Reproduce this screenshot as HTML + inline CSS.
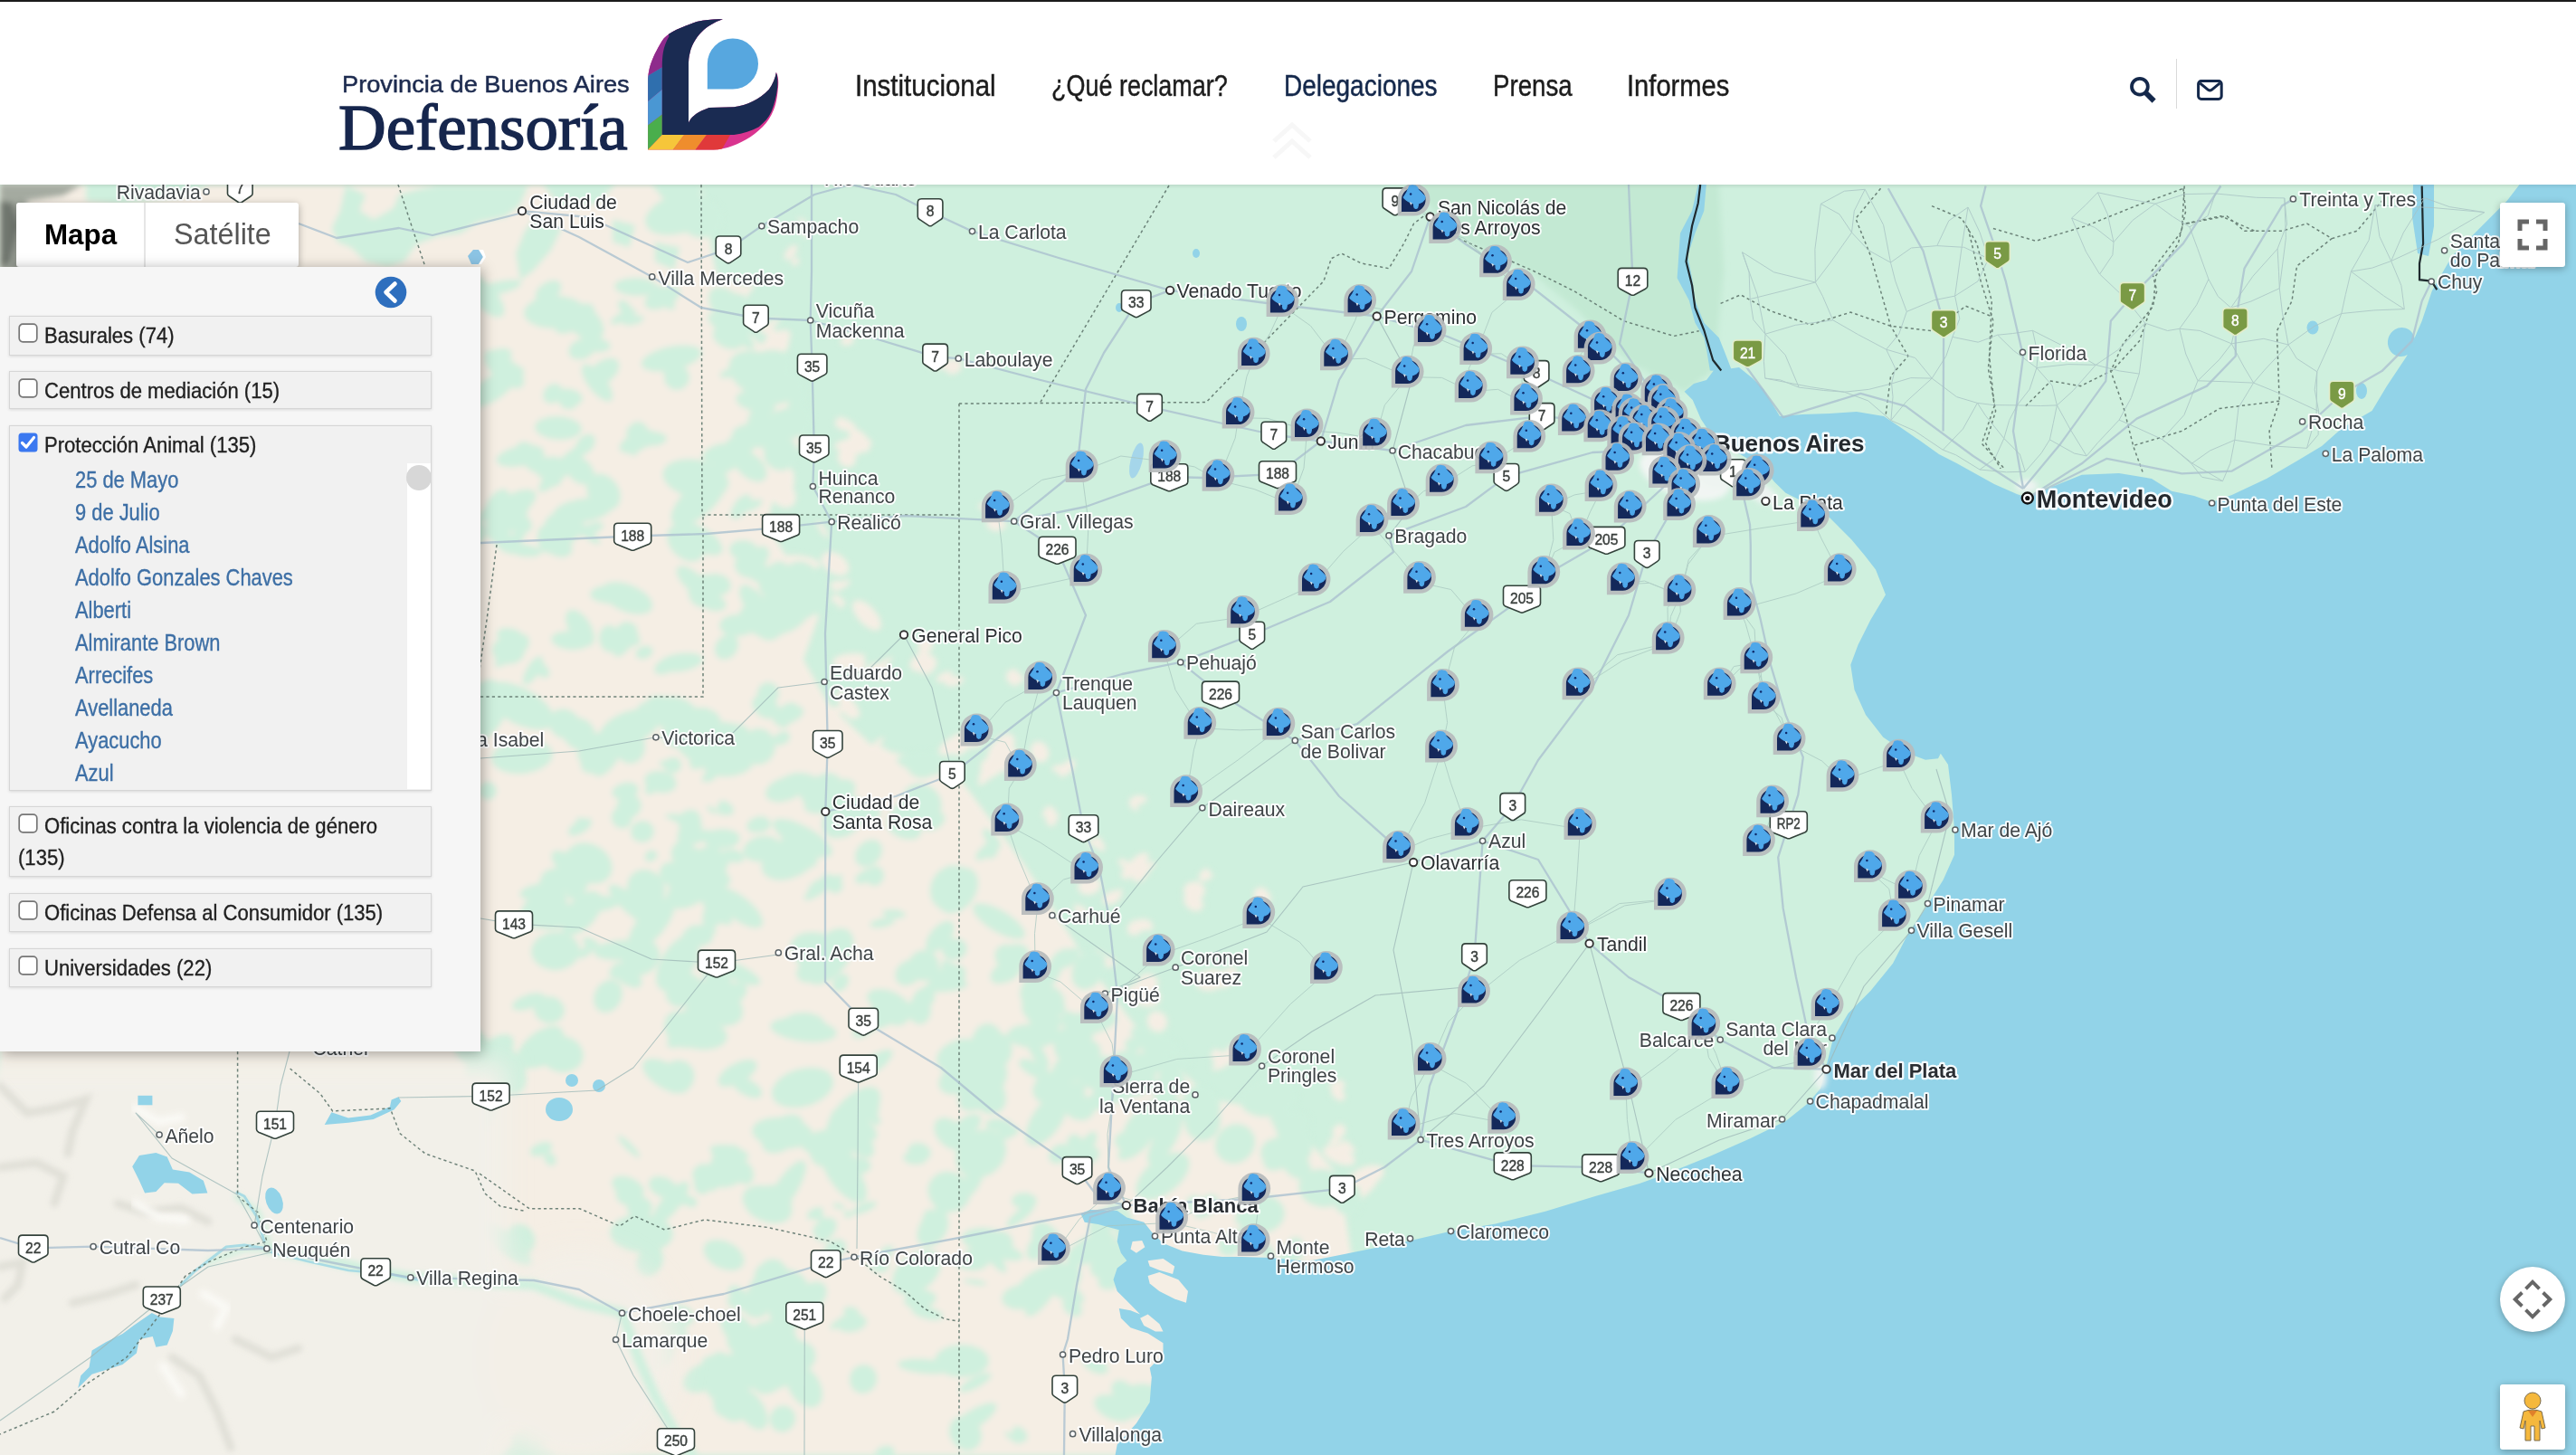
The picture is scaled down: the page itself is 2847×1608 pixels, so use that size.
<!DOCTYPE html>
<html><head><meta charset="utf-8"><title>Defensoría</title>
<style>html,body{margin:0;padding:0}body{width:2847px;height:1608px;overflow:hidden;position:relative;background:#fff;font-family:'Liberation Sans',sans-serif}</style></head>
<body>
<div style="position:absolute;left:0;top:204px;width:2847px;height:1404px;overflow:hidden;background:#cff0de"><svg width="2847" height="1404" viewBox="0 204 2847 1404" style="position:absolute;left:0;top:0;display:block" font-family="Liberation Sans, sans-serif"><defs><filter id="bl" x="-5%" y="-5%" width="110%" height="110%"><feGaussianBlur stdDeviation="3"/></filter><filter id="bl2"><feGaussianBlur stdDeviation="14"/></filter><g id="mk"><path d="M0,-17.9A17.9,17.9 0 1 1 0,17.9L-17.9,17.9L-17.9,0A17.9,17.9 0 0 1 0,-17.9Z" fill="#b7bbbc" fill-opacity="0.93"/><path d="M-0.3,-13.2A13.3,13.3 0 1 1 -0.3,13.4L-13.6,13.4L-13.6,0A13.3,13.3 0 0 1 -0.3,-13.2Z" fill="#14285a"/><path d="M-4.6,-15.3L-1.7,-15.9L2,-15.3L4,-13.6L4.6,-11.3L6.9,-8.9L9.8,-6.1L12.4,-3.2L11.8,-0.3L9.8,2L6.9,3.5L4.9,4.3L4.6,6.6L4,8.9L2.3,9.8L0.6,8.9L0,6.6L0.3,4.9L-1.7,3.8L-5.8,2L-8.4,0.3L-10.4,-1.4L-11.3,-2.6L-9.8,-4.9L-8.1,-7.5L-6.9,-10.1L-5.8,-13Z" fill="#4fa8ea" stroke="#4fa8ea" stroke-width="1.2" stroke-linejoin="round"/><path d="M-4.8,2.6L-2,3.6L-3.2,6.4Z" fill="#dfe9ee"/><circle cx="-3.5" cy="-6.2" r="1.25" fill="#0d2a6b"/></g></defs><rect x="0" y="204" width="2847" height="1404" fill="#cff0de"/><polygon points="1560.0,204.0 1900.0,204.0 1905.0,300.0 1895.0,408.0 1862.0,433.0 1800.0,400.0 1740.0,340.0 1690.0,300.0 1610.0,262.0" fill="#c3e9d3" filter="url(#bl)"/><g filter="url(#bl)"><polygon points="0.0,204.0 775.0,204.0 790.0,296.0 820.0,360.0 868.0,407.0 890.0,469.0 880.0,508.0 858.0,537.0 848.0,580.0 880.0,633.0 905.0,681.0 888.0,729.0 915.0,777.0 965.0,825.0 1053.0,850.0 1131.0,954.0 1209.0,1074.0 1261.0,1142.0 1339.0,1215.0 1420.0,1230.0 1480.0,1300.0 1495.0,1395.0 1300.0,1400.0 1300.0,1608.0 0.0,1608.0" fill="#f5eee4"/><g fill="#f5eee4"><ellipse cx="1100" cy="576" rx="9" ry="5" transform="rotate(-46 1100 576)"/><ellipse cx="1099" cy="562" rx="18" ry="6" transform="rotate(11 1099 562)"/><ellipse cx="1101" cy="579" rx="11" ry="8" transform="rotate(7 1101 579)"/><ellipse cx="1333" cy="969" rx="8" ry="4" transform="rotate(-20 1333 969)"/><ellipse cx="1331" cy="967" rx="8" ry="5" transform="rotate(-55 1331 967)"/><ellipse cx="1106" cy="830" rx="22" ry="12" transform="rotate(-57 1106 830)"/><ellipse cx="1113" cy="840" rx="16" ry="12" transform="rotate(-24 1113 840)"/><ellipse cx="1095" cy="848" rx="12" ry="10" transform="rotate(-33 1095 848)"/><ellipse cx="1258" cy="884" rx="10" ry="5" transform="rotate(-7 1258 884)"/><ellipse cx="1253" cy="890" rx="4" ry="3" transform="rotate(-4 1253 890)"/><ellipse cx="1253" cy="891" rx="7" ry="3" transform="rotate(46 1253 891)"/><ellipse cx="1479" cy="1209" rx="9" ry="6" transform="rotate(43 1479 1209)"/><ellipse cx="1480" cy="1198" rx="5" ry="5" transform="rotate(41 1480 1198)"/><ellipse cx="1478" cy="1200" rx="9" ry="5" transform="rotate(-4 1478 1200)"/><ellipse cx="1055" cy="753" rx="11" ry="5" transform="rotate(-14 1055 753)"/><ellipse cx="1044" cy="748" rx="10" ry="5" transform="rotate(-24 1044 748)"/><ellipse cx="935" cy="377" rx="6" ry="5" transform="rotate(-8 935 377)"/><ellipse cx="937" cy="376" rx="7" ry="5" transform="rotate(-35 937 376)"/><ellipse cx="938" cy="375" rx="6" ry="6" transform="rotate(29 938 375)"/><ellipse cx="946" cy="495" rx="8" ry="7" transform="rotate(52 946 495)"/><ellipse cx="950" cy="487" rx="15" ry="9" transform="rotate(51 950 487)"/><ellipse cx="937" cy="778" rx="19" ry="7" transform="rotate(49 937 778)"/><ellipse cx="924" cy="662" rx="5" ry="5" transform="rotate(-14 924 662)"/><ellipse cx="929" cy="664" rx="5" ry="3" transform="rotate(20 929 664)"/><ellipse cx="930" cy="668" rx="5" ry="3" transform="rotate(-48 930 668)"/><ellipse cx="879" cy="289" rx="4" ry="5" transform="rotate(35 879 289)"/><ellipse cx="874" cy="279" rx="10" ry="5" transform="rotate(-52 874 279)"/><ellipse cx="850" cy="360" rx="13" ry="4" transform="rotate(-30 850 360)"/><ellipse cx="855" cy="369" rx="8" ry="5" transform="rotate(29 855 369)"/><ellipse cx="847" cy="367" rx="6" ry="3" transform="rotate(29 847 367)"/><ellipse cx="1314" cy="1419" rx="10" ry="8" transform="rotate(-16 1314 1419)"/><ellipse cx="1311" cy="1412" rx="17" ry="4" transform="rotate(-47 1311 1412)"/><ellipse cx="946" cy="735" rx="11" ry="9" transform="rotate(-5 946 735)"/><ellipse cx="939" cy="728" rx="18" ry="6" transform="rotate(-7 939 728)"/><ellipse cx="930" cy="735" rx="11" ry="4" transform="rotate(16 930 735)"/><ellipse cx="1509" cy="1315" rx="18" ry="5" transform="rotate(-43 1509 1315)"/><ellipse cx="1510" cy="1300" rx="21" ry="11" transform="rotate(-21 1510 1300)"/><ellipse cx="1247" cy="962" rx="11" ry="6" transform="rotate(-59 1247 962)"/><ellipse cx="1242" cy="954" rx="7" ry="4" transform="rotate(31 1242 954)"/><ellipse cx="1124" cy="749" rx="8" ry="5" transform="rotate(12 1124 749)"/><ellipse cx="1119" cy="747" rx="7" ry="8" transform="rotate(29 1119 747)"/><ellipse cx="1121" cy="750" rx="7" ry="8" transform="rotate(-25 1121 750)"/><ellipse cx="1491" cy="1267" rx="10" ry="3" transform="rotate(46 1491 1267)"/><ellipse cx="1483" cy="1268" rx="6" ry="5" transform="rotate(2 1483 1268)"/><ellipse cx="1489" cy="1271" rx="8" ry="3" transform="rotate(-36 1489 1271)"/><ellipse cx="1358" cy="1167" rx="18" ry="7" transform="rotate(-49 1358 1167)"/><ellipse cx="1346" cy="1168" rx="9" ry="7" transform="rotate(56 1346 1168)"/><ellipse cx="1351" cy="1171" rx="16" ry="5" transform="rotate(-49 1351 1171)"/><ellipse cx="909" cy="585" rx="11" ry="3" transform="rotate(56 909 585)"/><ellipse cx="1233" cy="991" rx="11" ry="4" transform="rotate(-51 1233 991)"/><ellipse cx="1229" cy="992" rx="11" ry="7" transform="rotate(-26 1229 992)"/><ellipse cx="1041" cy="402" rx="17" ry="6" transform="rotate(4 1041 402)"/><ellipse cx="1054" cy="405" rx="8" ry="10" transform="rotate(56 1054 405)"/><ellipse cx="1027" cy="736" rx="11" ry="7" transform="rotate(-54 1027 736)"/><ellipse cx="1019" cy="732" rx="14" ry="10" transform="rotate(-22 1019 732)"/><ellipse cx="891" cy="256" rx="5" ry="5" transform="rotate(-25 891 256)"/><ellipse cx="889" cy="248" rx="10" ry="3" transform="rotate(50 889 248)"/><ellipse cx="890" cy="257" rx="5" ry="5" transform="rotate(4 890 257)"/><ellipse cx="817" cy="325" rx="20" ry="6" transform="rotate(-33 817 325)"/><ellipse cx="811" cy="322" rx="17" ry="11" transform="rotate(29 811 322)"/><ellipse cx="930" cy="784" rx="11" ry="4" transform="rotate(1 930 784)"/><ellipse cx="938" cy="783" rx="13" ry="7" transform="rotate(59 938 783)"/><ellipse cx="1357" cy="1080" rx="14" ry="8" transform="rotate(-53 1357 1080)"/><ellipse cx="1338" cy="1083" rx="17" ry="12" transform="rotate(-12 1338 1083)"/><ellipse cx="1195" cy="1007" rx="10" ry="5" transform="rotate(38 1195 1007)"/><ellipse cx="859" cy="379" rx="13" ry="12" transform="rotate(27 859 379)"/><ellipse cx="857" cy="379" rx="20" ry="10" transform="rotate(-38 857 379)"/><ellipse cx="885" cy="621" rx="22" ry="7" transform="rotate(9 885 621)"/><ellipse cx="1394" cy="989" rx="9" ry="8" transform="rotate(40 1394 989)"/><ellipse cx="1397" cy="989" rx="10" ry="5" transform="rotate(42 1397 989)"/><ellipse cx="1480" cy="1277" rx="19" ry="9" transform="rotate(23 1480 1277)"/><ellipse cx="935" cy="469" rx="12" ry="5" transform="rotate(38 935 469)"/><ellipse cx="934" cy="470" rx="12" ry="6" transform="rotate(15 934 470)"/><ellipse cx="1217" cy="1061" rx="16" ry="7" transform="rotate(16 1217 1061)"/><ellipse cx="1207" cy="1060" rx="13" ry="8" transform="rotate(-38 1207 1060)"/><ellipse cx="1264" cy="1100" rx="19" ry="12" transform="rotate(17 1264 1100)"/><ellipse cx="1265" cy="1098" rx="17" ry="12" transform="rotate(22 1265 1098)"/><ellipse cx="1269" cy="1086" rx="11" ry="10" transform="rotate(11 1269 1086)"/><ellipse cx="1212" cy="932" rx="8" ry="4" transform="rotate(45 1212 932)"/><ellipse cx="1210" cy="930" rx="8" ry="4" transform="rotate(-25 1210 930)"/><ellipse cx="1215" cy="934" rx="8" ry="5" transform="rotate(48 1215 934)"/><ellipse cx="936" cy="506" rx="11" ry="10" transform="rotate(58 936 506)"/><ellipse cx="943" cy="491" rx="21" ry="7" transform="rotate(-6 943 491)"/><ellipse cx="971" cy="829" rx="11" ry="5" transform="rotate(16 971 829)"/><ellipse cx="970" cy="821" rx="9" ry="3" transform="rotate(-41 970 821)"/><ellipse cx="1088" cy="858" rx="6" ry="7" transform="rotate(48 1088 858)"/><ellipse cx="1087" cy="863" rx="8" ry="3" transform="rotate(-30 1087 863)"/><ellipse cx="1094" cy="856" rx="12" ry="4" transform="rotate(-18 1094 856)"/><ellipse cx="923" cy="623" rx="17" ry="11" transform="rotate(35 923 623)"/><ellipse cx="893" cy="398" rx="6" ry="3" transform="rotate(-45 893 398)"/><ellipse cx="1279" cy="1129" rx="12" ry="11" transform="rotate(58 1279 1129)"/><ellipse cx="1076" cy="814" rx="10" ry="13" transform="rotate(-21 1076 814)"/><ellipse cx="1068" cy="819" rx="20" ry="8" transform="rotate(-49 1068 819)"/><ellipse cx="1058" cy="821" rx="23" ry="9" transform="rotate(-29 1058 821)"/><ellipse cx="1149" cy="831" rx="10" ry="12" transform="rotate(-22 1149 831)"/><ellipse cx="1161" cy="901" rx="10" ry="4" transform="rotate(9 1161 901)"/><ellipse cx="1162" cy="907" rx="6" ry="6" transform="rotate(-14 1162 907)"/><ellipse cx="1161" cy="898" rx="8" ry="6" transform="rotate(50 1161 898)"/><ellipse cx="972" cy="742" rx="13" ry="8" transform="rotate(25 972 742)"/><ellipse cx="973" cy="736" rx="16" ry="4" transform="rotate(-35 973 736)"/><ellipse cx="958" cy="680" rx="21" ry="10" transform="rotate(47 958 680)"/><ellipse cx="1320" cy="984" rx="12" ry="10" transform="rotate(3 1320 984)"/><ellipse cx="1319" cy="997" rx="9" ry="12" transform="rotate(-51 1319 997)"/><ellipse cx="1255" cy="1025" rx="10" ry="8" transform="rotate(-38 1255 1025)"/><ellipse cx="1266" cy="1022" rx="9" ry="6" transform="rotate(26 1266 1022)"/><ellipse cx="1475" cy="1261" rx="7" ry="4" transform="rotate(-21 1475 1261)"/><ellipse cx="1480" cy="1250" rx="8" ry="7" transform="rotate(-53 1480 1250)"/><ellipse cx="1204" cy="979" rx="13" ry="10" transform="rotate(-12 1204 979)"/><ellipse cx="1021" cy="717" rx="7" ry="5" transform="rotate(-34 1021 717)"/><ellipse cx="1023" cy="712" rx="9" ry="8" transform="rotate(55 1023 712)"/><ellipse cx="1258" cy="953" rx="14" ry="7" transform="rotate(-41 1258 953)"/><ellipse cx="1263" cy="962" rx="16" ry="5" transform="rotate(-34 1263 962)"/><ellipse cx="1261" cy="965" rx="11" ry="7" transform="rotate(-54 1261 965)"/><ellipse cx="1171" cy="849" rx="9" ry="4" transform="rotate(-6 1171 849)"/><ellipse cx="1179" cy="849" rx="12" ry="6" transform="rotate(-45 1179 849)"/><ellipse cx="1103" cy="843" rx="19" ry="6" transform="rotate(-2 1103 843)"/><ellipse cx="1121" cy="848" rx="14" ry="9" transform="rotate(31 1121 848)"/><ellipse cx="930" cy="647" rx="11" ry="4" transform="rotate(-28 930 647)"/><ellipse cx="924" cy="646" rx="7" ry="4" transform="rotate(-10 924 646)"/><ellipse cx="865" cy="546" rx="17" ry="13" transform="rotate(48 865 546)"/><ellipse cx="863" cy="533" rx="15" ry="13" transform="rotate(-4 863 533)"/><ellipse cx="864" cy="527" rx="14" ry="13" transform="rotate(-10 864 527)"/></g><g fill="#cff0de"><ellipse cx="803" cy="715" rx="15" ry="12" transform="rotate(-53 803 715)"/><ellipse cx="872" cy="468" rx="24" ry="17" transform="rotate(-4 872 468)"/><ellipse cx="755" cy="1325" rx="6" ry="7" transform="rotate(18 755 1325)"/><ellipse cx="763" cy="1328" rx="8" ry="6" transform="rotate(20 763 1328)"/><ellipse cx="735" cy="329" rx="16" ry="7" transform="rotate(54 735 329)"/><ellipse cx="732" cy="329" rx="21" ry="11" transform="rotate(-24 732 329)"/><ellipse cx="1203" cy="1263" rx="14" ry="7" transform="rotate(-57 1203 1263)"/><ellipse cx="1189" cy="1264" rx="11" ry="9" transform="rotate(55 1189 1264)"/><ellipse cx="1197" cy="1278" rx="19" ry="11" transform="rotate(-16 1197 1278)"/><ellipse cx="1382" cy="1330" rx="27" ry="10" transform="rotate(-58 1382 1330)"/><ellipse cx="1394" cy="1342" rx="26" ry="21" transform="rotate(-8 1394 1342)"/><ellipse cx="1390" cy="1349" rx="19" ry="12" transform="rotate(-25 1390 1349)"/><ellipse cx="811" cy="946" rx="12" ry="7" transform="rotate(14 811 946)"/><ellipse cx="798" cy="927" rx="20" ry="11" transform="rotate(-2 798 927)"/><ellipse cx="1185" cy="1444" rx="13" ry="9" transform="rotate(49 1185 1444)"/><ellipse cx="1431" cy="1386" rx="10" ry="5" transform="rotate(-24 1431 1386)"/><ellipse cx="1427" cy="1388" rx="15" ry="7" transform="rotate(-16 1427 1388)"/><ellipse cx="1430" cy="1377" rx="11" ry="8" transform="rotate(-49 1430 1377)"/><ellipse cx="642" cy="703" rx="9" ry="8" transform="rotate(15 642 703)"/><ellipse cx="641" cy="694" rx="23" ry="12" transform="rotate(57 641 694)"/><ellipse cx="1389" cy="1347" rx="7" ry="8" transform="rotate(-9 1389 1347)"/><ellipse cx="1378" cy="1362" rx="13" ry="9" transform="rotate(-50 1378 1362)"/><ellipse cx="1392" cy="1346" rx="15" ry="7" transform="rotate(-19 1392 1346)"/><ellipse cx="710" cy="919" rx="13" ry="12" transform="rotate(-13 710 919)"/><ellipse cx="850" cy="1329" rx="25" ry="19" transform="rotate(-15 850 1329)"/><ellipse cx="862" cy="1330" rx="13" ry="14" transform="rotate(-31 862 1330)"/><ellipse cx="1047" cy="1081" rx="22" ry="13" transform="rotate(-25 1047 1081)"/><ellipse cx="1054" cy="1075" rx="18" ry="7" transform="rotate(47 1054 1075)"/><ellipse cx="1045" cy="1090" rx="25" ry="6" transform="rotate(-5 1045 1090)"/><ellipse cx="812" cy="1550" rx="20" ry="21" transform="rotate(-2 812 1550)"/><ellipse cx="778" cy="1522" rx="25" ry="15" transform="rotate(-24 778 1522)"/><ellipse cx="1158" cy="1373" rx="25" ry="15" transform="rotate(60 1158 1373)"/><ellipse cx="653" cy="585" rx="15" ry="6" transform="rotate(-22 653 585)"/><ellipse cx="655" cy="595" rx="10" ry="4" transform="rotate(31 655 595)"/><ellipse cx="646" cy="971" rx="15" ry="5" transform="rotate(-58 646 971)"/><ellipse cx="788" cy="964" rx="23" ry="11" transform="rotate(-50 788 964)"/><ellipse cx="793" cy="970" rx="15" ry="10" transform="rotate(23 793 970)"/><ellipse cx="723" cy="1467" rx="23" ry="12" transform="rotate(25 723 1467)"/><ellipse cx="727" cy="1481" rx="25" ry="10" transform="rotate(-46 727 1481)"/><ellipse cx="724" cy="1472" rx="15" ry="14" transform="rotate(3 724 1472)"/><ellipse cx="806" cy="827" rx="30" ry="18" transform="rotate(-55 806 827)"/><ellipse cx="806" cy="815" rx="32" ry="11" transform="rotate(30 806 815)"/><ellipse cx="838" cy="825" rx="19" ry="20" transform="rotate(14 838 825)"/><ellipse cx="1181" cy="1059" rx="15" ry="8" transform="rotate(-41 1181 1059)"/><ellipse cx="1173" cy="1060" rx="15" ry="9" transform="rotate(-41 1173 1060)"/><ellipse cx="635" cy="352" rx="25" ry="12" transform="rotate(-32 635 352)"/><ellipse cx="646" cy="356" rx="25" ry="16" transform="rotate(42 646 356)"/><ellipse cx="567" cy="409" rx="13" ry="7" transform="rotate(15 567 409)"/><ellipse cx="552" cy="393" rx="14" ry="8" transform="rotate(-11 552 393)"/><ellipse cx="1207" cy="1129" rx="28" ry="13" transform="rotate(-10 1207 1129)"/><ellipse cx="1196" cy="1144" rx="26" ry="11" transform="rotate(-58 1196 1144)"/><ellipse cx="659" cy="419" rx="6" ry="6" transform="rotate(17 659 419)"/><ellipse cx="666" cy="417" rx="11" ry="5" transform="rotate(1 666 417)"/><ellipse cx="787" cy="1513" rx="11" ry="15" transform="rotate(-22 787 1513)"/><ellipse cx="795" cy="1507" rx="12" ry="13" transform="rotate(23 795 1507)"/><ellipse cx="714" cy="982" rx="22" ry="20" transform="rotate(48 714 982)"/><ellipse cx="699" cy="1001" rx="34" ry="10" transform="rotate(41 699 1001)"/><ellipse cx="953" cy="903" rx="22" ry="9" transform="rotate(-17 953 903)"/><ellipse cx="936" cy="903" rx="25" ry="17" transform="rotate(-55 936 903)"/><ellipse cx="927" cy="907" rx="21" ry="17" transform="rotate(-50 927 907)"/><ellipse cx="892" cy="1060" rx="22" ry="11" transform="rotate(47 892 1060)"/><ellipse cx="891" cy="1076" rx="11" ry="10" transform="rotate(16 891 1076)"/><ellipse cx="892" cy="1437" rx="26" ry="15" transform="rotate(-42 892 1437)"/><ellipse cx="874" cy="1424" rx="22" ry="19" transform="rotate(55 874 1424)"/><ellipse cx="873" cy="1444" rx="24" ry="25" transform="rotate(44 873 1444)"/><ellipse cx="1112" cy="1250" rx="9" ry="9" transform="rotate(14 1112 1250)"/><ellipse cx="1104" cy="1243" rx="15" ry="7" transform="rotate(3 1104 1243)"/><ellipse cx="1115" cy="1251" rx="12" ry="6" transform="rotate(-16 1115 1251)"/><ellipse cx="787" cy="895" rx="7" ry="3" transform="rotate(33 787 895)"/><ellipse cx="1291" cy="1216" rx="28" ry="10" transform="rotate(51 1291 1216)"/><ellipse cx="1297" cy="1191" rx="20" ry="8" transform="rotate(49 1297 1191)"/><ellipse cx="1295" cy="1194" rx="14" ry="16" transform="rotate(-37 1295 1194)"/><ellipse cx="719" cy="946" rx="7" ry="6" transform="rotate(-51 719 946)"/><ellipse cx="723" cy="944" rx="5" ry="3" transform="rotate(51 723 944)"/><ellipse cx="1050" cy="1253" rx="21" ry="14" transform="rotate(46 1050 1253)"/><ellipse cx="1068" cy="1245" rx="19" ry="10" transform="rotate(-36 1068 1245)"/><ellipse cx="898" cy="873" rx="16" ry="14" transform="rotate(-54 898 873)"/><ellipse cx="917" cy="880" rx="31" ry="15" transform="rotate(-26 917 880)"/><ellipse cx="913" cy="873" rx="20" ry="17" transform="rotate(-54 913 873)"/><ellipse cx="954" cy="1524" rx="15" ry="16" transform="rotate(19 954 1524)"/><ellipse cx="1073" cy="1390" rx="10" ry="5" transform="rotate(55 1073 1390)"/><ellipse cx="1065" cy="1397" rx="17" ry="5" transform="rotate(19 1065 1397)"/><ellipse cx="975" cy="1020" rx="14" ry="5" transform="rotate(-10 975 1020)"/><ellipse cx="1023" cy="1510" rx="31" ry="8" transform="rotate(5 1023 1510)"/><ellipse cx="553" cy="593" rx="23" ry="10" transform="rotate(52 553 593)"/><ellipse cx="519" cy="587" rx="18" ry="16" transform="rotate(26 519 587)"/><ellipse cx="755" cy="1094" rx="17" ry="21" transform="rotate(49 755 1094)"/><ellipse cx="749" cy="1064" rx="35" ry="18" transform="rotate(-58 749 1064)"/><ellipse cx="1206" cy="1380" rx="30" ry="14" transform="rotate(-28 1206 1380)"/><ellipse cx="731" cy="1477" rx="21" ry="14" transform="rotate(3 731 1477)"/><ellipse cx="746" cy="1454" rx="22" ry="13" transform="rotate(6 746 1454)"/><ellipse cx="695" cy="1267" rx="17" ry="4" transform="rotate(45 695 1267)"/><ellipse cx="1078" cy="1417" rx="13" ry="3" transform="rotate(8 1078 1417)"/><ellipse cx="736" cy="787" rx="21" ry="7" transform="rotate(20 736 787)"/><ellipse cx="739" cy="795" rx="17" ry="9" transform="rotate(-3 739 795)"/><ellipse cx="1323" cy="1231" rx="9" ry="6" transform="rotate(-15 1323 1231)"/><ellipse cx="1327" cy="1218" rx="11" ry="8" transform="rotate(-21 1327 1218)"/><ellipse cx="890" cy="1046" rx="17" ry="9" transform="rotate(7 890 1046)"/><ellipse cx="916" cy="1057" rx="36" ry="21" transform="rotate(-52 916 1057)"/><ellipse cx="896" cy="1265" rx="14" ry="9" transform="rotate(37 896 1265)"/><ellipse cx="909" cy="1277" rx="15" ry="12" transform="rotate(36 909 1277)"/><ellipse cx="695" cy="891" rx="13" ry="14" transform="rotate(56 695 891)"/><ellipse cx="691" cy="874" rx="15" ry="9" transform="rotate(-13 691 874)"/><ellipse cx="630" cy="581" rx="17" ry="10" transform="rotate(13 630 581)"/><ellipse cx="621" cy="584" rx="20" ry="17" transform="rotate(25 621 584)"/><ellipse cx="757" cy="908" rx="8" ry="5" transform="rotate(20 757 908)"/><ellipse cx="750" cy="905" rx="15" ry="4" transform="rotate(16 750 905)"/><ellipse cx="753" cy="909" rx="12" ry="4" transform="rotate(56 753 909)"/><ellipse cx="955" cy="1335" rx="15" ry="5" transform="rotate(-23 955 1335)"/><ellipse cx="818" cy="414" rx="9" ry="8" transform="rotate(29 818 414)"/><ellipse cx="808" cy="412" rx="13" ry="5" transform="rotate(-14 808 412)"/><ellipse cx="1292" cy="1178" rx="14" ry="8" transform="rotate(34 1292 1178)"/><ellipse cx="1303" cy="1176" rx="15" ry="7" transform="rotate(-24 1303 1176)"/><ellipse cx="808" cy="355" rx="17" ry="9" transform="rotate(15 808 355)"/><ellipse cx="811" cy="339" rx="17" ry="13" transform="rotate(-40 811 339)"/><ellipse cx="775" cy="922" rx="14" ry="4" transform="rotate(-11 775 922)"/><ellipse cx="759" cy="978" rx="15" ry="9" transform="rotate(31 759 978)"/><ellipse cx="744" cy="967" rx="16" ry="13" transform="rotate(39 744 967)"/><ellipse cx="927" cy="1333" rx="7" ry="3" transform="rotate(15 927 1333)"/><ellipse cx="937" cy="1342" rx="5" ry="4" transform="rotate(15 937 1342)"/><ellipse cx="598" cy="1270" rx="13" ry="7" transform="rotate(-22 598 1270)"/><ellipse cx="608" cy="1281" rx="8" ry="6" transform="rotate(55 608 1281)"/><ellipse cx="762" cy="974" rx="17" ry="8" transform="rotate(25 762 974)"/><ellipse cx="787" cy="976" rx="19" ry="11" transform="rotate(47 787 976)"/><ellipse cx="764" cy="981" rx="31" ry="18" transform="rotate(-37 764 981)"/><ellipse cx="889" cy="1532" rx="26" ry="17" transform="rotate(57 889 1532)"/><ellipse cx="881" cy="1500" rx="21" ry="18" transform="rotate(-19 881 1500)"/><ellipse cx="773" cy="1143" rx="31" ry="17" transform="rotate(7 773 1143)"/><ellipse cx="762" cy="1142" rx="28" ry="10" transform="rotate(-29 762 1142)"/><ellipse cx="749" cy="1190" rx="19" ry="18" transform="rotate(-43 749 1190)"/><ellipse cx="736" cy="1189" rx="29" ry="14" transform="rotate(31 736 1189)"/><ellipse cx="712" cy="721" rx="10" ry="7" transform="rotate(-20 712 721)"/><ellipse cx="551" cy="318" rx="26" ry="7" transform="rotate(-13 551 318)"/><ellipse cx="535" cy="327" rx="30" ry="13" transform="rotate(47 535 327)"/><ellipse cx="1399" cy="1382" rx="12" ry="7" transform="rotate(49 1399 1382)"/><ellipse cx="748" cy="417" rx="14" ry="14" transform="rotate(-12 748 417)"/><ellipse cx="614" cy="1051" rx="27" ry="21" transform="rotate(-2 614 1051)"/><ellipse cx="616" cy="1051" rx="22" ry="20" transform="rotate(-57 616 1051)"/><ellipse cx="1084" cy="1275" rx="30" ry="25" transform="rotate(-37 1084 1275)"/><ellipse cx="521" cy="1157" rx="19" ry="22" transform="rotate(-38 521 1157)"/><ellipse cx="541" cy="1169" rx="34" ry="16" transform="rotate(-43 541 1169)"/><ellipse cx="555" cy="1180" rx="34" ry="22" transform="rotate(54 555 1180)"/><ellipse cx="1333" cy="1337" rx="14" ry="7" transform="rotate(-32 1333 1337)"/><ellipse cx="1336" cy="1328" rx="11" ry="7" transform="rotate(-23 1336 1328)"/><ellipse cx="1320" cy="1330" rx="9" ry="9" transform="rotate(27 1320 1330)"/><ellipse cx="959" cy="1219" rx="17" ry="10" transform="rotate(55 959 1219)"/><ellipse cx="846" cy="781" rx="16" ry="12" transform="rotate(37 846 781)"/><ellipse cx="849" cy="766" rx="12" ry="12" transform="rotate(21 849 766)"/><ellipse cx="1152" cy="1080" rx="10" ry="7" transform="rotate(18 1152 1080)"/><ellipse cx="557" cy="408" rx="28" ry="13" transform="rotate(43 557 408)"/><ellipse cx="545" cy="429" rx="32" ry="13" transform="rotate(-35 545 429)"/><ellipse cx="995" cy="1410" rx="8" ry="5" transform="rotate(-27 995 1410)"/><ellipse cx="1004" cy="1412" rx="12" ry="7" transform="rotate(-3 1004 1412)"/><ellipse cx="1005" cy="1416" rx="12" ry="4" transform="rotate(-24 1005 1416)"/><ellipse cx="1059" cy="1320" rx="33" ry="11" transform="rotate(-40 1059 1320)"/><ellipse cx="1049" cy="1317" rx="24" ry="22" transform="rotate(26 1049 1317)"/><ellipse cx="1206" cy="1178" rx="23" ry="7" transform="rotate(47 1206 1178)"/><ellipse cx="1191" cy="1161" rx="26" ry="16" transform="rotate(3 1191 1161)"/><ellipse cx="1286" cy="1538" rx="21" ry="14" transform="rotate(-52 1286 1538)"/><ellipse cx="1256" cy="1548" rx="27" ry="18" transform="rotate(-16 1256 1548)"/><ellipse cx="574" cy="780" rx="42" ry="20" transform="rotate(28 574 780)"/><ellipse cx="1016" cy="846" rx="26" ry="8" transform="rotate(16 1016 846)"/><ellipse cx="1022" cy="840" rx="22" ry="10" transform="rotate(3 1022 840)"/><ellipse cx="1019" cy="848" rx="16" ry="12" transform="rotate(5 1019 848)"/><ellipse cx="1088" cy="942" rx="12" ry="6" transform="rotate(-40 1088 942)"/><ellipse cx="1094" cy="940" rx="9" ry="9" transform="rotate(-39 1094 940)"/><ellipse cx="800" cy="895" rx="7" ry="6" transform="rotate(-16 800 895)"/><ellipse cx="802" cy="893" rx="10" ry="7" transform="rotate(37 802 893)"/><ellipse cx="1171" cy="1275" rx="13" ry="10" transform="rotate(-34 1171 1275)"/><ellipse cx="1146" cy="1379" rx="15" ry="10" transform="rotate(-59 1146 1379)"/><ellipse cx="783" cy="802" rx="12" ry="6" transform="rotate(-54 783 802)"/><ellipse cx="778" cy="791" rx="14" ry="9" transform="rotate(10 778 791)"/><ellipse cx="774" cy="801" rx="11" ry="12" transform="rotate(7 774 801)"/><ellipse cx="672" cy="1101" rx="15" ry="19" transform="rotate(28 672 1101)"/><ellipse cx="1096" cy="927" rx="14" ry="6" transform="rotate(49 1096 927)"/><ellipse cx="1361" cy="1374" rx="16" ry="12" transform="rotate(-42 1361 1374)"/><ellipse cx="539" cy="874" rx="10" ry="10" transform="rotate(-49 539 874)"/><ellipse cx="756" cy="944" rx="14" ry="15" transform="rotate(-26 756 944)"/><ellipse cx="756" cy="970" rx="25" ry="13" transform="rotate(4 756 970)"/><ellipse cx="1213" cy="1176" rx="19" ry="8" transform="rotate(-13 1213 1176)"/><ellipse cx="1202" cy="1192" rx="15" ry="9" transform="rotate(38 1202 1192)"/><ellipse cx="1188" cy="1208" rx="13" ry="11" transform="rotate(-59 1188 1208)"/><ellipse cx="606" cy="322" rx="16" ry="10" transform="rotate(-34 606 322)"/><ellipse cx="613" cy="345" rx="34" ry="18" transform="rotate(-2 613 345)"/><ellipse cx="1152" cy="1084" rx="26" ry="11" transform="rotate(-41 1152 1084)"/><ellipse cx="1157" cy="1103" rx="26" ry="9" transform="rotate(39 1157 1103)"/><ellipse cx="1462" cy="1313" rx="27" ry="21" transform="rotate(9 1462 1313)"/><ellipse cx="1489" cy="1325" rx="16" ry="18" transform="rotate(-13 1489 1325)"/><ellipse cx="715" cy="779" rx="11" ry="4" transform="rotate(-20 715 779)"/><ellipse cx="731" cy="775" rx="15" ry="6" transform="rotate(5 731 775)"/><ellipse cx="1151" cy="1124" rx="27" ry="14" transform="rotate(55 1151 1124)"/><ellipse cx="1140" cy="1145" rx="27" ry="13" transform="rotate(3 1140 1145)"/><ellipse cx="1275" cy="1170" rx="11" ry="9" transform="rotate(-44 1275 1170)"/><ellipse cx="1281" cy="1174" rx="12" ry="11" transform="rotate(9 1281 1174)"/><ellipse cx="1146" cy="1087" rx="25" ry="13" transform="rotate(-50 1146 1087)"/><ellipse cx="1153" cy="1110" rx="24" ry="21" transform="rotate(-17 1153 1110)"/><ellipse cx="748" cy="788" rx="26" ry="17" transform="rotate(20 748 788)"/><ellipse cx="1426" cy="1238" rx="22" ry="10" transform="rotate(3 1426 1238)"/><ellipse cx="1434" cy="1257" rx="11" ry="9" transform="rotate(-52 1434 1257)"/><ellipse cx="913" cy="1358" rx="14" ry="10" transform="rotate(-51 913 1358)"/><ellipse cx="908" cy="1362" rx="9" ry="11" transform="rotate(-34 908 1362)"/><ellipse cx="1017" cy="1436" rx="18" ry="10" transform="rotate(-8 1017 1436)"/><ellipse cx="1025" cy="1451" rx="18" ry="7" transform="rotate(14 1025 1451)"/><ellipse cx="1112" cy="1074" rx="19" ry="11" transform="rotate(-28 1112 1074)"/><ellipse cx="1120" cy="1057" rx="18" ry="13" transform="rotate(-23 1120 1057)"/><ellipse cx="1113" cy="1057" rx="14" ry="13" transform="rotate(37 1113 1057)"/><ellipse cx="691" cy="340" rx="10" ry="6" transform="rotate(48 691 340)"/><ellipse cx="700" cy="354" rx="12" ry="5" transform="rotate(-13 700 354)"/><ellipse cx="689" cy="350" rx="16" ry="5" transform="rotate(-27 689 350)"/><ellipse cx="1162" cy="1203" rx="21" ry="17" transform="rotate(-15 1162 1203)"/><ellipse cx="1157" cy="1237" rx="34" ry="16" transform="rotate(-55 1157 1237)"/><ellipse cx="1193" cy="1224" rx="17" ry="14" transform="rotate(15 1193 1224)"/><ellipse cx="968" cy="1238" rx="6" ry="5" transform="rotate(52 968 1238)"/><ellipse cx="959" cy="1248" rx="14" ry="7" transform="rotate(50 959 1248)"/><ellipse cx="823" cy="617" rx="11" ry="5" transform="rotate(-45 823 617)"/><ellipse cx="831" cy="609" rx="8" ry="3" transform="rotate(57 831 609)"/><ellipse cx="815" cy="691" rx="20" ry="12" transform="rotate(-1 815 691)"/><ellipse cx="870" cy="677" rx="11" ry="6" transform="rotate(-5 870 677)"/><ellipse cx="1402" cy="1213" rx="32" ry="21" transform="rotate(-8 1402 1213)"/><ellipse cx="830" cy="1557" rx="26" ry="14" transform="rotate(56 830 1557)"/><ellipse cx="804" cy="1551" rx="16" ry="16" transform="rotate(-58 804 1551)"/><ellipse cx="988" cy="1010" rx="13" ry="5" transform="rotate(5 988 1010)"/><ellipse cx="563" cy="721" rx="22" ry="7" transform="rotate(-46 563 721)"/><ellipse cx="573" cy="713" rx="14" ry="10" transform="rotate(-46 573 713)"/><ellipse cx="562" cy="719" rx="18" ry="15" transform="rotate(7 562 719)"/><ellipse cx="674" cy="657" rx="22" ry="10" transform="rotate(1 674 657)"/><ellipse cx="693" cy="661" rx="30" ry="15" transform="rotate(22 693 661)"/><ellipse cx="1182" cy="1148" rx="19" ry="13" transform="rotate(-16 1182 1148)"/><ellipse cx="1184" cy="1129" rx="12" ry="10" transform="rotate(48 1184 1129)"/><ellipse cx="1164" cy="1130" rx="10" ry="9" transform="rotate(-43 1164 1130)"/><ellipse cx="875" cy="1455" rx="17" ry="6" transform="rotate(8 875 1455)"/><ellipse cx="878" cy="1442" rx="16" ry="11" transform="rotate(25 878 1442)"/><ellipse cx="1255" cy="1199" rx="13" ry="13" transform="rotate(21 1255 1199)"/><ellipse cx="1257" cy="1193" rx="17" ry="19" transform="rotate(34 1257 1193)"/><ellipse cx="1016" cy="1273" rx="13" ry="10" transform="rotate(14 1016 1273)"/><ellipse cx="1011" cy="1280" rx="13" ry="7" transform="rotate(5 1011 1280)"/><ellipse cx="611" cy="982" rx="18" ry="11" transform="rotate(48 611 982)"/><ellipse cx="638" cy="981" rx="15" ry="9" transform="rotate(-49 638 981)"/><ellipse cx="788" cy="666" rx="15" ry="9" transform="rotate(14 788 666)"/><ellipse cx="707" cy="481" rx="16" ry="7" transform="rotate(19 707 481)"/><ellipse cx="705" cy="480" rx="12" ry="14" transform="rotate(2 705 480)"/><ellipse cx="1246" cy="1182" rx="22" ry="20" transform="rotate(47 1246 1182)"/><ellipse cx="1243" cy="1197" rx="38" ry="18" transform="rotate(-25 1243 1197)"/><ellipse cx="1225" cy="1207" rx="33" ry="11" transform="rotate(-37 1225 1207)"/><ellipse cx="562" cy="702" rx="13" ry="8" transform="rotate(8 562 702)"/><ellipse cx="576" cy="705" rx="12" ry="4" transform="rotate(47 576 705)"/><ellipse cx="1099" cy="1162" rx="19" ry="22" transform="rotate(29 1099 1162)"/><ellipse cx="1091" cy="1152" rx="17" ry="21" transform="rotate(6 1091 1152)"/><ellipse cx="1179" cy="1416" rx="21" ry="13" transform="rotate(-57 1179 1416)"/><ellipse cx="1186" cy="1428" rx="16" ry="6" transform="rotate(43 1186 1428)"/><ellipse cx="1274" cy="1238" rx="37" ry="19" transform="rotate(-35 1274 1238)"/><ellipse cx="868" cy="1315" rx="38" ry="12" transform="rotate(-57 868 1315)"/><ellipse cx="785" cy="857" rx="11" ry="5" transform="rotate(-32 785 857)"/><ellipse cx="784" cy="858" rx="6" ry="7" transform="rotate(57 784 858)"/><ellipse cx="720" cy="1021" rx="36" ry="15" transform="rotate(-50 720 1021)"/><ellipse cx="686" cy="1050" rx="30" ry="11" transform="rotate(-5 686 1050)"/><ellipse cx="708" cy="1058" rx="22" ry="19" transform="rotate(-31 708 1058)"/><ellipse cx="624" cy="800" rx="18" ry="16" transform="rotate(35 624 800)"/><ellipse cx="617" cy="473" rx="26" ry="13" transform="rotate(3 617 473)"/><ellipse cx="854" cy="1423" rx="26" ry="12" transform="rotate(-20 854 1423)"/><ellipse cx="852" cy="1479" rx="28" ry="20" transform="rotate(-9 852 1479)"/><ellipse cx="843" cy="1507" rx="20" ry="11" transform="rotate(-24 843 1507)"/><ellipse cx="820" cy="1484" rx="17" ry="14" transform="rotate(23 820 1484)"/><ellipse cx="835" cy="1441" rx="16" ry="15" transform="rotate(43 835 1441)"/><ellipse cx="596" cy="1168" rx="30" ry="11" transform="rotate(-14 596 1168)"/><ellipse cx="1004" cy="1075" rx="16" ry="13" transform="rotate(-41 1004 1075)"/><ellipse cx="1021" cy="1067" rx="17" ry="17" transform="rotate(-50 1021 1067)"/><ellipse cx="1429" cy="1270" rx="23" ry="20" transform="rotate(-50 1429 1270)"/><ellipse cx="1424" cy="1252" rx="20" ry="10" transform="rotate(45 1424 1252)"/><ellipse cx="1412" cy="1275" rx="19" ry="17" transform="rotate(18 1412 1275)"/><ellipse cx="628" cy="441" rx="12" ry="11" transform="rotate(57 628 441)"/><ellipse cx="611" cy="435" rx="12" ry="10" transform="rotate(-47 611 435)"/><ellipse cx="629" cy="439" rx="15" ry="9" transform="rotate(9 629 439)"/><ellipse cx="647" cy="491" rx="13" ry="9" transform="rotate(-48 647 491)"/><ellipse cx="571" cy="1606" rx="17" ry="9" transform="rotate(-16 571 1606)"/><ellipse cx="589" cy="1612" rx="30" ry="18" transform="rotate(15 589 1612)"/><ellipse cx="589" cy="1587" rx="25" ry="13" transform="rotate(-17 589 1587)"/><ellipse cx="622" cy="973" rx="6" ry="8" transform="rotate(-17 622 973)"/><ellipse cx="631" cy="972" rx="10" ry="5" transform="rotate(-3 631 972)"/><ellipse cx="621" cy="974" rx="14" ry="3" transform="rotate(59 621 974)"/><ellipse cx="606" cy="534" rx="8" ry="6" transform="rotate(-12 606 534)"/><ellipse cx="608" cy="517" rx="16" ry="12" transform="rotate(-20 608 517)"/><ellipse cx="610" cy="529" rx="11" ry="8" transform="rotate(23 610 529)"/><ellipse cx="667" cy="411" rx="20" ry="12" transform="rotate(-37 667 411)"/><ellipse cx="660" cy="423" rx="25" ry="10" transform="rotate(52 660 423)"/><ellipse cx="865" cy="1568" rx="14" ry="15" transform="rotate(27 865 1568)"/><ellipse cx="776" cy="1028" rx="16" ry="6" transform="rotate(4 776 1028)"/><ellipse cx="771" cy="1035" rx="17" ry="11" transform="rotate(2 771 1035)"/><ellipse cx="693" cy="699" rx="12" ry="12" transform="rotate(19 693 699)"/><ellipse cx="691" cy="710" rx="19" ry="8" transform="rotate(-53 691 710)"/><ellipse cx="752" cy="732" rx="25" ry="10" transform="rotate(-9 752 732)"/><ellipse cx="736" cy="736" rx="14" ry="8" transform="rotate(-26 736 736)"/><ellipse cx="589" cy="741" rx="18" ry="7" transform="rotate(-58 589 741)"/><ellipse cx="597" cy="739" rx="13" ry="7" transform="rotate(43 597 739)"/><ellipse cx="697" cy="495" rx="10" ry="6" transform="rotate(50 697 495)"/><ellipse cx="814" cy="497" rx="36" ry="14" transform="rotate(-46 814 497)"/><ellipse cx="829" cy="515" rx="22" ry="13" transform="rotate(41 829 515)"/><ellipse cx="1019" cy="896" rx="9" ry="10" transform="rotate(0 1019 896)"/><ellipse cx="1031" cy="907" rx="14" ry="10" transform="rotate(-25 1031 907)"/><ellipse cx="841" cy="415" rx="38" ry="24" transform="rotate(27 841 415)"/><ellipse cx="1254" cy="1176" rx="29" ry="11" transform="rotate(-15 1254 1176)"/><ellipse cx="1278" cy="1151" rx="31" ry="10" transform="rotate(24 1278 1151)"/><ellipse cx="1095" cy="1385" rx="27" ry="7" transform="rotate(52 1095 1385)"/><ellipse cx="1088" cy="1370" rx="25" ry="13" transform="rotate(5 1088 1370)"/><ellipse cx="964" cy="1177" rx="27" ry="9" transform="rotate(-35 964 1177)"/><ellipse cx="1154" cy="1426" rx="34" ry="11" transform="rotate(-56 1154 1426)"/><ellipse cx="1156" cy="1413" rx="33" ry="13" transform="rotate(-23 1156 1413)"/><ellipse cx="1131" cy="1433" rx="24" ry="14" transform="rotate(-8 1131 1433)"/><ellipse cx="859" cy="1406" rx="18" ry="11" transform="rotate(41 859 1406)"/><ellipse cx="847" cy="1409" rx="13" ry="11" transform="rotate(27 847 1409)"/><ellipse cx="840" cy="1422" rx="18" ry="11" transform="rotate(-57 840 1422)"/><ellipse cx="848" cy="1331" rx="29" ry="19" transform="rotate(25 848 1331)"/><ellipse cx="889" cy="1130" rx="22" ry="11" transform="rotate(2 889 1130)"/><ellipse cx="888" cy="1138" rx="37" ry="13" transform="rotate(7 888 1138)"/><ellipse cx="887" cy="1202" rx="35" ry="21" transform="rotate(-16 887 1202)"/><ellipse cx="657" cy="999" rx="28" ry="9" transform="rotate(-5 657 999)"/><ellipse cx="643" cy="1009" rx="29" ry="16" transform="rotate(-49 643 1009)"/><ellipse cx="898" cy="1052" rx="19" ry="8" transform="rotate(60 898 1052)"/><ellipse cx="908" cy="1052" rx="18" ry="7" transform="rotate(44 908 1052)"/><ellipse cx="896" cy="1038" rx="19" ry="8" transform="rotate(-4 896 1038)"/><ellipse cx="887" cy="926" rx="37" ry="13" transform="rotate(29 887 926)"/><ellipse cx="875" cy="947" rx="36" ry="22" transform="rotate(-28 875 947)"/><ellipse cx="769" cy="529" rx="37" ry="21" transform="rotate(11 769 529)"/><ellipse cx="772" cy="553" rx="38" ry="17" transform="rotate(-42 772 553)"/><ellipse cx="765" cy="925" rx="17" ry="8" transform="rotate(-5 765 925)"/><ellipse cx="767" cy="912" rx="9" ry="9" transform="rotate(37 767 912)"/><ellipse cx="1203" cy="1072" rx="17" ry="23" transform="rotate(29 1203 1072)"/><ellipse cx="1206" cy="1073" rx="22" ry="12" transform="rotate(-54 1206 1073)"/><ellipse cx="809" cy="360" rx="24" ry="9" transform="rotate(12 809 360)"/><ellipse cx="814" cy="366" rx="27" ry="8" transform="rotate(45 814 366)"/><ellipse cx="807" cy="342" rx="30" ry="17" transform="rotate(47 807 342)"/><ellipse cx="1078" cy="1528" rx="20" ry="6" transform="rotate(-28 1078 1528)"/><ellipse cx="1236" cy="1345" rx="17" ry="14" transform="rotate(55 1236 1345)"/><ellipse cx="1218" cy="1351" rx="18" ry="13" transform="rotate(-54 1218 1351)"/><ellipse cx="1214" cy="1363" rx="10" ry="14" transform="rotate(22 1214 1363)"/><ellipse cx="656" cy="833" rx="17" ry="11" transform="rotate(-52 656 833)"/><ellipse cx="662" cy="825" rx="27" ry="14" transform="rotate(-32 662 825)"/><ellipse cx="672" cy="834" rx="27" ry="12" transform="rotate(-59 672 834)"/><ellipse cx="929" cy="1086" rx="8" ry="11" transform="rotate(38 929 1086)"/><ellipse cx="526" cy="786" rx="40" ry="20" transform="rotate(-56 526 786)"/><ellipse cx="534" cy="791" rx="32" ry="21" transform="rotate(-53 534 791)"/><ellipse cx="525" cy="773" rx="21" ry="17" transform="rotate(-24 525 773)"/><ellipse cx="654" cy="373" rx="15" ry="7" transform="rotate(-38 654 373)"/><ellipse cx="643" cy="386" rx="15" ry="11" transform="rotate(-18 643 386)"/><ellipse cx="658" cy="381" rx="17" ry="8" transform="rotate(7 658 381)"/><ellipse cx="812" cy="1097" rx="9" ry="11" transform="rotate(-8 812 1097)"/><ellipse cx="812" cy="1098" rx="15" ry="10" transform="rotate(-34 812 1098)"/><ellipse cx="1063" cy="1504" rx="30" ry="18" transform="rotate(-0 1063 1504)"/><ellipse cx="1186" cy="1178" rx="27" ry="16" transform="rotate(-35 1186 1178)"/><ellipse cx="1183" cy="1183" rx="27" ry="10" transform="rotate(-23 1183 1183)"/><ellipse cx="1104" cy="1018" rx="33" ry="12" transform="rotate(31 1104 1018)"/><ellipse cx="764" cy="805" rx="34" ry="20" transform="rotate(-19 764 805)"/><ellipse cx="790" cy="816" rx="29" ry="16" transform="rotate(-20 790 816)"/><ellipse cx="757" cy="820" rx="30" ry="11" transform="rotate(51 757 820)"/><ellipse cx="758" cy="1137" rx="13" ry="11" transform="rotate(-50 758 1137)"/><ellipse cx="753" cy="1138" rx="22" ry="17" transform="rotate(54 753 1138)"/><ellipse cx="762" cy="1139" rx="15" ry="11" transform="rotate(-24 762 1139)"/><ellipse cx="877" cy="681" rx="11" ry="11" transform="rotate(-1 877 681)"/><ellipse cx="877" cy="674" rx="26" ry="13" transform="rotate(-5 877 674)"/><ellipse cx="899" cy="666" rx="23" ry="9" transform="rotate(-42 899 666)"/><ellipse cx="1245" cy="1374" rx="11" ry="10" transform="rotate(54 1245 1374)"/><ellipse cx="1247" cy="1363" rx="14" ry="9" transform="rotate(13 1247 1363)"/><ellipse cx="905" cy="1345" rx="9" ry="4" transform="rotate(43 905 1345)"/><ellipse cx="901" cy="1341" rx="10" ry="6" transform="rotate(-28 901 1341)"/><ellipse cx="842" cy="481" rx="33" ry="14" transform="rotate(2 842 481)"/><ellipse cx="863" cy="501" rx="19" ry="19" transform="rotate(-54 863 501)"/><ellipse cx="868" cy="789" rx="16" ry="9" transform="rotate(-42 868 789)"/><ellipse cx="872" cy="790" rx="17" ry="9" transform="rotate(-21 872 790)"/><ellipse cx="869" cy="795" rx="11" ry="6" transform="rotate(-56 869 795)"/><ellipse cx="865" cy="431" rx="31" ry="11" transform="rotate(20 865 431)"/><ellipse cx="857" cy="428" rx="31" ry="19" transform="rotate(-7 857 428)"/><ellipse cx="846" cy="405" rx="29" ry="17" transform="rotate(-16 846 405)"/><ellipse cx="1421" cy="1269" rx="31" ry="16" transform="rotate(-45 1421 1269)"/><ellipse cx="880" cy="661" rx="36" ry="18" transform="rotate(-52 880 661)"/><ellipse cx="885" cy="641" rx="20" ry="21" transform="rotate(-39 885 641)"/><ellipse cx="1328" cy="1221" rx="23" ry="19" transform="rotate(48 1328 1221)"/><ellipse cx="1329" cy="1239" rx="20" ry="22" transform="rotate(3 1329 1239)"/><ellipse cx="789" cy="499" rx="15" ry="6" transform="rotate(-29 789 499)"/><ellipse cx="794" cy="502" rx="16" ry="8" transform="rotate(-30 794 502)"/><ellipse cx="1001" cy="902" rx="24" ry="16" transform="rotate(-44 1001 902)"/><ellipse cx="822" cy="608" rx="16" ry="11" transform="rotate(6 822 608)"/><ellipse cx="822" cy="627" rx="12" ry="9" transform="rotate(52 822 627)"/><ellipse cx="835" cy="630" rx="22" ry="11" transform="rotate(35 835 630)"/><ellipse cx="630" cy="973" rx="20" ry="10" transform="rotate(31 630 973)"/><ellipse cx="626" cy="955" rx="20" ry="10" transform="rotate(40 626 955)"/><ellipse cx="618" cy="971" rx="20" ry="12" transform="rotate(2 618 971)"/><ellipse cx="821" cy="1295" rx="11" ry="15" transform="rotate(-32 821 1295)"/><ellipse cx="802" cy="1287" rx="24" ry="16" transform="rotate(-56 802 1287)"/><ellipse cx="806" cy="1274" rx="22" ry="8" transform="rotate(12 806 1274)"/><ellipse cx="613" cy="601" rx="21" ry="12" transform="rotate(26 613 601)"/><ellipse cx="609" cy="605" rx="14" ry="6" transform="rotate(-4 609 605)"/><ellipse cx="613" cy="598" rx="22" ry="14" transform="rotate(42 613 598)"/><ellipse cx="1127" cy="1585" rx="10" ry="7" transform="rotate(46 1127 1585)"/><ellipse cx="1119" cy="1589" rx="11" ry="3" transform="rotate(35 1119 1589)"/><ellipse cx="896" cy="670" rx="20" ry="10" transform="rotate(-5 896 670)"/><ellipse cx="851" cy="1410" rx="16" ry="20" transform="rotate(39 851 1410)"/><ellipse cx="1067" cy="1584" rx="20" ry="17" transform="rotate(58 1067 1584)"/><ellipse cx="1075" cy="1569" rx="31" ry="10" transform="rotate(-33 1075 1569)"/><ellipse cx="838" cy="672" rx="31" ry="12" transform="rotate(53 838 672)"/><ellipse cx="844" cy="670" rx="28" ry="10" transform="rotate(-19 844 670)"/><ellipse cx="792" cy="1080" rx="30" ry="11" transform="rotate(52 792 1080)"/><ellipse cx="788" cy="1108" rx="36" ry="22" transform="rotate(29 788 1108)"/><ellipse cx="813" cy="1074" rx="30" ry="9" transform="rotate(25 813 1074)"/><ellipse cx="1287" cy="1261" rx="30" ry="11" transform="rotate(-56 1287 1261)"/><ellipse cx="1269" cy="1157" rx="15" ry="7" transform="rotate(47 1269 1157)"/><ellipse cx="1252" cy="1155" rx="9" ry="8" transform="rotate(34 1252 1155)"/><ellipse cx="709" cy="1363" rx="35" ry="21" transform="rotate(2 709 1363)"/><ellipse cx="718" cy="1394" rx="18" ry="14" transform="rotate(-60 718 1394)"/><ellipse cx="621" cy="1000" rx="14" ry="4" transform="rotate(23 621 1000)"/><ellipse cx="613" cy="993" rx="7" ry="8" transform="rotate(4 613 993)"/><ellipse cx="971" cy="1397" rx="12" ry="9" transform="rotate(22 971 1397)"/><ellipse cx="980" cy="1384" rx="9" ry="6" transform="rotate(-42 980 1384)"/><ellipse cx="1016" cy="1117" rx="13" ry="15" transform="rotate(-6 1016 1117)"/><ellipse cx="1021" cy="1103" rx="13" ry="11" transform="rotate(-37 1021 1103)"/><ellipse cx="651" cy="954" rx="27" ry="21" transform="rotate(30 651 954)"/><ellipse cx="634" cy="950" rx="19" ry="12" transform="rotate(-42 634 950)"/><ellipse cx="893" cy="946" rx="14" ry="6" transform="rotate(56 893 946)"/><ellipse cx="1211" cy="1506" rx="14" ry="7" transform="rotate(34 1211 1506)"/><ellipse cx="1211" cy="1509" rx="15" ry="8" transform="rotate(25 1211 1509)"/><ellipse cx="674" cy="706" rx="12" ry="15" transform="rotate(-7 674 706)"/><ellipse cx="693" cy="705" rx="15" ry="9" transform="rotate(14 693 705)"/><ellipse cx="693" cy="1078" rx="19" ry="10" transform="rotate(36 693 1078)"/><ellipse cx="685" cy="1074" rx="12" ry="8" transform="rotate(-12 685 1074)"/><ellipse cx="730" cy="864" rx="18" ry="12" transform="rotate(11 730 864)"/><ellipse cx="721" cy="870" rx="10" ry="6" transform="rotate(-44 721 870)"/><ellipse cx="577" cy="836" rx="34" ry="19" transform="rotate(-6 577 836)"/><ellipse cx="776" cy="1310" rx="9" ry="10" transform="rotate(-9 776 1310)"/><ellipse cx="796" cy="1301" rx="19" ry="6" transform="rotate(-54 796 1301)"/><ellipse cx="778" cy="1298" rx="13" ry="12" transform="rotate(-17 778 1298)"/><ellipse cx="795" cy="949" rx="18" ry="8" transform="rotate(-12 795 949)"/><ellipse cx="779" cy="953" rx="22" ry="13" transform="rotate(-54 779 953)"/><ellipse cx="779" cy="957" rx="23" ry="16" transform="rotate(39 779 957)"/><ellipse cx="643" cy="909" rx="7" ry="5" transform="rotate(36 643 909)"/><ellipse cx="641" cy="914" rx="15" ry="7" transform="rotate(-31 641 914)"/><ellipse cx="898" cy="647" rx="24" ry="14" transform="rotate(44 898 647)"/><ellipse cx="694" cy="1312" rx="19" ry="11" transform="rotate(24 694 1312)"/><ellipse cx="549" cy="557" rx="19" ry="10" transform="rotate(-56 549 557)"/><ellipse cx="542" cy="563" rx="18" ry="6" transform="rotate(-45 542 563)"/><ellipse cx="879" cy="466" rx="15" ry="5" transform="rotate(-43 879 466)"/><ellipse cx="869" cy="464" rx="12" ry="6" transform="rotate(-17 869 464)"/><ellipse cx="884" cy="456" rx="16" ry="9" transform="rotate(40 884 456)"/><ellipse cx="830" cy="559" rx="14" ry="5" transform="rotate(-24 830 559)"/><ellipse cx="819" cy="560" rx="16" ry="8" transform="rotate(-53 819 560)"/><ellipse cx="777" cy="835" rx="8" ry="4" transform="rotate(20 777 835)"/><ellipse cx="774" cy="841" rx="13" ry="8" transform="rotate(-27 774 841)"/><ellipse cx="789" cy="354" rx="9" ry="5" transform="rotate(52 789 354)"/><ellipse cx="865" cy="1252" rx="34" ry="17" transform="rotate(6 865 1252)"/><ellipse cx="865" cy="1253" rx="27" ry="17" transform="rotate(-39 865 1253)"/><ellipse cx="1285" cy="1300" rx="35" ry="19" transform="rotate(-39 1285 1300)"/><ellipse cx="1227" cy="1415" rx="14" ry="10" transform="rotate(-18 1227 1415)"/><ellipse cx="1228" cy="1393" rx="26" ry="16" transform="rotate(-34 1228 1393)"/><ellipse cx="568" cy="598" rx="16" ry="7" transform="rotate(-45 568 598)"/><ellipse cx="578" cy="608" rx="20" ry="7" transform="rotate(9 578 608)"/><ellipse cx="924" cy="980" rx="8" ry="7" transform="rotate(-33 924 980)"/><ellipse cx="923" cy="974" rx="10" ry="5" transform="rotate(-39 923 974)"/><ellipse cx="868" cy="872" rx="23" ry="13" transform="rotate(-19 868 872)"/><ellipse cx="882" cy="866" rx="21" ry="12" transform="rotate(-5 882 866)"/><ellipse cx="822" cy="1431" rx="6" ry="3" transform="rotate(11 822 1431)"/><ellipse cx="815" cy="1429" rx="11" ry="7" transform="rotate(35 815 1429)"/><ellipse cx="814" cy="1429" rx="10" ry="3" transform="rotate(-10 814 1429)"/><ellipse cx="705" cy="488" rx="22" ry="10" transform="rotate(-24 705 488)"/><ellipse cx="720" cy="485" rx="17" ry="8" transform="rotate(-2 720 485)"/><ellipse cx="1019" cy="887" rx="20" ry="23" transform="rotate(-49 1019 887)"/><ellipse cx="1000" cy="915" rx="19" ry="12" transform="rotate(20 1000 915)"/><ellipse cx="833" cy="1440" rx="30" ry="10" transform="rotate(4 833 1440)"/><ellipse cx="819" cy="1474" rx="30" ry="15" transform="rotate(48 819 1474)"/><ellipse cx="741" cy="1330" rx="30" ry="10" transform="rotate(-51 741 1330)"/><ellipse cx="733" cy="1312" rx="17" ry="11" transform="rotate(24 733 1312)"/><ellipse cx="943" cy="1232" rx="39" ry="19" transform="rotate(-46 943 1232)"/><ellipse cx="942" cy="1253" rx="33" ry="14" transform="rotate(49 942 1253)"/><ellipse cx="765" cy="921" rx="16" ry="8" transform="rotate(9 765 921)"/><ellipse cx="762" cy="907" rx="13" ry="12" transform="rotate(-35 762 907)"/><ellipse cx="703" cy="317" rx="24" ry="10" transform="rotate(2 703 317)"/><ellipse cx="958" cy="968" rx="14" ry="7" transform="rotate(-25 958 968)"/><ellipse cx="967" cy="968" rx="10" ry="11" transform="rotate(12 967 968)"/><ellipse cx="1086" cy="1200" rx="34" ry="19" transform="rotate(-46 1086 1200)"/><ellipse cx="1060" cy="1192" rx="24" ry="16" transform="rotate(-25 1060 1192)"/><ellipse cx="1091" cy="1209" rx="24" ry="19" transform="rotate(51 1091 1209)"/><ellipse cx="1242" cy="1261" rx="10" ry="10" transform="rotate(-55 1242 1261)"/><ellipse cx="821" cy="1510" rx="8" ry="11" transform="rotate(48 821 1510)"/><ellipse cx="816" cy="1507" rx="16" ry="11" transform="rotate(18 816 1507)"/><ellipse cx="819" cy="1512" rx="14" ry="5" transform="rotate(6 819 1512)"/><ellipse cx="960" cy="943" rx="17" ry="13" transform="rotate(-46 960 943)"/><ellipse cx="519" cy="1234" rx="37" ry="23" transform="rotate(-52 519 1234)"/><ellipse cx="925" cy="1379" rx="8" ry="8" transform="rotate(13 925 1379)"/><ellipse cx="923" cy="1380" rx="13" ry="10" transform="rotate(-30 923 1380)"/><ellipse cx="793" cy="1005" rx="23" ry="13" transform="rotate(-56 793 1005)"/><ellipse cx="789" cy="999" rx="29" ry="10" transform="rotate(51 789 999)"/><ellipse cx="816" cy="1003" rx="33" ry="13" transform="rotate(38 816 1003)"/><ellipse cx="826" cy="1202" rx="18" ry="9" transform="rotate(29 826 1202)"/><ellipse cx="815" cy="1186" rx="24" ry="11" transform="rotate(-29 815 1186)"/><ellipse cx="678" cy="819" rx="19" ry="8" transform="rotate(22 678 819)"/><ellipse cx="696" cy="804" rx="35" ry="18" transform="rotate(-21 696 804)"/><ellipse cx="696" cy="824" rx="17" ry="20" transform="rotate(-8 696 824)"/><ellipse cx="842" cy="938" rx="21" ry="14" transform="rotate(-12 842 938)"/><ellipse cx="849" cy="689" rx="17" ry="19" transform="rotate(-22 849 689)"/><ellipse cx="858" cy="684" rx="35" ry="18" transform="rotate(-13 858 684)"/><ellipse cx="803" cy="1298" rx="22" ry="14" transform="rotate(-14 803 1298)"/><ellipse cx="607" cy="1116" rx="17" ry="15" transform="rotate(9 607 1116)"/><ellipse cx="694" cy="894" rx="11" ry="11" transform="rotate(-26 694 894)"/><ellipse cx="687" cy="904" rx="12" ry="11" transform="rotate(58 687 904)"/><ellipse cx="640" cy="811" rx="19" ry="17" transform="rotate(41 640 811)"/><ellipse cx="645" cy="821" rx="30" ry="10" transform="rotate(56 645 821)"/><ellipse cx="658" cy="842" rx="17" ry="12" transform="rotate(-23 658 842)"/><ellipse cx="1031" cy="1358" rx="22" ry="15" transform="rotate(-56 1031 1358)"/><ellipse cx="850" cy="1517" rx="32" ry="20" transform="rotate(-9 850 1517)"/><ellipse cx="813" cy="1522" rx="36" ry="19" transform="rotate(-34 813 1522)"/><ellipse cx="978" cy="1605" rx="11" ry="7" transform="rotate(-14 978 1605)"/><ellipse cx="630" cy="708" rx="21" ry="10" transform="rotate(7 630 708)"/><ellipse cx="1011" cy="1393" rx="13" ry="5" transform="rotate(-34 1011 1393)"/><ellipse cx="1023" cy="1401" rx="8" ry="10" transform="rotate(22 1023 1401)"/><ellipse cx="575" cy="1370" rx="18" ry="16" transform="rotate(59 575 1370)"/><ellipse cx="560" cy="1375" rx="36" ry="11" transform="rotate(40 560 1375)"/><ellipse cx="901" cy="981" rx="11" ry="6" transform="rotate(-48 901 981)"/><ellipse cx="906" cy="982" rx="21" ry="6" transform="rotate(-35 906 982)"/><ellipse cx="916" cy="975" rx="10" ry="9" transform="rotate(29 916 975)"/><ellipse cx="1100" cy="1376" rx="20" ry="16" transform="rotate(-16 1100 1376)"/><ellipse cx="1082" cy="1389" rx="16" ry="13" transform="rotate(-48 1082 1389)"/><ellipse cx="1101" cy="1381" rx="31" ry="9" transform="rotate(16 1101 1381)"/><ellipse cx="1254" cy="1267" rx="22" ry="9" transform="rotate(-37 1254 1267)"/><ellipse cx="1016" cy="1403" rx="19" ry="19" transform="rotate(-44 1016 1403)"/><ellipse cx="1013" cy="1406" rx="31" ry="20" transform="rotate(-39 1013 1406)"/><ellipse cx="1433" cy="1288" rx="18" ry="13" transform="rotate(40 1433 1288)"/><ellipse cx="800" cy="1387" rx="24" ry="15" transform="rotate(26 800 1387)"/><ellipse cx="648" cy="1051" rx="11" ry="5" transform="rotate(-39 648 1051)"/><ellipse cx="653" cy="1042" rx="10" ry="5" transform="rotate(25 653 1042)"/><ellipse cx="1242" cy="1539" rx="16" ry="11" transform="rotate(45 1242 1539)"/><ellipse cx="1231" cy="1556" rx="23" ry="13" transform="rotate(23 1231 1556)"/><ellipse cx="864" cy="1485" rx="20" ry="11" transform="rotate(-3 864 1485)"/><ellipse cx="853" cy="1486" rx="15" ry="9" transform="rotate(-12 853 1486)"/><ellipse cx="863" cy="1485" rx="18" ry="8" transform="rotate(-39 863 1485)"/><ellipse cx="864" cy="816" rx="10" ry="7" transform="rotate(-25 864 816)"/><ellipse cx="584" cy="1107" rx="19" ry="8" transform="rotate(-19 584 1107)"/><ellipse cx="982" cy="1108" rx="25" ry="13" transform="rotate(21 982 1108)"/><ellipse cx="991" cy="1118" rx="16" ry="15" transform="rotate(49 991 1118)"/><ellipse cx="707" cy="1335" rx="14" ry="12" transform="rotate(-12 707 1335)"/><ellipse cx="696" cy="1323" rx="16" ry="10" transform="rotate(15 696 1323)"/><ellipse cx="751" cy="236" rx="22" ry="22" transform="rotate(35 751 236)"/><ellipse cx="749" cy="237" rx="37" ry="21" transform="rotate(-17 749 237)"/><ellipse cx="776" cy="242" rx="23" ry="21" transform="rotate(-7 776 242)"/><ellipse cx="775" cy="1131" rx="19" ry="12" transform="rotate(40 775 1131)"/><ellipse cx="774" cy="1122" rx="20" ry="14" transform="rotate(-4 774 1122)"/><ellipse cx="734" cy="1192" rx="10" ry="6" transform="rotate(-37 734 1192)"/><ellipse cx="801" cy="1273" rx="10" ry="8" transform="rotate(-11 801 1273)"/><ellipse cx="798" cy="1274" rx="12" ry="5" transform="rotate(-25 798 1274)"/><ellipse cx="1147" cy="1164" rx="20" ry="7" transform="rotate(57 1147 1164)"/><ellipse cx="1144" cy="1182" rx="20" ry="8" transform="rotate(28 1144 1182)"/><ellipse cx="742" cy="396" rx="34" ry="13" transform="rotate(-12 742 396)"/><ellipse cx="744" cy="403" rx="14" ry="7" transform="rotate(-52 744 403)"/><ellipse cx="741" cy="409" rx="12" ry="8" transform="rotate(52 741 409)"/><ellipse cx="805" cy="846" rx="27" ry="12" transform="rotate(-6 805 846)"/><ellipse cx="806" cy="824" rx="25" ry="11" transform="rotate(8 806 824)"/><ellipse cx="565" cy="560" rx="31" ry="13" transform="rotate(-30 565 560)"/><ellipse cx="572" cy="577" rx="17" ry="11" transform="rotate(26 572 577)"/><ellipse cx="561" cy="575" rx="29" ry="12" transform="rotate(-40 561 575)"/><ellipse cx="1061" cy="1167" rx="27" ry="18" transform="rotate(-18 1061 1167)"/><ellipse cx="1072" cy="1166" rx="22" ry="14" transform="rotate(-23 1072 1166)"/><ellipse cx="1072" cy="1177" rx="14" ry="9" transform="rotate(-10 1072 1177)"/><ellipse cx="938" cy="1289" rx="25" ry="11" transform="rotate(-2 938 1289)"/><ellipse cx="933" cy="1299" rx="36" ry="16" transform="rotate(53 933 1299)"/><ellipse cx="919" cy="1268" rx="25" ry="16" transform="rotate(33 919 1268)"/><ellipse cx="1051" cy="981" rx="26" ry="22" transform="rotate(-58 1051 981)"/><ellipse cx="1058" cy="984" rx="28" ry="20" transform="rotate(-54 1058 984)"/><ellipse cx="721" cy="1490" rx="24" ry="23" transform="rotate(48 721 1490)"/><ellipse cx="703" cy="1484" rx="37" ry="12" transform="rotate(-13 703 1484)"/><ellipse cx="723" cy="1476" rx="37" ry="15" transform="rotate(-6 723 1476)"/><ellipse cx="870" cy="658" rx="29" ry="21" transform="rotate(-38 870 658)"/><ellipse cx="864" cy="633" rx="23" ry="9" transform="rotate(-3 864 633)"/><ellipse cx="745" cy="847" rx="9" ry="7" transform="rotate(-40 745 847)"/><ellipse cx="743" cy="845" rx="10" ry="8" transform="rotate(-20 743 845)"/><ellipse cx="740" cy="844" rx="12" ry="4" transform="rotate(2 740 844)"/><ellipse cx="842" cy="449" rx="15" ry="12" transform="rotate(8 842 449)"/><ellipse cx="830" cy="443" rx="17" ry="10" transform="rotate(13 830 443)"/><ellipse cx="772" cy="595" rx="30" ry="13" transform="rotate(30 772 595)"/><ellipse cx="758" cy="600" rx="17" ry="24" transform="rotate(-46 758 600)"/><ellipse cx="941" cy="1450" rx="9" ry="6" transform="rotate(14 941 1450)"/><ellipse cx="933" cy="1460" rx="18" ry="5" transform="rotate(-26 933 1460)"/><ellipse cx="941" cy="1462" rx="17" ry="10" transform="rotate(-8 941 1462)"/><ellipse cx="834" cy="621" rx="21" ry="11" transform="rotate(-49 834 621)"/><ellipse cx="855" cy="639" rx="21" ry="13" transform="rotate(-53 855 639)"/><ellipse cx="834" cy="619" rx="17" ry="6" transform="rotate(-51 834 619)"/><ellipse cx="1055" cy="1049" rx="14" ry="12" transform="rotate(-13 1055 1049)"/><ellipse cx="1039" cy="1035" rx="21" ry="11" transform="rotate(-50 1039 1035)"/><ellipse cx="622" cy="517" rx="37" ry="9" transform="rotate(-45 622 517)"/><ellipse cx="641" cy="520" rx="18" ry="13" transform="rotate(43 641 520)"/><ellipse cx="779" cy="653" rx="19" ry="18" transform="rotate(-44 779 653)"/><ellipse cx="792" cy="646" rx="16" ry="12" transform="rotate(10 792 646)"/><ellipse cx="765" cy="642" rx="22" ry="10" transform="rotate(43 765 642)"/><ellipse cx="814" cy="366" rx="15" ry="9" transform="rotate(-26 814 366)"/><ellipse cx="805" cy="373" rx="18" ry="12" transform="rotate(22 805 373)"/><ellipse cx="810" cy="365" rx="17" ry="10" transform="rotate(53 810 365)"/><ellipse cx="575" cy="504" rx="27" ry="11" transform="rotate(-12 575 504)"/><ellipse cx="588" cy="506" rx="22" ry="12" transform="rotate(45 588 506)"/><ellipse cx="835" cy="912" rx="10" ry="8" transform="rotate(-19 835 912)"/><ellipse cx="839" cy="912" rx="9" ry="6" transform="rotate(-9 839 912)"/><ellipse cx="840" cy="911" rx="12" ry="9" transform="rotate(-5 840 911)"/><ellipse cx="601" cy="1004" rx="28" ry="19" transform="rotate(-33 601 1004)"/><ellipse cx="609" cy="1015" rx="23" ry="12" transform="rotate(-4 609 1015)"/><ellipse cx="593" cy="985" rx="19" ry="8" transform="rotate(-12 593 985)"/><ellipse cx="1025" cy="1350" rx="6" ry="7" transform="rotate(-49 1025 1350)"/><ellipse cx="1027" cy="1343" rx="6" ry="7" transform="rotate(35 1027 1343)"/><ellipse cx="849" cy="476" rx="20" ry="8" transform="rotate(6 849 476)"/><ellipse cx="839" cy="464" rx="14" ry="12" transform="rotate(-53 839 464)"/><ellipse cx="597" cy="1157" rx="31" ry="16" transform="rotate(-39 597 1157)"/><ellipse cx="621" cy="1165" rx="24" ry="20" transform="rotate(11 621 1165)"/><ellipse cx="979" cy="1121" rx="24" ry="12" transform="rotate(-33 979 1121)"/><ellipse cx="963" cy="1130" rx="13" ry="8" transform="rotate(-16 963 1130)"/><ellipse cx="960" cy="1130" rx="23" ry="10" transform="rotate(-45 960 1130)"/><ellipse cx="644" cy="564" rx="33" ry="13" transform="rotate(-9 644 564)"/><ellipse cx="667" cy="544" rx="22" ry="17" transform="rotate(54 667 544)"/><ellipse cx="1132" cy="1327" rx="14" ry="9" transform="rotate(1 1132 1327)"/><ellipse cx="1128" cy="1343" rx="20" ry="6" transform="rotate(-40 1128 1343)"/><ellipse cx="852" cy="1525" rx="20" ry="13" transform="rotate(-35 852 1525)"/><ellipse cx="848" cy="1503" rx="38" ry="16" transform="rotate(-37 848 1503)"/><ellipse cx="1365" cy="1264" rx="23" ry="21" transform="rotate(-41 1365 1264)"/><ellipse cx="1361" cy="1266" rx="18" ry="11" transform="rotate(17 1361 1266)"/><polygon points="382.0,205.0 404.0,215.0 397.5,233.0 413.0,242.6 434.8,230.0 441.0,214.6 465.8,208.4 484.0,205.0 584.0,205.0 574.5,227.0 559.0,239.5 528.0,245.7 509.0,258.0 484.5,261.0 459.6,270.5 447.0,289.0 428.6,295.0 403.7,289.0 388.0,273.6 372.7,267.4 366.5,252.0 375.8,233.0"/><polygon points="590.0,242.6 621.0,252.0 608.7,276.7 590.0,298.5 575.0,310.0 570.0,280.0 580.0,255.0"/><polygon points="677.0,242.6 702.0,248.8 695.7,273.6 677.0,267.4"/><polygon points="723.6,267.4 751.6,273.6 745.0,298.5 723.6,289.0"/><polygon points="95.0,204.0 230.0,204.0 200.0,218.0 130.0,226.0 95.0,222.0"/><polygon points="600.0,204.0 680.0,204.0 660.0,225.0 620.0,230.0"/><polygon points="720.0,204.0 775.0,204.0 775.0,260.0 750.0,240.0"/></g></g><g filter="url(#bl2)"><rect x="-40" y="1175" width="600" height="460" fill="#f2f0e9"/><ellipse cx="640" cy="1500" rx="110" ry="120" fill="#f3efe7"/></g><g filter="url(#bl)" fill="none" stroke="#dcdbd3" stroke-width="9" stroke-linecap="round" opacity="0.8"><polyline points="0,1200 30,1230 60,1225 95,1215 80,1250 75,1275"/><polyline points="0,1290 40,1285 70,1300 60,1330"/><polyline points="130,1330 160,1340 200,1335 230,1350"/><polyline points="0,1400 25,1395 20,1420 5,1435"/><polyline points="80,1440 120,1430 150,1420"/><polyline points="190,1500 220,1520 240,1560 255,1600"/><polyline points="260,1480 300,1500 330,1490"/></g><g filter="url(#bl)" fill="none" stroke="#fbfaf6" stroke-width="10" stroke-linecap="round" opacity="0.9"><polyline points="150,1330 175,1345 205,1348"/><polyline points="225,1430 250,1445 240,1465"/><polyline points="180,1510 200,1540"/><polyline points="150,1225 175,1240 200,1235"/></g><g filter="url(#bl)" fill="none" stroke="#cff0de" stroke-linecap="round" stroke-linejoin="round"><polyline points="296.0,1380.0 360.0,1392.0 415.0,1405.0 454.0,1412.0 520.0,1416.0 590.0,1420.0 640.0,1440.0 688.0,1451.0 705.0,1500.0 725.0,1545.0 750.0,1590.0 765.0,1608.0" stroke-width="11"/><polyline points="230.0,1395.0 270.0,1380.0 296.0,1380.0" stroke-width="6"/><polyline points="262.0,1322.0 285.0,1340.0 296.0,1375.0" stroke-width="7"/></g><g fill="none" stroke="#a9dbe4" stroke-width="3" stroke-linecap="round" stroke-linejoin="round"><polyline points="296.0,1380.0 270.0,1376.0 250.0,1378.0 232.0,1392.0 215.0,1405.0 200.0,1420.0"/><polyline points="292.0,1372.0 284.0,1345.0 270.0,1322.0 262.0,1318.0"/><polyline points="300.0,1384.0 340.0,1394.0 385.0,1404.0 430.0,1408.0 470.0,1416.0" stroke-width="2.5"/></g><g filter="url(#bl)"><polygon points="0,204 90,204 70,216 30,222 22,260 24,300 0,300" fill="#a4aaa0"/><polygon points="0,222 14,224 20,250 12,290 0,295" fill="#6f766e"/></g><polygon points="2847.0,204.0 2847.0,1608.0 1232.6,1608.0 1234.7,1596.4 1255.9,1573.1 1270.7,1549.8 1272.8,1522.3 1270.7,1511.7 1285.5,1496.9 1285.5,1484.2 1268.6,1473.6 1249.5,1467.3 1238.9,1456.7 1236.8,1446.1 1249.5,1448.2 1260.1,1452.4 1245.3,1437.6 1234.7,1427.0 1230.5,1414.3 1234.7,1401.6 1245.3,1393.2 1238.9,1384.7 1234.7,1372.0 1236.8,1359.3 1213.5,1352.9 1198.7,1350.8 1194.5,1341.3 1205.0,1337.1 1234.7,1338.1 1245.3,1345.5 1264.3,1350.8 1272.8,1361.4 1285.5,1374.1 1306.7,1382.6 1330.0,1386.8 1351.1,1388.9 1372.3,1388.9 1404.1,1390.0 1445.5,1394.0 1487.0,1385.7 1556.0,1371.8 1603.0,1360.8 1652.8,1352.5 1708.0,1338.7 1763.0,1322.0 1812.0,1308.0 1835.0,1299.7 1890.6,1277.6 1934.8,1258.0 1973.5,1239.0 1998.0,1219.6 2012.0,1203.0 2017.7,1181.0 2026.0,1147.7 2042.6,1120.0 2067.4,1095.0 2092.0,1064.8 2109.0,1031.6 2128.0,1004.0 2133.8,994.5 2147.6,972.4 2160.0,944.7 2160.0,917.0 2157.0,878.4 2153.0,845.0 2144.8,832.8 2142.0,838.3 2128.0,839.7 2106.0,831.4 2081.3,814.8 2062.0,790.0 2049.5,762.3 2045.3,734.7 2053.6,712.6 2067.4,684.9 2084.0,657.3 2073.0,629.6 2061.0,614.0 2046.0,596.0 2031.0,581.0 2015.8,565.8 1991.6,553.7 1973.5,544.7 1961.0,532.6 1949.0,517.5 1925.0,503.0 1901.0,490.0 1891.9,481.2 1879.8,463.0 1870.7,441.9 1861.6,432.8 1872.0,424.0 1886.0,420.0 1895.0,408.0 1901.0,409.0 1922.0,406.0 1937.0,418.0 1949.0,430.0 1958.0,445.0 1967.0,460.0 1992.0,458.0 2022.0,457.0 2052.0,455.0 2082.0,460.0 2100.0,472.0 2122.0,487.0 2143.0,502.0 2162.6,512.0 2204.0,535.0 2229.0,546.0 2241.0,550.0 2268.0,538.0 2300.8,524.8 2342.0,523.0 2378.0,529.0 2400.0,542.7 2425.0,548.0 2444.6,555.0 2466.7,547.0 2505.0,529.0 2538.5,509.6 2566.0,493.0 2588.0,473.6 2621.5,454.0 2638.0,426.6 2660.0,393.5 2676.7,354.8 2687.8,321.6 2710.0,283.0 2743.0,249.8 2770.7,222.0 2784.5,204.0" fill="#92d3e8"/><polygon points="1268.6,1393.2 1285.5,1391.0 1298.2,1399.5 1296.1,1408.0 1281.3,1403.7 1270.7,1399.5" fill="#f5eee4"/><polygon points="1268.6,1410.1 1281.3,1405.9 1302.4,1414.3 1313.0,1427.0 1310.9,1439.7 1298.2,1435.5 1281.3,1427.0 1270.7,1418.6" fill="#f5eee4"/><polygon points="1260.1,1456.7 1268.6,1452.4 1281.3,1463.0 1285.5,1471.5 1277.0,1471.5 1264.3,1465.1" fill="#f5eee4"/><polygon points="1251.6,1372.0 1262.2,1370.9 1265.4,1378.3 1255.9,1384.7 1249.5,1380.5" fill="#f5eee4"/><polygon points="1876.7,204.0 1870.0,233.0 1857.0,257.7 1855.3,282.5 1853.6,307.2 1866.8,332.0 1873.4,356.7 1883.3,373.2 1886.6,389.7 1889.9,409.5 1914.6,411.0 1906.4,389.7 1899.8,373.2 1883.3,356.7 1873.4,332.0 1870.1,307.2 1865.2,282.5 1873.4,257.7 1883.3,233.0 1885.8,204.0" fill="#92d3e8"/><polyline points="1879.2,204.0 1876.7,224.7 1870.1,249.5 1863.5,289.0 1870.1,315.5 1873.4,340.2 1883.3,365.0 1893.2,398.0 1902.3,409.5" fill="none" stroke="#1f2a2e" stroke-width="2.2" stroke-linejoin="round"/><polygon points="2667,204 2690,204 2690,250 2684,283 2672,280 2666,240" fill="#92d3e8"/><ellipse cx="2556" cy="362" rx="6.5" ry="7.5" transform="rotate(0 2556 362)" fill="#92d3e8"/><ellipse cx="2654" cy="378" rx="15" ry="16" transform="rotate(15 2654 378)" fill="#92d3e8"/><ellipse cx="2610" cy="432" rx="6" ry="9" transform="rotate(0 2610 432)" fill="#92d3e8"/><polygon points="146.2,1289.3 153.9,1277.0 172.4,1273.9 184.7,1278.5 190.9,1292.4 209.4,1295.5 224.8,1304.7 229.4,1318.6 212.4,1319.5 197.0,1307.8 181.7,1307.2 172.4,1317.0 160.1,1318.6 153.9,1304.7" fill="#92d3e8"/><polygon points="167.8,1450.9 177.0,1455.6 192.4,1457.1 190.9,1471.0 184.7,1486.4 172.4,1488.8 168.7,1477.1 153.9,1480.2 150.9,1495.6 135.5,1507.9 117.0,1514.1 101.6,1518.7 92.4,1527.9 86.2,1534.1 89.3,1520.2 98.5,1511.0 101.6,1492.5 117.0,1483.3 135.5,1474.0 147.8,1464.8" fill="#92d3e8"/><rect x="152.4" y="1210.8" width="16" height="10.5" fill="#92d3e8"/><ellipse cx="303" cy="1327" rx="9" ry="15" transform="rotate(-20 303 1327)" fill="#92d3e8"/><ellipse cx="618" cy="1226" rx="15" ry="13" transform="rotate(0 618 1226)" fill="#92d3e8"/><ellipse cx="632" cy="1194" rx="7" ry="7" transform="rotate(0 632 1194)" fill="#92d3e8"/><ellipse cx="662" cy="1200" rx="7" ry="7" transform="rotate(0 662 1200)" fill="#92d3e8"/><polygon points="358.7,1243.1 366.4,1229.3 384.9,1235.4 409.5,1232.4 431.0,1223.1 432.6,1215.4 440.3,1212.3 443.3,1217.0 435.7,1226.2 412.6,1237.0 384.9,1240.7" fill="#92d3e8"/><ellipse cx="1256" cy="509" rx="6.5" ry="20" transform="rotate(14 1256 509)" fill="#a5d6ea"/><ellipse cx="1237" cy="340" rx="4" ry="5" transform="rotate(0 1237 340)" fill="#92d3e8"/><ellipse cx="1372" cy="358" rx="6" ry="8" transform="rotate(0 1372 358)" fill="#92d3e8"/><ellipse cx="1322" cy="280" rx="4" ry="5" transform="rotate(0 1322 280)" fill="#92d3e8"/><polygon points="517,283 523,276 531,276 534,284 529,292 521,292" fill="#8cc4e4"/><polygon points="529,276 534,276 537,284 532,292 529,292 534,284" fill="#fff"/><g filter="url(#bl)"><ellipse cx="1862" cy="524" rx="52" ry="26" transform="rotate(18 1862 524)" fill="#f1f5f3"/><ellipse cx="1900" cy="520" rx="26" ry="20" fill="#eef4f1"/><ellipse cx="1947" cy="545" rx="20" ry="10" transform="rotate(35 1947 545)" fill="#eef3f1"/><ellipse cx="2240" cy="537" rx="12" ry="7" fill="#eef3f1"/><ellipse cx="2012" cy="1190" rx="7" ry="14" fill="#eef3f1"/></g><g opacity="0.9"><polyline points="775.0,204.0 776.0,569.0" fill="none" stroke="#61776e" stroke-width="1.5" stroke-dasharray="3.2 3.2"/><polyline points="776.0,569.0 1060.0,569.0" fill="none" stroke="#61776e" stroke-width="1.5" stroke-dasharray="3.2 3.2"/><polyline points="1060.0,446.0 1060.0,1608.0" fill="none" stroke="#61776e" stroke-width="1.5" stroke-dasharray="3.2 3.2"/><polyline points="1060.0,446.0 1333.0,444.6 1463.0,310.6 1471.4,285.7 1482.5,280.0 1504.6,291.0 1535.0,296.7 1551.6,269.0 1562.6,247.0 1573.7,238.7" fill="none" stroke="#61776e" stroke-width="1.5" stroke-dasharray="3.2 3.2"/><polyline points="1292.0,205.0 1149.0,446.0" fill="none" stroke="#61776e" stroke-width="1.5" stroke-dasharray="3.2 3.2"/><polyline points="531.0,770.0 777.0,770.0 777.0,569.0" fill="none" stroke="#61776e" stroke-width="1.5" stroke-dasharray="3.2 3.2"/><polyline points="530.0,1297.0 585.0,1335.7 640.6,1335.7 684.8,1355.0 701.4,1344.0 734.5,1359.0 778.8,1348.0 847.9,1356.4 917.0,1371.6 944.6,1388.0 972.0,1410.5 999.9,1427.0 1022.0,1446.5 1044.0,1457.5 1060.0,1460.3" fill="none" stroke="#61776e" stroke-width="1.5" stroke-dasharray="3.2 3.2"/><polyline points="262.6,1162.0 262.6,1322.0 285.0,1340.0 295.0,1372.0 270.0,1378.0 230.0,1395.0 205.0,1410.0" fill="none" stroke="#61776e" stroke-width="1.5" stroke-dasharray="3.2 3.2"/><polyline points="320.6,1181.0 353.8,1208.5 367.6,1227.9 431.2,1225.0 442.2,1252.8 469.9,1274.9 525.0,1294.0 536.0,1319.0 552.8,1333.0 580.4,1338.4" fill="none" stroke="#61776e" stroke-width="1.5" stroke-dasharray="3.2 3.2"/><polyline points="205.0,1410.0 175.0,1455.0 140.0,1500.0 95.0,1530.0 60.0,1560.0 0.0,1585.0" fill="none" stroke="#61776e" stroke-width="1.5" stroke-dasharray="3.2 3.2"/><polyline points="1612.0,263.6 1695.0,299.5 1739.5,321.6 1794.8,354.8 1850.0,371.4 1877.7,365.8" fill="none" stroke="#61776e" stroke-width="1.5" stroke-dasharray="3.2 3.2"/><polyline points="549.0,602.0 538.0,685.0 530.0,740.0" fill="none" stroke="#61776e" stroke-width="1.5" stroke-dasharray="3.2 3.2"/><polyline points="440.0,204.0 455.0,250.0 470.0,295.0" fill="none" stroke="#61776e" stroke-width="1.5" stroke-dasharray="3.2 3.2"/><polyline points="1901.6,335.4 1923.7,325.8 1956.9,343.7 2001.1,358.9 2045.3,345.1 2089.6,360.3 2136.6,365.8 2172.5,338.2 2200.1,349.3" fill="none" stroke="#61776e" stroke-width="1.5" stroke-dasharray="3.2 3.2"/><polyline points="2078.5,208.3 2050.9,241.5 2067.5,282.9 2078.5,321.6 2089.6,360.3 2108.9,393.5 2089.6,415.6 2084.0,459.8" fill="none" stroke="#61776e" stroke-width="1.5" stroke-dasharray="3.2 3.2"/><polyline points="2175.2,252.5 2189.1,310.6 2202.9,354.8 2197.4,407.3 2205.6,454.3 2194.6,490.2 2211.2,517.9" fill="none" stroke="#61776e" stroke-width="1.5" stroke-dasharray="3.2 3.2"/><polyline points="2202.9,252.5 2249.9,266.3 2305.2,249.8 2360.4,227.6 2412.9,208.3" fill="none" stroke="#61776e" stroke-width="1.5" stroke-dasharray="3.2 3.2"/><polyline points="2412.9,208.3 2415.7,233.2 2407.4,269.1 2382.5,305.0 2379.8,338.2 2346.6,379.7 2332.8,410.1 2346.6,448.8 2357.7,493.0 2368.7,523.4" fill="none" stroke="#61776e" stroke-width="1.5" stroke-dasharray="3.2 3.2"/><polyline points="2238.8,448.8 2266.5,421.1 2299.6,426.6 2332.8,410.1" fill="none" stroke="#61776e" stroke-width="1.5" stroke-dasharray="3.2 3.2"/><polyline points="2415.7,247.0 2454.4,238.7 2492.0,255.3" fill="none" stroke="#61776e" stroke-width="1.5" stroke-dasharray="3.2 3.2"/><polyline points="2414.2,205.5 2411.4,255.3 2378.2,299.5 2383.8,321.6 2364.4,376.9 2334.0,410.1" fill="none" stroke="#61776e" stroke-width="1.5" stroke-dasharray="3.2 3.2"/><polyline points="2416.9,247.0 2461.1,238.7 2480.5,255.3 2522.0,255.3 2549.6,247.0 2577.2,263.6 2538.5,294.0 2533.0,332.7 2516.4,365.8 2519.2,443.2 2508.1,476.4 2510.9,517.9" fill="none" stroke="#61776e" stroke-width="1.5" stroke-dasharray="3.2 3.2"/><polyline points="2577.2,263.6 2604.9,255.3 2632.5,222.1" fill="none" stroke="#61776e" stroke-width="1.5" stroke-dasharray="3.2 3.2"/><polyline points="2519.2,443.2 2452.9,451.5 2411.4,476.4 2383.8,484.7 2356.1,493.0" fill="none" stroke="#61776e" stroke-width="1.5" stroke-dasharray="3.2 3.2"/><polyline points="2135.0,227.6 2168.2,241.5 2184.8,269.1 2201.3,332.7 2198.6,393.5 2204.1,448.8 2190.3,490.2 2215.2,517.9" fill="none" stroke="#61776e" stroke-width="1.5" stroke-dasharray="3.2 3.2"/></g><polyline points="2676.7,205.5 2678.1,269.1 2674.0,291.2 2674.0,309.2 2687.2,310.6 2693.3,320.2" fill="none" stroke="#1f2a2e" stroke-width="2.2"/><g fill="none" stroke="#abc1cf" stroke-width="2.3" stroke-linejoin="round" opacity="0.8"><polyline points="330.0,247.0 372.0,263.0 441.0,252.0 478.0,260.0 574.0,236.0"/><polyline points="577.0,233.2 640.0,262.0 720.7,305.9 775.0,340.0 835.4,351.5 895.7,354.0 960.0,372.0 1033.6,394.3 1059.3,396.2 1150.0,420.0 1270.5,449.6 1360.0,470.0 1407.8,480.5 1459.8,487.5 1539.1,498.0 1620.0,470.0 1704.1,459.8 1800.0,470.0 1880.0,490.0"/><polyline points="577.0,233.2 650.0,240.0 760.0,290.0 805.0,275.2 841.8,249.8 900.0,215.0 940.0,204.0"/><polyline points="940.0,204.0 990.0,215.0 1028.1,234.0 1074.5,255.6 1170.0,285.0 1293.1,320.8 1400.0,335.0 1521.7,349.5 1600.0,372.0 1698.1,412.8 1790.0,455.0 1880.0,490.0"/><polyline points="897.0,204.0 897.0,300.0 895.7,354.0 897.6,405.4 899.8,495.2 898.4,537.5 919.2,576.7 912.0,700.0 914.7,821.7 912.3,896.9 912.0,1000.0 912.0,1085.0 954.3,1128.4 1040.0,1180.0 1100.0,1230.0 1190.6,1292.8 1215.0,1325.0 1244.8,1332.1"/><polyline points="912.3,896.9 990.0,880.0 1052.4,855.7 1110.0,810.0 1167.4,765.6 1240.0,745.0 1304.7,731.9 1383.8,701.5 1470.0,665.0 1540.0,610.0 1535.0,591.9 1620.0,560.0 1664.9,526.7 1760.0,500.0 1880.0,495.0"/><polyline points="1880.0,495.0 1850.0,560.0 1820.2,611.7 1800.0,680.0 1760.0,760.0 1700.0,840.0 1671.8,890.8 1638.6,929.3 1629.5,1057.1 1610.0,1120.0 1580.0,1200.0 1570.1,1259.7 1530.0,1290.0 1483.3,1313.6 1380.0,1325.0 1244.8,1332.1 1205.0,1345.0 1190.0,1420.0 1180.0,1480.0 1174.6,1497.0 1176.8,1534.4 1176.0,1608.0"/><polyline points="1120.7,576.2 1168.5,607.5 1200.0,680.0 1167.4,765.6"/><polyline points="1304.7,731.9 1349.0,767.3 1431.3,818.4 1480.0,880.0 1562.1,953.0 1638.6,929.3 1700.0,950.0 1756.6,1042.7 1800.0,1080.0 1858.4,1111.8 1901.2,1149.1 1960.0,1180.0 2018.5,1181.7"/><polyline points="1900.0,500.0 1925.0,540.0 1934.0,580.0 1934.8,602.0 1934.8,643.5 1945.8,684.9 1956.9,734.7 1973.5,790.0 1992.8,836.9 1987.3,878.4 1976.8,911.0 1965.2,947.5 1970.7,1003.9 1985.0,1080.0 2000.0,1150.0 2018.5,1181.7"/><polyline points="1244.8,1332.1 1150.0,1350.0 1060.0,1368.0 944.0,1389.3 912.8,1395.9 800.0,1430.0 687.5,1451.2 640.0,1425.0 590.0,1415.0 453.8,1411.9 415.1,1405.0 340.0,1390.0 294.9,1379.9 230.0,1382.0 103.1,1377.7 36.8,1379.3 0.0,1368.0"/><polyline points="1293.1,320.8 1255.8,334.9 1220.0,390.0 1200.0,430.0 1190.0,520.0 1120.7,576.2"/><polyline points="1167.4,765.6 1185.0,850.0 1197.5,914.9 1215.0,960.0 1225.0,1010.0 1235.0,1100.0 1230.0,1200.0 1225.0,1290.0 1244.8,1332.1"/><polyline points="1580.6,239.5 1620.0,270.0 1690.0,315.0 1760.0,370.0 1820.0,430.0 1880.0,480.0"/><polyline points="1459.8,487.5 1412.0,523.9 1330.0,528.0 1292.3,527.0 1200.0,560.0 1120.7,576.2 1000.0,570.0 919.2,576.7 863.1,582.8 780.0,590.0 699.2,592.5 531.0,600.0"/><polyline points="1580.6,239.5 1560.0,300.0 1521.7,349.5 1480.0,420.0 1459.8,487.5"/><polyline points="1775.4,596.6 1700.0,640.0 1682.0,661.4 1600.0,720.0 1500.0,800.0 1431.3,818.4"/><polyline points="1880.0,500.0 1775.4,596.6"/><polyline points="1822.4,1296.4 1769.1,1290.1 1671.8,1288.1 1570.1,1259.7"/><polyline points="1804.5,310.6 1800.0,204.0"/><polyline points="1804.5,310.6 1790.0,380.0 1830.0,440.0"/><polyline points="1929.3,404.5 1970.7,461.2 2056.4,434.9 2106.1,448.8 2180.8,504.0 2236.1,540.0"/><polyline points="2236.1,540.0 2225.0,476.4 2236.1,393.5 2216.7,310.6 2207.6,281.0 2189.1,227.6 2194.6,205.5"/><polyline points="2148.2,357.0 2147.6,476.4"/><polyline points="2148.2,357.0 2125.5,277.4 2086.8,208.3"/><polyline points="2236.1,540.0 2277.5,490.2 2327.3,421.1 2332.8,354.8 2356.8,326.6 2412.9,269.1 2454.4,205.5"/><polyline points="2240.9,550.5 2300.8,512.3 2361.6,462.6 2439.0,426.6 2470.8,393.5 2470.8,354.8 2480.5,296.7 2522.0,227.6 2534.4,219.9"/><polyline points="2240.9,550.5 2328.5,506.8 2411.4,523.4 2466.7,520.6 2544.1,476.4 2588.3,435.5 2632.5,410.1 2665.7,376.9 2676.7,332.7 2687.2,311.1"/></g><g fill="none" stroke="#9fb9b8" stroke-width="1.1" stroke-linejoin="round" opacity="0.8"><polyline points="568.0,1021.1 640.0,1025.0 720.0,1060.0 792.0,1064.3 860.0,1055.0 860.3,1052.9"/><polyline points="792.0,1064.3 740.0,1130.0 700.0,1180.0 660.0,1205.0 542.6,1211.3 531.0,1211.0"/><polyline points="568.0,1021.1 531.0,1015.0"/><polyline points="542.6,1211.3 440.0,1213.0"/><polyline points="176.1,1254.1 150.0,1230.0 190.0,1280.0 262.0,1320.0 281.1,1354.2 294.9,1379.9"/><polyline points="304.0,1242.5 310.0,1200.0 320.0,1162.0"/><polyline points="304.0,1242.5 290.0,1300.0 281.1,1354.2"/><polyline points="948.7,1180.3 948.0,1280.0 947.0,1380.0"/><polyline points="889.3,1453.4 889.0,1608.0"/><polyline points="687.5,1451.2 680.6,1480.5 700.0,1520.0 747.0,1593.0"/><polyline points="178.8,1436.2 230.0,1400.0 300.0,1384.0"/><polyline points="178.8,1436.2 100.0,1500.0 0.0,1570.0"/><polyline points="724.9,814.8 640.0,830.0 531.0,838.0"/><polyline points="724.9,814.8 800.0,820.0 860.0,760.0 911.1,753.5 960.0,740.0 999.0,701.5"/><polyline points="999.0,701.5 1030.0,760.0 1052.4,855.7"/><polyline points="1328.8,892.8 1431.3,818.4"/><polyline points="1328.8,892.8 1280.0,950.0 1232.0,1010.0"/><polyline points="1162.9,1011.7 1260.0,1080.0 1221.3,1098.0"/><polyline points="1299.2,1069.2 1221.3,1098.0"/><polyline points="1299.2,1069.2 1400.0,1030.0 1440.0,980.0 1562.1,953.0"/><polyline points="1394.6,1178.1 1340.0,1240.0 1290.0,1290.0 1244.8,1332.1"/><polyline points="1394.6,1178.1 1450.0,1140.0 1520.0,1100.0 1630.0,1090.0"/><polyline points="1756.6,1042.7 1700.0,1120.0 1640.0,1200.0 1570.1,1259.7"/><polyline points="1756.6,1042.7 1800.0,1200.0 1822.4,1296.4"/><polyline points="1822.4,1296.4 1900.0,1260.0 1969.6,1237.0 2018.5,1181.7"/><polyline points="2018.5,1181.7 2060.0,1090.0 2112.5,1028.3 2130.5,998.6 2155.0,900.0 2140.0,850.0"/><polyline points="1539.1,498.0 1560.0,560.0 1535.0,591.9"/><polyline points="1521.7,349.5 1560.0,420.0 1539.1,498.0"/><polyline points="1562.1,953.0 1540.0,1050.0 1560.0,1150.0 1570.1,1259.7"/></g><g fill="none" stroke="#a9c3c4" stroke-width="1" stroke-linejoin="round" opacity="0.8"><polyline points="2316.3,403.3 2342.2,409.9 2364.3,413.1"/><polyline points="2316.3,403.3 2291.1,431.8 2273.4,447.9"/><polyline points="2316.3,403.3 2285.9,402.6 2250.9,406.5"/><polyline points="2364.3,413.1 2355.4,439.6 2342.1,464.1"/><polyline points="2364.3,413.1 2368.0,383.6 2370.7,357.1"/><polyline points="2084.7,386.2 2094.7,407.1 2090.6,424.0"/><polyline points="2084.7,386.2 2098.8,369.0 2107.3,344.4"/><polyline points="2084.7,386.2 2116.7,395.5 2135.2,418.1"/><polyline points="2469.8,486.3 2464.8,512.3 2456.5,531.7"/><polyline points="2469.8,486.3 2442.5,498.0 2422.0,512.5"/><polyline points="2469.8,486.3 2474.0,450.5 2490.6,423.1"/><polyline points="2006.4,312.0 2014.4,327.3 2025.8,353.8"/><polyline points="2006.4,312.0 2023.0,290.1 2046.5,256.9"/><polyline points="2006.4,312.0 1971.0,321.4 1934.2,330.6"/><polyline points="2524.8,218.9 2527.5,247.9 2517.1,275.0"/><polyline points="2524.8,218.9 2493.6,218.3 2448.5,213.9"/><polyline points="2524.8,218.9 2526.4,262.9 2519.3,318.7"/><polyline points="2490.6,423.1 2479.8,405.1 2466.3,379.8"/><polyline points="2490.6,423.1 2503.5,408.1 2529.1,381.0"/><polyline points="2490.6,423.1 2455.1,421.6 2429.0,420.8"/><polyline points="2061.2,209.3 2049.3,233.1 2046.5,256.9"/><polyline points="2061.2,209.3 2038.4,211.2 2012.4,225.3"/><polyline points="2061.2,209.3 2081.6,248.6 2089.5,290.1"/><polyline points="2382.0,225.2 2401.4,239.4 2419.9,250.8"/><polyline points="2382.0,225.2 2357.1,243.4 2336.0,267.6"/><polyline points="2382.0,225.2 2352.4,219.9 2318.4,212.8"/><polyline points="2089.5,290.1 2065.0,276.6 2046.5,256.9"/><polyline points="2089.5,290.1 2112.3,274.0 2140.8,271.6"/><polyline points="2089.5,290.1 2094.8,310.8 2107.3,344.4"/><polyline points="1951.0,369.2 1937.8,353.4 1934.2,330.6"/><polyline points="1951.0,369.2 1949.4,399.2 1950.8,418.1"/><polyline points="1951.0,369.2 1973.1,392.3 1988.2,428.1"/><polyline points="2306.1,503.9 2292.6,501.1 2265.4,485.9"/><polyline points="2306.1,503.9 2318.1,489.7 2342.1,464.1"/><polyline points="2306.1,503.9 2288.7,475.6 2273.4,447.9"/><polyline points="2320.6,303.0 2334.9,281.7 2336.0,267.6"/><polyline points="2320.6,303.0 2305.4,278.1 2289.6,241.0"/><polyline points="2320.6,303.0 2348.8,329.6 2370.7,357.1"/><polyline points="2197.7,285.8 2185.9,310.9 2160.6,327.1"/><polyline points="2197.7,285.8 2170.7,273.3 2140.8,271.6"/><polyline points="2197.7,285.8 2188.1,256.8 2175.0,229.0"/><polyline points="2175.0,229.0 2153.8,244.0 2140.8,271.6"/><polyline points="2175.0,229.0 2168.2,272.8 2160.6,327.1"/><polyline points="2587.8,346.5 2592.3,325.6 2598.4,300.0"/><polyline points="2587.8,346.5 2557.8,360.5 2529.1,381.0"/><polyline points="2587.8,346.5 2623.7,342.9 2657.3,341.6"/><polyline points="2657.3,341.6 2653.9,315.5 2642.7,288.5"/><polyline points="2657.3,341.6 2634.8,327.2 2598.4,300.0"/><polyline points="1925.5,278.7 1933.1,301.0 1934.2,330.6"/><polyline points="1925.5,278.7 1960.5,300.8 2006.4,312.0"/><polyline points="1925.5,278.7 1942.2,325.7 1951.0,369.2"/><polyline points="1988.2,428.1 1967.5,419.9 1950.8,418.1"/><polyline points="1988.2,428.1 2015.8,431.5 2038.3,433.2"/><polyline points="2598.4,300.0 2621.8,296.1 2642.7,288.5"/><polyline points="2012.4,225.3 2033.0,236.8 2046.5,256.9"/><polyline points="2012.4,225.3 2005.9,275.4 2006.4,312.0"/><polyline points="2408.8,363.3 2395.6,365.5 2370.7,357.1"/><polyline points="2408.8,363.3 2431.1,365.4 2466.3,379.8"/><polyline points="2408.8,363.3 2415.7,391.0 2429.0,420.8"/><polyline points="2089.9,464.6 2092.0,438.7 2090.6,424.0"/><polyline points="2089.9,464.6 2064.7,442.9 2038.3,433.2"/><polyline points="2089.9,464.6 2106.8,443.8 2135.2,418.1"/><polyline points="2038.3,433.2 2065.2,430.4 2090.6,424.0"/><polyline points="2025.8,353.8 2053.5,369.7 2084.7,386.2"/><polyline points="2025.8,353.8 1984.3,359.3 1951.0,369.2"/><polyline points="2188.1,519.0 2204.9,506.5 2214.8,484.5"/><polyline points="2188.1,519.0 2161.7,502.8 2147.3,497.2"/><polyline points="2188.1,519.0 2217.5,521.8 2238.3,521.2"/><polyline points="2107.3,344.4 2137.7,331.7 2160.6,327.1"/><polyline points="2135.2,418.1 2111.8,417.6 2090.6,424.0"/><polyline points="2135.2,418.1 2150.9,393.4 2157.9,372.4"/><polyline points="2135.2,418.1 2162.5,438.6 2185.4,445.4"/><polyline points="2246.5,365.3 2224.7,368.5 2207.7,370.2"/><polyline points="2246.5,365.3 2252.2,391.8 2250.9,406.5"/><polyline points="2246.5,365.3 2280.4,382.5 2316.3,403.3"/><polyline points="2422.0,512.5 2433.6,527.3 2456.5,531.7"/><polyline points="2422.0,512.5 2399.8,493.2 2389.5,485.5"/><polyline points="2289.6,241.0 2304.9,226.7 2318.4,212.8"/><polyline points="2289.6,241.0 2315.4,251.5 2336.0,267.6"/><polyline points="2147.3,497.2 2169.5,474.0 2185.4,445.4"/><polyline points="2147.3,497.2 2115.6,475.9 2089.9,464.6"/><polyline points="2440.9,308.5 2451.3,327.5 2465.6,340.1"/><polyline points="2440.9,308.5 2428.6,274.3 2419.9,250.8"/><polyline points="2440.9,308.5 2427.8,336.8 2408.8,363.3"/><polyline points="2419.9,250.8 2440.1,238.5 2448.5,213.9"/><polyline points="2238.3,521.2 2232.3,502.0 2214.8,484.5"/><polyline points="2238.3,521.2 2256.1,500.8 2265.4,485.9"/><polyline points="2342.1,464.1 2363.2,473.4 2389.5,485.5"/><polyline points="2562.6,454.5 2562.1,480.4 2549.5,495.3"/><polyline points="2562.6,454.5 2558.2,430.7 2560.8,410.8"/><polyline points="2562.6,454.5 2524.7,436.9 2490.6,423.1"/><polyline points="2229.3,447.9 2220.6,464.6 2214.8,484.5"/><polyline points="2229.3,447.9 2203.1,447.6 2185.4,445.4"/><polyline points="2229.3,447.9 2255.5,448.5 2273.4,447.9"/><polyline points="2465.6,340.1 2470.6,360.8 2466.3,379.8"/><polyline points="2465.6,340.1 2487.9,333.0 2519.3,318.7"/><polyline points="2429.0,420.8 2453.0,397.2 2466.3,379.8"/><polyline points="2560.8,410.8 2538.2,396.1 2529.1,381.0"/><polyline points="2560.8,410.8 2574.9,379.6 2587.8,346.5"/><polyline points="1950.8,418.1 2001.1,427.7 2038.3,433.2"/><polyline points="2529.1,381.0 2501.9,374.3 2466.3,379.8"/><polyline points="2456.5,531.7 2423.7,512.6 2389.5,485.5"/><polyline points="2185.4,445.4 2194.3,459.1 2214.8,484.5"/><polyline points="2680.0,218.8 2655.8,228.4 2624.9,226.8"/><polyline points="2680.0,218.8 2707.2,228.6 2746.0,234.6"/><polyline points="2680.0,218.8 2656.3,257.1 2642.7,288.5"/><polyline points="2318.4,212.8 2329.3,236.6 2336.0,267.6"/><polyline points="2642.7,288.5 2629.9,261.4 2624.9,226.8"/><polyline points="2517.1,275.0 2518.5,300.5 2519.3,318.7"/><polyline points="2517.1,275.0 2489.9,305.3 2465.6,340.1"/><polyline points="2160.6,327.1 2165.8,352.2 2157.9,372.4"/><polyline points="2265.4,485.9 2269.3,467.5 2273.4,447.9"/><polyline points="2250.9,406.5 2243.2,430.1 2229.3,447.9"/><polyline points="2250.9,406.5 2268.0,426.0 2273.4,447.9"/><polyline points="2549.5,495.3 2514.2,493.1 2469.8,486.3"/><polyline points="2549.5,495.3 2560.1,457.4 2560.8,410.8"/><polyline points="2389.5,485.5 2413.9,458.6 2429.0,420.8"/><polyline points="2624.9,226.8 2618.1,265.4 2598.4,300.0"/><polyline points="2746.0,234.6 2694.7,264.5 2642.7,288.5"/><polyline points="2746.0,234.6 2689.7,229.6 2624.9,226.8"/><polyline points="2448.5,213.9 2414.2,214.6 2382.0,225.2"/><polyline points="2157.9,372.4 2186.2,378.2 2207.7,370.2"/><polyline points="2519.3,318.7 2522.4,345.2 2529.1,381.0"/><polyline points="2207.7,370.2 2225.2,387.3 2250.9,406.5"/><polyline points="2370.7,357.1 2340.6,386.8 2316.3,403.3"/></g><g fill="none" stroke="#a8c6bf" stroke-width="1" stroke-linejoin="round" opacity="0.75"><polyline points="1195.6,521.1 1238.8,504.0 1287.6,510.0"/><polyline points="1195.6,521.1 1151.6,530.4 1102.7,565.3"/><polyline points="1102.7,565.3 1107.1,602.0 1110.4,655.0"/><polyline points="1562.6,226.7 1572.8,236.0 1597.2,257.1"/><polyline points="1562.6,226.7 1600.4,253.5 1653.0,294.4"/><polyline points="1597.2,257.1 1618.2,263.2 1653.0,294.4"/><polyline points="1653.0,294.4 1664.6,306.5 1678.7,320.2"/><polyline points="1678.7,320.2 1648.9,345.3 1631.2,391.2"/><polyline points="1417.5,338.1 1403.6,368.6 1385.7,396.7"/><polyline points="1417.5,338.1 1448.4,360.0 1476.9,397.3"/><polyline points="1503.2,337.8 1497.7,354.3 1476.9,397.3"/><polyline points="1503.2,337.8 1547.6,344.8 1580.6,370.5"/><polyline points="1580.6,370.5 1562.5,381.4 1555.7,416.6"/><polyline points="1580.6,370.5 1602.8,379.9 1631.2,391.2"/><polyline points="1631.2,391.2 1623.3,407.2 1625.6,432.6"/><polyline points="1631.2,391.2 1659.3,390.8 1682.9,406.4"/><polyline points="1385.7,396.7 1377.9,416.2 1368.6,461.7"/><polyline points="1476.9,397.3 1509.3,396.2 1555.7,416.6"/><polyline points="1555.7,416.6 1593.5,417.4 1625.6,432.6"/><polyline points="1682.9,406.4 1682.0,421.8 1687.0,446.5"/><polyline points="1625.6,432.6 1655.6,430.3 1687.0,446.5"/><polyline points="1757.5,377.4 1767.7,381.2 1768.5,390.6"/><polyline points="1757.5,377.4 1747.0,391.8 1744.7,415.8"/><polyline points="1768.5,390.6 1757.0,403.2 1744.7,415.8"/><polyline points="1687.0,446.5 1692.3,457.8 1690.3,487.9"/><polyline points="1368.6,461.7 1365.2,484.1 1346.5,530.8"/><polyline points="1444.6,475.5 1480.9,478.5 1519.8,485.2"/><polyline points="1444.6,475.5 1401.0,462.4 1368.6,461.7"/><polyline points="1519.8,485.2 1530.4,447.6 1555.7,416.6"/><polyline points="1690.3,487.9 1673.5,494.8 1648.3,511.4"/><polyline points="1648.3,511.4 1627.0,514.9 1593.6,536.3"/><polyline points="1287.6,510.0 1320.2,515.9 1346.5,530.8"/><polyline points="1593.6,536.3 1573.6,542.7 1551.0,562.6"/><polyline points="1426.6,557.0 1441.0,517.4 1444.6,475.5"/><polyline points="1426.6,557.0 1386.1,540.5 1346.5,530.8"/><polyline points="1551.0,562.6 1526.7,568.8 1516.5,580.5"/><polyline points="1516.5,580.5 1545.1,614.1 1569.0,643.9"/><polyline points="1714.6,558.4 1735.0,567.6 1745.0,595.7"/><polyline points="1714.6,558.4 1740.2,546.9 1769.5,542.0"/><polyline points="1745.0,595.7 1718.0,610.2 1706.3,637.9"/><polyline points="1888.8,593.0 1883.7,580.9 1889.2,593.0"/><polyline points="1888.8,593.0 1865.7,623.7 1856.8,657.8"/><polyline points="2003.9,575.0 2012.9,595.0 2033.7,635.1"/><polyline points="2003.9,575.0 1944.8,583.9 1889.2,593.0"/><polyline points="1889.2,593.0 1866.3,618.6 1856.8,657.8"/><polyline points="1110.4,655.0 1156.1,645.4 1200.3,635.6"/><polyline points="1200.3,635.6 1203.1,578.2 1195.6,521.1"/><polyline points="1150.0,754.5 1111.2,776.1 1079.5,812.5"/><polyline points="1150.0,754.5 1136.6,803.0 1127.8,851.2"/><polyline points="1079.5,812.5 1111.0,820.3 1127.8,851.2"/><polyline points="1127.8,851.2 1115.3,871.1 1113.2,911.5"/><polyline points="1113.2,911.5 1125.8,949.1 1146.9,999.1"/><polyline points="1201.1,964.6 1175.4,972.1 1146.9,999.1"/><polyline points="1201.1,964.6 1149.2,930.8 1113.2,911.5"/><polyline points="1146.9,999.1 1143.5,1031.7 1144.2,1074.1"/><polyline points="1452.6,646.1 1420.4,661.0 1373.8,681.8"/><polyline points="1452.6,646.1 1484.8,609.2 1516.5,580.5"/><polyline points="1569.0,643.9 1603.6,651.5 1632.5,685.4"/><polyline points="1706.3,637.9 1716.8,596.6 1714.6,558.4"/><polyline points="1792.6,646.1 1799.2,644.5 1793.8,645.3"/><polyline points="1792.6,646.1 1822.8,644.3 1856.4,657.8"/><polyline points="1856.4,657.8 1850.3,653.9 1856.8,657.8"/><polyline points="1856.4,657.8 1843.0,671.4 1843.7,710.8"/><polyline points="1922.5,673.0 1917.7,661.6 1922.3,673.0"/><polyline points="1922.5,673.0 1929.3,689.5 1941.3,732.4"/><polyline points="1373.8,681.8 1322.3,689.3 1286.8,719.9"/><polyline points="1632.5,685.4 1607.4,715.9 1595.0,762.8"/><polyline points="1286.8,719.9 1299.0,762.3 1326.3,804.8"/><polyline points="1843.7,710.8 1845.5,699.2 1843.6,710.8"/><polyline points="1941.3,732.4 1937.5,724.0 1941.7,732.4"/><polyline points="1941.3,732.4 1943.3,742.5 1949.6,776.6"/><polyline points="1595.0,762.8 1599.6,798.5 1593.0,830.5"/><polyline points="1744.5,761.4 1793.5,729.8 1843.6,710.8"/><polyline points="1744.5,761.4 1787.5,723.7 1843.7,710.8"/><polyline points="1900.7,761.4 1897.9,751.6 1900.2,761.4"/><polyline points="1900.7,761.4 1926.3,735.5 1941.3,732.4"/><polyline points="1949.6,776.6 1945.3,777.8 1956.3,776.6"/><polyline points="1949.6,776.6 1946.1,742.8 1941.7,732.4"/><polyline points="1326.3,804.8 1319.4,828.9 1311.1,880.2"/><polyline points="1326.3,804.8 1370.3,806.9 1413.4,805.6"/><polyline points="1413.4,805.6 1368.1,840.0 1311.1,880.2"/><polyline points="1593.0,830.5 1603.4,865.2 1621.5,916.2"/><polyline points="1621.5,916.2 1578.4,927.3 1546.0,941.6"/><polyline points="1746.4,916.2 1742.8,971.9 1738.1,1030.7"/><polyline points="1746.4,916.2 1681.2,905.8 1621.5,916.2"/><polyline points="1546.0,941.6 1574.5,887.8 1593.0,830.5"/><polyline points="1944.0,934.1 1950.1,933.0 1945.0,934.1"/><polyline points="1944.0,934.1 1956.6,910.5 1959.1,891.3"/><polyline points="1845.9,993.6 1841.5,987.9 1845.8,993.6"/><polyline points="1845.9,993.6 1789.7,998.6 1738.1,1030.7"/><polyline points="1793.8,645.3 1817.5,642.0 1856.4,657.8"/><polyline points="1856.8,657.8 1846.4,681.4 1843.7,710.8"/><polyline points="1922.3,673.0 1939.1,695.9 1941.3,732.4"/><polyline points="2033.7,635.1 1985.1,655.9 1922.5,673.0"/><polyline points="1843.6,710.8 1857.3,676.1 1856.4,657.8"/><polyline points="1900.2,761.4 1916.3,736.5 1941.3,732.4"/><polyline points="1956.3,776.6 1944.1,743.8 1941.7,732.4"/><polyline points="1977.6,822.2 1968.9,799.8 1956.3,776.6"/><polyline points="1977.6,822.2 1969.0,793.1 1949.6,776.6"/><polyline points="2098.7,840.7 2070.0,850.5 2036.5,862.8"/><polyline points="2098.7,840.7 2113.1,871.3 2140.7,908.7"/><polyline points="2036.5,862.8 2013.6,841.0 1977.6,822.2"/><polyline points="1959.1,891.3 1956.1,906.3 1945.0,934.1"/><polyline points="2140.7,908.7 2121.1,945.6 2111.7,985.3"/><polyline points="2066.9,963.2 2086.6,973.1 2111.7,985.3"/><polyline points="2066.9,963.2 2087.8,982.4 2093.7,1016.9"/><polyline points="2111.7,985.3 2101.1,1002.2 2093.7,1016.9"/><polyline points="1845.8,993.6 1795.5,1000.9 1738.1,1030.7"/><polyline points="1144.2,1074.1 1172.1,1085.1 1211.9,1119.2"/><polyline points="1211.9,1119.2 1229.1,1153.4 1233.4,1189.7"/><polyline points="1233.4,1189.7 1224.0,1253.6 1226.0,1319.0"/><polyline points="1226.0,1319.0 1268.2,1331.7 1295.1,1351.3"/><polyline points="1226.0,1319.0 1193.1,1347.2 1164.9,1385.9"/><polyline points="1164.9,1385.9 1224.1,1354.8 1295.1,1351.3"/><polyline points="1391.3,1014.1 1436.1,1040.9 1465.9,1075.0"/><polyline points="1391.3,1014.1 1336.4,1035.8 1280.7,1055.6"/><polyline points="1280.7,1055.6 1245.2,1087.3 1211.9,1119.2"/><polyline points="1465.9,1075.0 1426.2,1109.7 1376.1,1165.6"/><polyline points="1629.0,1101.2 1600.8,1129.2 1580.6,1175.8"/><polyline points="1629.0,1101.2 1679.4,1061.3 1738.1,1030.7"/><polyline points="1376.1,1165.6 1300.9,1170.4 1233.4,1189.7"/><polyline points="1580.6,1175.8 1560.2,1212.3 1551.6,1247.7"/><polyline points="1797.0,1203.5 1798.4,1237.6 1804.5,1285.0"/><polyline points="1797.0,1203.5 1841.4,1170.8 1883.2,1137.1"/><polyline points="1909.5,1202.6 1908.2,1203.0 1909.4,1202.1"/><polyline points="1909.5,1202.6 1896.4,1164.4 1883.2,1137.1"/><polyline points="1551.6,1247.7 1607.2,1230.5 1662.1,1240.8"/><polyline points="1662.1,1240.8 1620.4,1197.2 1580.6,1175.8"/><polyline points="1883.2,1137.1 1888.4,1168.4 1909.4,1202.1"/><polyline points="1804.5,1285.0 1851.8,1237.4 1909.5,1202.6"/><polyline points="1386.3,1319.6 1389.6,1342.8 1385.7,1376.2"/><polyline points="1386.3,1319.6 1337.9,1329.7 1295.1,1351.3"/><polyline points="1295.1,1351.3 1341.3,1362.3 1385.7,1376.2"/><polyline points="2019.6,1115.6 2003.6,1137.9 2000.3,1170.3"/><polyline points="2019.6,1115.6 2052.6,1056.7 2093.7,1016.9"/><polyline points="2000.3,1170.3 1959.2,1180.3 1909.4,1202.1"/><polyline points="1775.7,450.4 1773.0,461.6 1768.3,476.4"/><polyline points="1775.7,450.4 1764.3,452.8 1739.8,469.0"/><polyline points="1739.8,469.0 1755.9,466.8 1768.3,476.4"/><polyline points="1769.5,542.0 1757.4,565.9 1745.0,595.7"/></g><g><path d="M795.4,261.0H814.6Q818.8,261.0 818.8,265.2V280.8Q818.8,282.8 816.6,283.9L806.6,290.6Q805.0,291.2 803.4,290.6L793.4,283.9Q791.2,282.8 791.2,280.8V265.2Q791.2,261.0 795.4,261.0Z" fill="#ffffff" stroke="#33423b" stroke-width="1.6"/><text x="805.0" y="280.6" font-size="17.3" fill="#3a3f3d" stroke="#3a3f3d" stroke-width="0.45" text-anchor="middle" textLength="8.7" lengthAdjust="spacingAndGlyphs">8</text><path d="M825.8,337.3H845.0Q849.2,337.3 849.2,341.5V357.1Q849.2,359.1 847.0,360.2L837.0,366.9Q835.4,367.5 833.8,366.9L823.8,360.2Q821.6,359.1 821.6,357.1V341.5Q821.6,337.3 825.8,337.3Z" fill="#ffffff" stroke="#33423b" stroke-width="1.6"/><text x="835.4" y="356.9" font-size="17.3" fill="#3a3f3d" stroke="#3a3f3d" stroke-width="0.45" text-anchor="middle" textLength="8.7" lengthAdjust="spacingAndGlyphs">7</text><path d="M885.6,391.2H909.6Q913.9,391.2 913.9,395.4V411.0Q913.9,413.0 911.6,414.1L899.2,420.8Q897.6,421.4 896.0,420.8L883.6,414.1Q881.4,413.0 881.4,411.0V395.4Q881.4,391.2 885.6,391.2Z" fill="#ffffff" stroke="#33423b" stroke-width="1.6"/><text x="897.6" y="410.8" font-size="17.3" fill="#3a3f3d" stroke="#3a3f3d" stroke-width="0.45" text-anchor="middle" textLength="17.4" lengthAdjust="spacingAndGlyphs">35</text><path d="M1024.0,380.1H1043.2Q1047.4,380.1 1047.4,384.3V399.9Q1047.4,401.9 1045.2,403.0L1035.2,409.7Q1033.6,410.3 1032.0,409.7L1022.0,403.0Q1019.8,401.9 1019.8,399.9V384.3Q1019.8,380.1 1024.0,380.1Z" fill="#ffffff" stroke="#33423b" stroke-width="1.6"/><text x="1033.6" y="399.7" font-size="17.3" fill="#3a3f3d" stroke="#3a3f3d" stroke-width="0.45" text-anchor="middle" textLength="8.7" lengthAdjust="spacingAndGlyphs">7</text><path d="M1018.5,219.8H1037.7Q1041.9,219.8 1041.9,224.0V239.6Q1041.9,241.6 1039.7,242.7L1029.7,249.4Q1028.1,250.0 1026.5,249.4L1016.5,242.7Q1014.3,241.6 1014.3,239.6V224.0Q1014.3,219.8 1018.5,219.8Z" fill="#ffffff" stroke="#33423b" stroke-width="1.6"/><text x="1028.1" y="239.4" font-size="17.3" fill="#3a3f3d" stroke="#3a3f3d" stroke-width="0.45" text-anchor="middle" textLength="8.7" lengthAdjust="spacingAndGlyphs">8</text><path d="M887.8,481.0H911.8Q916.0,481.0 916.0,485.2V500.8Q916.0,502.8 913.8,503.9L901.4,510.6Q899.8,511.2 898.2,510.6L885.8,503.9Q883.5,502.8 883.5,500.8V485.2Q883.5,481.0 887.8,481.0Z" fill="#ffffff" stroke="#33423b" stroke-width="1.6"/><text x="899.8" y="500.6" font-size="17.3" fill="#3a3f3d" stroke="#3a3f3d" stroke-width="0.45" text-anchor="middle" textLength="17.4" lengthAdjust="spacingAndGlyphs">35</text><path d="M846.8,568.6H879.4Q883.6,568.6 883.6,572.8V588.4Q883.6,590.4 881.4,591.5L864.7,598.2Q863.1,598.8 861.5,598.2L844.8,591.5Q842.6,590.4 842.6,588.4V572.8Q842.6,568.6 846.8,568.6Z" fill="#ffffff" stroke="#33423b" stroke-width="1.6"/><text x="863.1" y="588.2" font-size="17.3" fill="#3a3f3d" stroke="#3a3f3d" stroke-width="0.45" text-anchor="middle" textLength="26" lengthAdjust="spacingAndGlyphs">188</text><path d="M682.9,578.3H715.5Q719.7,578.3 719.7,582.5V598.1Q719.7,600.1 717.5,601.2L700.8,607.9Q699.2,608.5 697.6,607.9L680.9,601.2Q678.7,600.1 678.7,598.1V582.5Q678.7,578.3 682.9,578.3Z" fill="#ffffff" stroke="#33423b" stroke-width="1.6"/><text x="699.2" y="597.9" font-size="17.3" fill="#3a3f3d" stroke="#3a3f3d" stroke-width="0.45" text-anchor="middle" textLength="26" lengthAdjust="spacingAndGlyphs">188</text><path d="M1243.8,320.7H1267.8Q1272.0,320.7 1272.0,324.9V340.5Q1272.0,342.5 1269.8,343.6L1257.4,350.3Q1255.8,350.9 1254.2,350.3L1241.8,343.6Q1239.5,342.5 1239.5,340.5V324.9Q1239.5,320.7 1243.8,320.7Z" fill="#ffffff" stroke="#33423b" stroke-width="1.6"/><text x="1255.8" y="340.3" font-size="17.3" fill="#3a3f3d" stroke="#3a3f3d" stroke-width="0.45" text-anchor="middle" textLength="17.4" lengthAdjust="spacingAndGlyphs">33</text><path d="M1792.5,296.4H1816.5Q1820.8,296.4 1820.8,300.6V316.2Q1820.8,318.2 1818.5,319.3L1806.1,326.0Q1804.5,326.6 1802.9,326.0L1790.5,319.3Q1788.2,318.2 1788.2,316.2V300.6Q1788.2,296.4 1792.5,296.4Z" fill="#ffffff" stroke="#33423b" stroke-width="1.6"/><text x="1804.5" y="316.0" font-size="17.3" fill="#3a3f3d" stroke="#3a3f3d" stroke-width="0.45" text-anchor="middle" textLength="17.4" lengthAdjust="spacingAndGlyphs">12</text><path d="M1919.5,376.0H1943.6Q1947.8,376.0 1947.8,380.2V395.8Q1947.8,397.8 1945.6,398.9L1933.2,405.6Q1931.6,406.2 1930.0,405.6L1917.5,398.9Q1915.3,397.8 1915.3,395.8V380.2Q1915.3,376.0 1919.5,376.0Z" fill="#7a9a45" stroke="#e4ecc9" stroke-width="1.6"/><text x="1931.6" y="395.6" font-size="17.3" fill="#ffffff" stroke="#ffffff" stroke-width="0.45" text-anchor="middle" textLength="17.4" lengthAdjust="spacingAndGlyphs">21</text><path d="M1260.9,435.4H1280.1Q1284.3,435.4 1284.3,439.6V455.2Q1284.3,457.2 1282.1,458.3L1272.1,465.0Q1270.5,465.6 1268.9,465.0L1258.9,458.3Q1256.7,457.2 1256.7,455.2V439.6Q1256.7,435.4 1260.9,435.4Z" fill="#ffffff" stroke="#33423b" stroke-width="1.6"/><text x="1270.5" y="455.0" font-size="17.3" fill="#3a3f3d" stroke="#3a3f3d" stroke-width="0.45" text-anchor="middle" textLength="8.7" lengthAdjust="spacingAndGlyphs">7</text><path d="M1398.2,466.3H1417.4Q1421.6,466.3 1421.6,470.5V486.1Q1421.6,488.1 1419.4,489.2L1409.4,495.9Q1407.8,496.5 1406.2,495.9L1396.2,489.2Q1394.0,488.1 1394.0,486.1V470.5Q1394.0,466.3 1398.2,466.3Z" fill="#ffffff" stroke="#33423b" stroke-width="1.6"/><text x="1407.8" y="485.9" font-size="17.3" fill="#3a3f3d" stroke="#3a3f3d" stroke-width="0.45" text-anchor="middle" textLength="8.7" lengthAdjust="spacingAndGlyphs">7</text><path d="M1694.5,445.6H1713.7Q1717.9,445.6 1717.9,449.8V465.4Q1717.9,467.4 1715.7,468.5L1705.7,475.2Q1704.1,475.8 1702.5,475.2L1692.5,468.5Q1690.3,467.4 1690.3,465.4V449.8Q1690.3,445.6 1694.5,445.6Z" fill="#ffffff" stroke="#33423b" stroke-width="1.6"/><text x="1704.1" y="465.2" font-size="17.3" fill="#3a3f3d" stroke="#3a3f3d" stroke-width="0.45" text-anchor="middle" textLength="8.7" lengthAdjust="spacingAndGlyphs">7</text><path d="M1688.5,398.6H1707.7Q1711.9,398.6 1711.9,402.8V418.4Q1711.9,420.4 1709.7,421.5L1699.7,428.2Q1698.1,428.8 1696.5,428.2L1686.5,421.5Q1684.3,420.4 1684.3,418.4V402.8Q1684.3,398.6 1688.5,398.6Z" fill="#ffffff" stroke="#33423b" stroke-width="1.6"/><text x="1698.1" y="418.2" font-size="17.3" fill="#3a3f3d" stroke="#3a3f3d" stroke-width="0.45" text-anchor="middle" textLength="8.7" lengthAdjust="spacingAndGlyphs">8</text><path d="M1532.3,207.9H1551.5Q1555.7,207.9 1555.7,212.1V227.7Q1555.7,229.7 1553.5,230.8L1543.5,237.5Q1541.9,238.1 1540.3,237.5L1530.3,230.8Q1528.1,229.7 1528.1,227.7V212.1Q1528.1,207.9 1532.3,207.9Z" fill="#ffffff" stroke="#33423b" stroke-width="1.6"/><text x="1541.9" y="227.5" font-size="17.3" fill="#3a3f3d" stroke="#3a3f3d" stroke-width="0.45" text-anchor="middle" textLength="8.7" lengthAdjust="spacingAndGlyphs">9</text><path d="M1276.0,512.8H1308.6Q1312.8,512.8 1312.8,517.0V532.6Q1312.8,534.6 1310.6,535.7L1293.9,542.4Q1292.3,543.0 1290.7,542.4L1274.0,535.7Q1271.8,534.6 1271.8,532.6V517.0Q1271.8,512.8 1276.0,512.8Z" fill="#ffffff" stroke="#33423b" stroke-width="1.6"/><text x="1292.3" y="532.4" font-size="17.3" fill="#3a3f3d" stroke="#3a3f3d" stroke-width="0.45" text-anchor="middle" textLength="26" lengthAdjust="spacingAndGlyphs">188</text><path d="M1395.7,509.7H1428.3Q1432.5,509.7 1432.5,513.9V529.5Q1432.5,531.5 1430.3,532.6L1413.6,539.3Q1412.0,539.9 1410.4,539.3L1393.7,532.6Q1391.5,531.5 1391.5,529.5V513.9Q1391.5,509.7 1395.7,509.7Z" fill="#ffffff" stroke="#33423b" stroke-width="1.6"/><text x="1412.0" y="529.3" font-size="17.3" fill="#3a3f3d" stroke="#3a3f3d" stroke-width="0.45" text-anchor="middle" textLength="26" lengthAdjust="spacingAndGlyphs">188</text><path d="M1655.3,512.5H1674.5Q1678.7,512.5 1678.7,516.7V532.3Q1678.7,534.3 1676.5,535.4L1666.5,542.1Q1664.9,542.7 1663.3,542.1L1653.3,535.4Q1651.1,534.3 1651.1,532.3V516.7Q1651.1,512.5 1655.3,512.5Z" fill="#ffffff" stroke="#33423b" stroke-width="1.6"/><text x="1664.9" y="532.1" font-size="17.3" fill="#3a3f3d" stroke="#3a3f3d" stroke-width="0.45" text-anchor="middle" textLength="8.7" lengthAdjust="spacingAndGlyphs">5</text><path d="M1759.1,582.4H1791.7Q1795.9,582.4 1795.9,586.6V602.2Q1795.9,604.2 1793.7,605.3L1777.0,612.0Q1775.4,612.6 1773.8,612.0L1757.1,605.3Q1754.9,604.2 1754.9,602.2V586.6Q1754.9,582.4 1759.1,582.4Z" fill="#ffffff" stroke="#33423b" stroke-width="1.6"/><text x="1775.4" y="602.0" font-size="17.3" fill="#3a3f3d" stroke="#3a3f3d" stroke-width="0.45" text-anchor="middle" textLength="26" lengthAdjust="spacingAndGlyphs">205</text><path d="M2198.0,266.8H2217.2Q2221.4,266.8 2221.4,271.0V286.6Q2221.4,288.6 2219.2,289.7L2209.2,296.4Q2207.6,297.0 2206.0,296.4L2196.0,289.7Q2193.8,288.6 2193.8,286.6V271.0Q2193.8,266.8 2198.0,266.8Z" fill="#7a9a45" stroke="#e4ecc9" stroke-width="1.6"/><text x="2207.6" y="286.4" font-size="17.3" fill="#ffffff" stroke="#ffffff" stroke-width="0.45" text-anchor="middle" textLength="8.7" lengthAdjust="spacingAndGlyphs">5</text><path d="M2138.6,342.8H2157.8Q2162.0,342.8 2162.0,347.0V362.6Q2162.0,364.6 2159.8,365.7L2149.8,372.4Q2148.2,373.0 2146.6,372.4L2136.6,365.7Q2134.4,364.6 2134.4,362.6V347.0Q2134.4,342.8 2138.6,342.8Z" fill="#7a9a45" stroke="#e4ecc9" stroke-width="1.6"/><text x="2148.2" y="362.4" font-size="17.3" fill="#ffffff" stroke="#ffffff" stroke-width="0.45" text-anchor="middle" textLength="8.7" lengthAdjust="spacingAndGlyphs">3</text><path d="M2347.2,312.4H2366.4Q2370.6,312.4 2370.6,316.6V332.2Q2370.6,334.2 2368.4,335.3L2358.4,342.0Q2356.8,342.6 2355.2,342.0L2345.2,335.3Q2343.0,334.2 2343.0,332.2V316.6Q2343.0,312.4 2347.2,312.4Z" fill="#7a9a45" stroke="#e4ecc9" stroke-width="1.6"/><text x="2356.8" y="332.0" font-size="17.3" fill="#ffffff" stroke="#ffffff" stroke-width="0.45" text-anchor="middle" textLength="8.7" lengthAdjust="spacingAndGlyphs">7</text><path d="M2460.8,340.6H2480.0Q2484.2,340.6 2484.2,344.8V360.4Q2484.2,362.4 2482.0,363.5L2472.0,370.2Q2470.4,370.8 2468.8,370.2L2458.8,363.5Q2456.6,362.4 2456.6,360.4V344.8Q2456.6,340.6 2460.8,340.6Z" fill="#7a9a45" stroke="#e4ecc9" stroke-width="1.6"/><text x="2470.4" y="360.2" font-size="17.3" fill="#ffffff" stroke="#ffffff" stroke-width="0.45" text-anchor="middle" textLength="8.7" lengthAdjust="spacingAndGlyphs">8</text><path d="M1905.8,507.8H1925.0Q1929.2,507.8 1929.2,512.0V527.6Q1929.2,529.6 1927.0,530.7L1917.0,537.4Q1915.4,538.0 1913.8,537.4L1903.8,530.7Q1901.6,529.6 1901.6,527.6V512.0Q1901.6,507.8 1905.8,507.8Z" fill="#ffffff" stroke="#33423b" stroke-width="1.6"/><text x="1915.4" y="527.4" font-size="17.3" fill="#3a3f3d" stroke="#3a3f3d" stroke-width="0.45" text-anchor="middle" textLength="8.7" lengthAdjust="spacingAndGlyphs">1</text><path d="M2578.7,421.3H2597.9Q2602.1,421.3 2602.1,425.5V441.1Q2602.1,443.1 2599.9,444.2L2589.9,450.9Q2588.3,451.5 2586.7,450.9L2576.7,444.2Q2574.5,443.1 2574.5,441.1V425.5Q2574.5,421.3 2578.7,421.3Z" fill="#7a9a45" stroke="#e4ecc9" stroke-width="1.6"/><text x="2588.3" y="440.9" font-size="17.3" fill="#ffffff" stroke="#ffffff" stroke-width="0.45" text-anchor="middle" textLength="8.7" lengthAdjust="spacingAndGlyphs">9</text><path d="M902.7,807.5H926.8Q931.0,807.5 931.0,811.7V827.3Q931.0,829.3 928.8,830.4L916.3,837.1Q914.7,837.7 913.1,837.1L900.7,830.4Q898.5,829.3 898.5,827.3V811.7Q898.5,807.5 902.7,807.5Z" fill="#ffffff" stroke="#33423b" stroke-width="1.6"/><text x="914.7" y="827.1" font-size="17.3" fill="#3a3f3d" stroke="#3a3f3d" stroke-width="0.45" text-anchor="middle" textLength="17.4" lengthAdjust="spacingAndGlyphs">35</text><path d="M1042.8,841.5H1062.0Q1066.2,841.5 1066.2,845.7V861.3Q1066.2,863.3 1064.0,864.4L1054.0,871.1Q1052.4,871.7 1050.8,871.1L1040.8,864.4Q1038.6,863.3 1038.6,861.3V845.7Q1038.6,841.5 1042.8,841.5Z" fill="#ffffff" stroke="#33423b" stroke-width="1.6"/><text x="1052.4" y="861.1" font-size="17.3" fill="#3a3f3d" stroke="#3a3f3d" stroke-width="0.45" text-anchor="middle" textLength="8.7" lengthAdjust="spacingAndGlyphs">5</text><path d="M1185.5,900.7H1209.5Q1213.8,900.7 1213.8,904.9V920.5Q1213.8,922.5 1211.5,923.6L1199.1,930.3Q1197.5,930.9 1195.9,930.3L1183.5,923.6Q1181.2,922.5 1181.2,920.5V904.9Q1181.2,900.7 1185.5,900.7Z" fill="#ffffff" stroke="#33423b" stroke-width="1.6"/><text x="1197.5" y="920.3" font-size="17.3" fill="#3a3f3d" stroke="#3a3f3d" stroke-width="0.45" text-anchor="middle" textLength="17.4" lengthAdjust="spacingAndGlyphs">33</text><path d="M1152.2,593.3H1184.8Q1189.0,593.3 1189.0,597.5V613.1Q1189.0,615.1 1186.8,616.2L1170.1,622.9Q1168.5,623.5 1166.9,622.9L1150.2,616.2Q1148.0,615.1 1148.0,613.1V597.5Q1148.0,593.3 1152.2,593.3Z" fill="#ffffff" stroke="#33423b" stroke-width="1.6"/><text x="1168.5" y="612.9" font-size="17.3" fill="#3a3f3d" stroke="#3a3f3d" stroke-width="0.45" text-anchor="middle" textLength="26" lengthAdjust="spacingAndGlyphs">226</text><path d="M1374.2,687.3H1393.4Q1397.6,687.3 1397.6,691.5V707.1Q1397.6,709.1 1395.4,710.2L1385.4,716.9Q1383.8,717.5 1382.2,716.9L1372.2,710.2Q1370.0,709.1 1370.0,707.1V691.5Q1370.0,687.3 1374.2,687.3Z" fill="#ffffff" stroke="#33423b" stroke-width="1.6"/><text x="1383.8" y="706.9" font-size="17.3" fill="#3a3f3d" stroke="#3a3f3d" stroke-width="0.45" text-anchor="middle" textLength="8.7" lengthAdjust="spacingAndGlyphs">5</text><path d="M1332.7,753.1H1365.3Q1369.5,753.1 1369.5,757.3V772.9Q1369.5,774.9 1367.3,776.0L1350.6,782.7Q1349.0,783.3 1347.4,782.7L1330.7,776.0Q1328.5,774.9 1328.5,772.9V757.3Q1328.5,753.1 1332.7,753.1Z" fill="#ffffff" stroke="#33423b" stroke-width="1.6"/><text x="1349.0" y="772.7" font-size="17.3" fill="#3a3f3d" stroke="#3a3f3d" stroke-width="0.45" text-anchor="middle" textLength="26" lengthAdjust="spacingAndGlyphs">226</text><path d="M1665.7,647.2H1698.3Q1702.5,647.2 1702.5,651.4V667.0Q1702.5,669.0 1700.3,670.1L1683.6,676.8Q1682.0,677.4 1680.4,676.8L1663.7,670.1Q1661.5,669.0 1661.5,667.0V651.4Q1661.5,647.2 1665.7,647.2Z" fill="#ffffff" stroke="#33423b" stroke-width="1.6"/><text x="1682.0" y="666.8" font-size="17.3" fill="#3a3f3d" stroke="#3a3f3d" stroke-width="0.45" text-anchor="middle" textLength="26" lengthAdjust="spacingAndGlyphs">205</text><path d="M1810.6,597.5H1829.8Q1834.0,597.5 1834.0,601.7V617.3Q1834.0,619.3 1831.8,620.4L1821.8,627.1Q1820.2,627.7 1818.6,627.1L1808.6,620.4Q1806.4,619.3 1806.4,617.3V601.7Q1806.4,597.5 1810.6,597.5Z" fill="#ffffff" stroke="#33423b" stroke-width="1.6"/><text x="1820.2" y="617.1" font-size="17.3" fill="#3a3f3d" stroke="#3a3f3d" stroke-width="0.45" text-anchor="middle" textLength="8.7" lengthAdjust="spacingAndGlyphs">3</text><path d="M1662.2,876.6H1681.4Q1685.6,876.6 1685.6,880.8V896.4Q1685.6,898.4 1683.4,899.5L1673.4,906.2Q1671.8,906.8 1670.2,906.2L1660.2,899.5Q1658.0,898.4 1658.0,896.4V880.8Q1658.0,876.6 1662.2,876.6Z" fill="#ffffff" stroke="#33423b" stroke-width="1.6"/><text x="1671.8" y="896.2" font-size="17.3" fill="#3a3f3d" stroke="#3a3f3d" stroke-width="0.45" text-anchor="middle" textLength="8.7" lengthAdjust="spacingAndGlyphs">3</text><path d="M1672.1,972.8H1704.7Q1708.9,972.8 1708.9,977.0V992.6Q1708.9,994.6 1706.7,995.7L1690.0,1002.4Q1688.4,1003.0 1686.8,1002.4L1670.1,995.7Q1667.9,994.6 1667.9,992.6V977.0Q1667.9,972.8 1672.1,972.8Z" fill="#ffffff" stroke="#33423b" stroke-width="1.6"/><text x="1688.4" y="992.4" font-size="17.3" fill="#3a3f3d" stroke="#3a3f3d" stroke-width="0.45" text-anchor="middle" textLength="26" lengthAdjust="spacingAndGlyphs">226</text><path d="M1960.5,896.8H1993.1Q1997.3,896.8 1997.3,901.0V916.6Q1997.3,918.6 1995.1,919.7L1978.4,926.4Q1976.8,927.0 1975.2,926.4L1958.5,919.7Q1956.3,918.6 1956.3,916.6V901.0Q1956.3,896.8 1960.5,896.8Z" fill="#ffffff" stroke="#33423b" stroke-width="1.6"/><text x="1976.8" y="916.4" font-size="17.3" fill="#3a3f3d" stroke="#3a3f3d" stroke-width="0.45" text-anchor="middle" textLength="26" lengthAdjust="spacingAndGlyphs">RP2</text><path d="M551.7,1006.9H584.3Q588.5,1006.9 588.5,1011.1V1026.7Q588.5,1028.7 586.3,1029.8L569.6,1036.5Q568.0,1037.1 566.4,1036.5L549.7,1029.8Q547.5,1028.7 547.5,1026.7V1011.1Q547.5,1006.9 551.7,1006.9Z" fill="#ffffff" stroke="#33423b" stroke-width="1.6"/><text x="568.0" y="1026.5" font-size="17.3" fill="#3a3f3d" stroke="#3a3f3d" stroke-width="0.45" text-anchor="middle" textLength="26" lengthAdjust="spacingAndGlyphs">143</text><path d="M526.3,1197.1H558.9Q563.1,1197.1 563.1,1201.3V1216.9Q563.1,1218.9 560.9,1220.0L544.2,1226.7Q542.6,1227.3 541.0,1226.7L524.3,1220.0Q522.1,1218.9 522.1,1216.9V1201.3Q522.1,1197.1 526.3,1197.1Z" fill="#ffffff" stroke="#33423b" stroke-width="1.6"/><text x="542.6" y="1216.7" font-size="17.3" fill="#3a3f3d" stroke="#3a3f3d" stroke-width="0.45" text-anchor="middle" textLength="26" lengthAdjust="spacingAndGlyphs">152</text><path d="M287.7,1228.3H320.3Q324.5,1228.3 324.5,1232.5V1248.1Q324.5,1250.1 322.3,1251.2L305.6,1257.9Q304.0,1258.5 302.4,1257.9L285.7,1251.2Q283.5,1250.1 283.5,1248.1V1232.5Q283.5,1228.3 287.7,1228.3Z" fill="#ffffff" stroke="#33423b" stroke-width="1.6"/><text x="304.0" y="1247.9" font-size="17.3" fill="#3a3f3d" stroke="#3a3f3d" stroke-width="0.45" text-anchor="middle" textLength="26" lengthAdjust="spacingAndGlyphs">151</text><path d="M24.7,1365.1H48.8Q53.0,1365.1 53.0,1369.3V1384.9Q53.0,1386.9 50.8,1388.0L38.4,1394.7Q36.8,1395.3 35.2,1394.7L22.7,1388.0Q20.5,1386.9 20.5,1384.9V1369.3Q20.5,1365.1 24.7,1365.1Z" fill="#ffffff" stroke="#33423b" stroke-width="1.6"/><text x="36.8" y="1384.7" font-size="17.3" fill="#3a3f3d" stroke="#3a3f3d" stroke-width="0.45" text-anchor="middle" textLength="17.4" lengthAdjust="spacingAndGlyphs">22</text><path d="M775.7,1050.1H808.3Q812.5,1050.1 812.5,1054.3V1069.9Q812.5,1071.9 810.3,1073.0L793.6,1079.7Q792.0,1080.3 790.4,1079.7L773.7,1073.0Q771.5,1071.9 771.5,1069.9V1054.3Q771.5,1050.1 775.7,1050.1Z" fill="#ffffff" stroke="#33423b" stroke-width="1.6"/><text x="792.0" y="1069.7" font-size="17.3" fill="#3a3f3d" stroke="#3a3f3d" stroke-width="0.45" text-anchor="middle" textLength="26" lengthAdjust="spacingAndGlyphs">152</text><path d="M942.2,1114.2H966.3Q970.5,1114.2 970.5,1118.4V1134.0Q970.5,1136.0 968.3,1137.1L955.9,1143.8Q954.3,1144.4 952.7,1143.8L940.2,1137.1Q938.0,1136.0 938.0,1134.0V1118.4Q938.0,1114.2 942.2,1114.2Z" fill="#ffffff" stroke="#33423b" stroke-width="1.6"/><text x="954.3" y="1133.8" font-size="17.3" fill="#3a3f3d" stroke="#3a3f3d" stroke-width="0.45" text-anchor="middle" textLength="17.4" lengthAdjust="spacingAndGlyphs">35</text><path d="M932.4,1166.1H965.0Q969.2,1166.1 969.2,1170.3V1185.9Q969.2,1187.9 967.0,1189.0L950.3,1195.7Q948.7,1196.3 947.1,1195.7L930.4,1189.0Q928.2,1187.9 928.2,1185.9V1170.3Q928.2,1166.1 932.4,1166.1Z" fill="#ffffff" stroke="#33423b" stroke-width="1.6"/><text x="948.7" y="1185.7" font-size="17.3" fill="#3a3f3d" stroke="#3a3f3d" stroke-width="0.45" text-anchor="middle" textLength="26" lengthAdjust="spacingAndGlyphs">154</text><path d="M1178.5,1278.6H1202.6Q1206.8,1278.6 1206.8,1282.8V1298.4Q1206.8,1300.4 1204.6,1301.5L1192.2,1308.2Q1190.6,1308.8 1189.0,1308.2L1176.5,1301.5Q1174.3,1300.4 1174.3,1298.4V1282.8Q1174.3,1278.6 1178.5,1278.6Z" fill="#ffffff" stroke="#33423b" stroke-width="1.6"/><text x="1190.6" y="1298.2" font-size="17.3" fill="#3a3f3d" stroke="#3a3f3d" stroke-width="0.45" text-anchor="middle" textLength="17.4" lengthAdjust="spacingAndGlyphs">35</text><path d="M1619.9,1042.9H1639.1Q1643.3,1042.9 1643.3,1047.1V1062.7Q1643.3,1064.7 1641.1,1065.8L1631.1,1072.5Q1629.5,1073.1 1627.9,1072.5L1617.9,1065.8Q1615.7,1064.7 1615.7,1062.7V1047.1Q1615.7,1042.9 1619.9,1042.9Z" fill="#ffffff" stroke="#33423b" stroke-width="1.6"/><text x="1629.5" y="1062.5" font-size="17.3" fill="#3a3f3d" stroke="#3a3f3d" stroke-width="0.45" text-anchor="middle" textLength="8.7" lengthAdjust="spacingAndGlyphs">3</text><path d="M1842.1,1097.6H1874.7Q1878.9,1097.6 1878.9,1101.8V1117.4Q1878.9,1119.4 1876.7,1120.5L1860.0,1127.2Q1858.4,1127.8 1856.8,1127.2L1840.1,1120.5Q1837.9,1119.4 1837.9,1117.4V1101.8Q1837.9,1097.6 1842.1,1097.6Z" fill="#ffffff" stroke="#33423b" stroke-width="1.6"/><text x="1858.4" y="1117.2" font-size="17.3" fill="#3a3f3d" stroke="#3a3f3d" stroke-width="0.45" text-anchor="middle" textLength="26" lengthAdjust="spacingAndGlyphs">226</text><path d="M1655.5,1273.9H1688.1Q1692.3,1273.9 1692.3,1278.1V1293.7Q1692.3,1295.7 1690.1,1296.8L1673.4,1303.5Q1671.8,1304.1 1670.2,1303.5L1653.5,1296.8Q1651.3,1295.7 1651.3,1293.7V1278.1Q1651.3,1273.9 1655.5,1273.9Z" fill="#ffffff" stroke="#33423b" stroke-width="1.6"/><text x="1671.8" y="1293.5" font-size="17.3" fill="#3a3f3d" stroke="#3a3f3d" stroke-width="0.45" text-anchor="middle" textLength="26" lengthAdjust="spacingAndGlyphs">228</text><path d="M1752.8,1275.9H1785.4Q1789.6,1275.9 1789.6,1280.1V1295.7Q1789.6,1297.7 1787.4,1298.8L1770.7,1305.5Q1769.1,1306.1 1767.5,1305.5L1750.8,1298.8Q1748.6,1297.7 1748.6,1295.7V1280.1Q1748.6,1275.9 1752.8,1275.9Z" fill="#ffffff" stroke="#33423b" stroke-width="1.6"/><text x="1769.1" y="1295.5" font-size="17.3" fill="#3a3f3d" stroke="#3a3f3d" stroke-width="0.45" text-anchor="middle" textLength="26" lengthAdjust="spacingAndGlyphs">228</text><path d="M1473.7,1299.4H1492.9Q1497.1,1299.4 1497.1,1303.6V1319.2Q1497.1,1321.2 1494.9,1322.3L1484.9,1329.0Q1483.3,1329.6 1481.7,1329.0L1471.7,1322.3Q1469.5,1321.2 1469.5,1319.2V1303.6Q1469.5,1299.4 1473.7,1299.4Z" fill="#ffffff" stroke="#33423b" stroke-width="1.6"/><text x="1483.3" y="1319.0" font-size="17.3" fill="#3a3f3d" stroke="#3a3f3d" stroke-width="0.45" text-anchor="middle" textLength="8.7" lengthAdjust="spacingAndGlyphs">3</text><path d="M162.5,1422.0H195.1Q199.3,1422.0 199.3,1426.2V1441.8Q199.3,1443.8 197.1,1444.9L180.4,1451.6Q178.8,1452.2 177.2,1451.6L160.5,1444.9Q158.3,1443.8 158.3,1441.8V1426.2Q158.3,1422.0 162.5,1422.0Z" fill="#ffffff" stroke="#33423b" stroke-width="1.6"/><text x="178.8" y="1441.6" font-size="17.3" fill="#3a3f3d" stroke="#3a3f3d" stroke-width="0.45" text-anchor="middle" textLength="26" lengthAdjust="spacingAndGlyphs">237</text><path d="M403.1,1390.8H427.2Q431.4,1390.8 431.4,1395.0V1410.6Q431.4,1412.6 429.2,1413.7L416.7,1420.4Q415.1,1421.0 413.5,1420.4L401.1,1413.7Q398.9,1412.6 398.9,1410.6V1395.0Q398.9,1390.8 403.1,1390.8Z" fill="#ffffff" stroke="#33423b" stroke-width="1.6"/><text x="415.1" y="1410.4" font-size="17.3" fill="#3a3f3d" stroke="#3a3f3d" stroke-width="0.45" text-anchor="middle" textLength="17.4" lengthAdjust="spacingAndGlyphs">22</text><path d="M900.8,1381.7H924.8Q929.0,1381.7 929.0,1385.9V1401.5Q929.0,1403.5 926.8,1404.6L914.4,1411.3Q912.8,1411.9 911.2,1411.3L898.8,1404.6Q896.5,1403.5 896.5,1401.5V1385.9Q896.5,1381.7 900.8,1381.7Z" fill="#ffffff" stroke="#33423b" stroke-width="1.6"/><text x="912.8" y="1401.3" font-size="17.3" fill="#3a3f3d" stroke="#3a3f3d" stroke-width="0.45" text-anchor="middle" textLength="17.4" lengthAdjust="spacingAndGlyphs">22</text><path d="M873.0,1439.2H905.6Q909.8,1439.2 909.8,1443.4V1459.0Q909.8,1461.0 907.6,1462.1L890.9,1468.8Q889.3,1469.4 887.7,1468.8L871.0,1462.1Q868.8,1461.0 868.8,1459.0V1443.4Q868.8,1439.2 873.0,1439.2Z" fill="#ffffff" stroke="#33423b" stroke-width="1.6"/><text x="889.3" y="1458.8" font-size="17.3" fill="#3a3f3d" stroke="#3a3f3d" stroke-width="0.45" text-anchor="middle" textLength="26" lengthAdjust="spacingAndGlyphs">251</text><path d="M730.7,1578.8H763.3Q767.5,1578.8 767.5,1583.0V1598.6Q767.5,1600.6 765.3,1601.7L748.6,1608.4Q747.0,1609.0 745.4,1608.4L728.7,1601.7Q726.5,1600.6 726.5,1598.6V1583.0Q726.5,1578.8 730.7,1578.8Z" fill="#ffffff" stroke="#33423b" stroke-width="1.6"/><text x="747.0" y="1598.4" font-size="17.3" fill="#3a3f3d" stroke="#3a3f3d" stroke-width="0.45" text-anchor="middle" textLength="26" lengthAdjust="spacingAndGlyphs">250</text><path d="M1167.2,1520.2H1186.4Q1190.6,1520.2 1190.6,1524.4V1540.0Q1190.6,1542.0 1188.4,1543.1L1178.4,1549.8Q1176.8,1550.4 1175.2,1549.8L1165.2,1543.1Q1163.0,1542.0 1163.0,1540.0V1524.4Q1163.0,1520.2 1167.2,1520.2Z" fill="#ffffff" stroke="#33423b" stroke-width="1.6"/><text x="1176.8" y="1539.8" font-size="17.3" fill="#3a3f3d" stroke="#3a3f3d" stroke-width="0.45" text-anchor="middle" textLength="8.7" lengthAdjust="spacingAndGlyphs">3</text><path d="M255.7,194.1H274.9Q279.1,194.1 279.1,198.3V213.9Q279.1,215.9 276.9,217.0L266.9,223.7Q265.3,224.3 263.7,223.7L253.7,217.0Q251.5,215.9 251.5,213.9V198.3Q251.5,194.1 255.7,194.1Z" fill="#ffffff" stroke="#33423b" stroke-width="1.6"/><text x="265.3" y="213.7" font-size="17.3" fill="#3a3f3d" stroke="#3a3f3d" stroke-width="0.45" text-anchor="middle" textLength="8.7" lengthAdjust="spacingAndGlyphs">7</text></g><g><circle cx="577.0" cy="233.2" r="4.2" fill="#fff" stroke="#333" stroke-width="1.9"/><text x="585.3" y="231.0" font-size="21.2" font-weight="normal" fill="#2c3033" stroke="#fff" stroke-width="4" stroke-linejoin="round" paint-order="stroke" text-anchor="start" stroke-opacity="0.9">Ciudad de</text><text x="585.3" y="251.7" font-size="21.2" font-weight="normal" fill="#2c3033" stroke="#fff" stroke-width="4" stroke-linejoin="round" paint-order="stroke" text-anchor="start" stroke-opacity="0.9">San Luis</text><circle cx="841.8" cy="249.8" r="3.1" fill="#fff" stroke="#5b6366" stroke-width="1.5"/><text x="847.9" y="257.8" font-size="21.2" font-weight="normal" fill="#3f4447" stroke="#fff" stroke-width="4" stroke-linejoin="round" paint-order="stroke" text-anchor="start" stroke-opacity="0.9">Sampacho</text><circle cx="720.7" cy="305.9" r="3.1" fill="#fff" stroke="#5b6366" stroke-width="1.5"/><text x="727.6" y="314.5" font-size="21.2" font-weight="normal" fill="#3f4447" stroke="#fff" stroke-width="4" stroke-linejoin="round" paint-order="stroke" text-anchor="start" stroke-opacity="0.9">Villa Mercedes</text><circle cx="895.7" cy="354.0" r="3.1" fill="#fff" stroke="#5b6366" stroke-width="1.5"/><text x="901.8" y="351.2" font-size="21.2" font-weight="normal" fill="#3f4447" stroke="#fff" stroke-width="4" stroke-linejoin="round" paint-order="stroke" text-anchor="start" stroke-opacity="0.9">Vicuña</text><text x="901.8" y="372.8" font-size="21.2" font-weight="normal" fill="#3f4447" stroke="#fff" stroke-width="4" stroke-linejoin="round" paint-order="stroke" text-anchor="start" stroke-opacity="0.9">Mackenna</text><circle cx="1059.3" cy="396.2" r="3.1" fill="#fff" stroke="#5b6366" stroke-width="1.5"/><text x="1065.7" y="404.6" font-size="21.2" font-weight="normal" fill="#3f4447" stroke="#fff" stroke-width="4" stroke-linejoin="round" paint-order="stroke" text-anchor="start" stroke-opacity="0.9">Laboulaye</text><circle cx="1074.5" cy="255.6" r="3.1" fill="#fff" stroke="#5b6366" stroke-width="1.5"/><text x="1080.9" y="264.2" font-size="21.2" font-weight="normal" fill="#3f4447" stroke="#fff" stroke-width="4" stroke-linejoin="round" paint-order="stroke" text-anchor="start" stroke-opacity="0.9">La Carlota</text><circle cx="898.4" cy="537.5" r="3.1" fill="#fff" stroke="#5b6366" stroke-width="1.5"/><text x="904.5" y="535.6" font-size="21.2" font-weight="normal" fill="#3f4447" stroke="#fff" stroke-width="4" stroke-linejoin="round" paint-order="stroke" text-anchor="start" stroke-opacity="0.9">Huinca</text><text x="904.5" y="556.3" font-size="21.2" font-weight="normal" fill="#3f4447" stroke="#fff" stroke-width="4" stroke-linejoin="round" paint-order="stroke" text-anchor="start" stroke-opacity="0.9">Renanco</text><circle cx="919.2" cy="576.7" r="3.1" fill="#fff" stroke="#5b6366" stroke-width="1.5"/><text x="925.2" y="584.8" font-size="21.2" font-weight="normal" fill="#3f4447" stroke="#fff" stroke-width="4" stroke-linejoin="round" paint-order="stroke" text-anchor="start" stroke-opacity="0.9">Realicó</text><circle cx="1120.7" cy="576.2" r="3.1" fill="#fff" stroke="#5b6366" stroke-width="1.5"/><text x="1127.0" y="584.2" font-size="21.2" font-weight="normal" fill="#3f4447" stroke="#fff" stroke-width="4" stroke-linejoin="round" paint-order="stroke" text-anchor="start" stroke-opacity="0.9">Gral. Villegas</text><circle cx="1293.1" cy="320.8" r="4.2" fill="#fff" stroke="#333" stroke-width="1.9"/><text x="1300.6" y="329.1" font-size="21.2" font-weight="normal" fill="#2c3033" stroke="#fff" stroke-width="4" stroke-linejoin="round" paint-order="stroke" text-anchor="start" stroke-opacity="0.9">Venado Tuerto</text><circle cx="1521.7" cy="349.5" r="4.2" fill="#fff" stroke="#333" stroke-width="1.9"/><text x="1529.5" y="358.1" font-size="21.2" font-weight="normal" fill="#2c3033" stroke="#fff" stroke-width="4" stroke-linejoin="round" paint-order="stroke" text-anchor="start" stroke-opacity="0.9">Pergamino</text><circle cx="1580.6" cy="239.5" r="4.2" fill="#fff" stroke="#333" stroke-width="1.9"/><text x="1588.9" y="237.1" font-size="21.2" font-weight="normal" fill="#2c3033" stroke="#fff" stroke-width="4" stroke-linejoin="round" paint-order="stroke" text-anchor="start" stroke-opacity="0.9">San Nicolás de</text><text x="1597.8" y="258.6" font-size="21.2" font-weight="normal" fill="#2c3033" stroke="#fff" stroke-width="4" stroke-linejoin="round" paint-order="stroke" text-anchor="start" stroke-opacity="0.9">los Arroyos</text><circle cx="1459.8" cy="487.5" r="4.2" fill="#fff" stroke="#333" stroke-width="1.9"/><text x="1467.3" y="495.8" font-size="21.2" font-weight="normal" fill="#2c3033" stroke="#fff" stroke-width="4" stroke-linejoin="round" paint-order="stroke" text-anchor="start" stroke-opacity="0.9">Junín</text><circle cx="1539.1" cy="498.0" r="3.1" fill="#fff" stroke="#5b6366" stroke-width="1.5"/><text x="1544.7" y="506.8" font-size="21.2" font-weight="normal" fill="#3f4447" stroke="#fff" stroke-width="4" stroke-linejoin="round" paint-order="stroke" text-anchor="start" stroke-opacity="0.9">Chacabuco</text><circle cx="1535.0" cy="591.9" r="3.1" fill="#fff" stroke="#5b6366" stroke-width="1.5"/><text x="1541.3" y="600.0" font-size="21.2" font-weight="normal" fill="#3f4447" stroke="#fff" stroke-width="4" stroke-linejoin="round" paint-order="stroke" text-anchor="start" stroke-opacity="0.9">Bragado</text><circle cx="2235.5" cy="389.3" r="3.1" fill="#fff" stroke="#5b6366" stroke-width="1.5"/><text x="2241.6" y="397.7" font-size="21.2" font-weight="normal" fill="#3f4447" stroke="#fff" stroke-width="4" stroke-linejoin="round" paint-order="stroke" text-anchor="start" stroke-opacity="0.9">Florida</text><circle cx="2240.8" cy="550.5" r="6" fill="#fff" stroke="#111" stroke-width="2.4"/><circle cx="2240.8" cy="550.5" r="2.6" fill="#111"/><text x="2250.7" y="560.6" font-size="27" font-weight="bold" fill="#23282d" stroke="#fff" stroke-width="5" stroke-linejoin="round" paint-order="stroke" text-anchor="start" stroke-opacity="0.9">Montevideo</text><text x="1893.9" y="499.4" font-size="26" font-weight="bold" fill="#23282d" stroke="#fff" stroke-width="5" stroke-linejoin="round" paint-order="stroke" text-anchor="start" stroke-opacity="0.9">Buenos Aires</text><circle cx="1951.4" cy="553.8" r="4.2" fill="#fff" stroke="#333" stroke-width="1.9"/><text x="1959.1" y="563.2" font-size="21.2" font-weight="normal" fill="#2c3033" stroke="#fff" stroke-width="4" stroke-linejoin="round" paint-order="stroke" text-anchor="start" stroke-opacity="0.9">La Plata</text><circle cx="2534.4" cy="219.9" r="3.1" fill="#fff" stroke="#5b6366" stroke-width="1.5"/><text x="2541.3" y="228.2" font-size="21.2" font-weight="normal" fill="#3f4447" stroke="#fff" stroke-width="4" stroke-linejoin="round" paint-order="stroke" text-anchor="start" stroke-opacity="0.9">Treinta y Tres</text><circle cx="2701.6" cy="276.8" r="3.1" fill="#fff" stroke="#5b6366" stroke-width="1.5"/><text x="2707.7" y="273.8" font-size="21.2" font-weight="normal" fill="#3f4447" stroke="#fff" stroke-width="4" stroke-linejoin="round" paint-order="stroke" text-anchor="start" stroke-opacity="0.9">Santa Vitória</text><text x="2707.7" y="295.4" font-size="21.2" font-weight="normal" fill="#3f4447" stroke="#fff" stroke-width="4" stroke-linejoin="round" paint-order="stroke" text-anchor="start" stroke-opacity="0.9">do Palmar</text><circle cx="2687.2" cy="311.1" r="3.1" fill="#fff" stroke="#5b6366" stroke-width="1.5"/><text x="2693.9" y="318.9" font-size="21.2" font-weight="normal" fill="#3f4447" stroke="#fff" stroke-width="4" stroke-linejoin="round" paint-order="stroke" text-anchor="start" stroke-opacity="0.9">Chuy</text><circle cx="2544.6" cy="465.9" r="3.1" fill="#fff" stroke="#5b6366" stroke-width="1.5"/><text x="2551.0" y="473.7" font-size="21.2" font-weight="normal" fill="#3f4447" stroke="#fff" stroke-width="4" stroke-linejoin="round" paint-order="stroke" text-anchor="start" stroke-opacity="0.9">Rocha</text><circle cx="2570.3" cy="501.3" r="3.1" fill="#fff" stroke="#5b6366" stroke-width="1.5"/><text x="2576.7" y="509.6" font-size="21.2" font-weight="normal" fill="#3f4447" stroke="#fff" stroke-width="4" stroke-linejoin="round" paint-order="stroke" text-anchor="start" stroke-opacity="0.9">La Paloma</text><circle cx="2444.6" cy="556.0" r="3.1" fill="#fff" stroke="#5b6366" stroke-width="1.5"/><text x="2450.6" y="564.6" font-size="21.2" font-weight="normal" fill="#3f4447" stroke="#fff" stroke-width="4" stroke-linejoin="round" paint-order="stroke" text-anchor="start" stroke-opacity="0.9">Punta del Este</text><text x="601.3" y="825.1" font-size="21.2" font-weight="normal" fill="#3f4447" stroke="#fff" stroke-width="4" stroke-linejoin="round" paint-order="stroke" text-anchor="end" stroke-opacity="0.9">Santa Isabel</text><circle cx="724.9" cy="814.8" r="3.1" fill="#fff" stroke="#5b6366" stroke-width="1.5"/><text x="731.2" y="823.2" font-size="21.2" font-weight="normal" fill="#3f4447" stroke="#fff" stroke-width="4" stroke-linejoin="round" paint-order="stroke" text-anchor="start" stroke-opacity="0.9">Victorica</text><circle cx="999.0" cy="701.5" r="4.2" fill="#fff" stroke="#333" stroke-width="1.9"/><text x="1007.3" y="709.6" font-size="21.2" font-weight="normal" fill="#2c3033" stroke="#fff" stroke-width="4" stroke-linejoin="round" paint-order="stroke" text-anchor="start" stroke-opacity="0.9">General Pico</text><circle cx="911.1" cy="753.5" r="3.1" fill="#fff" stroke="#5b6366" stroke-width="1.5"/><text x="917.0" y="751.3" font-size="21.2" font-weight="normal" fill="#3f4447" stroke="#fff" stroke-width="4" stroke-linejoin="round" paint-order="stroke" text-anchor="start" stroke-opacity="0.9">Eduardo</text><text x="917.0" y="772.6" font-size="21.2" font-weight="normal" fill="#3f4447" stroke="#fff" stroke-width="4" stroke-linejoin="round" paint-order="stroke" text-anchor="start" stroke-opacity="0.9">Castex</text><circle cx="912.3" cy="896.9" r="4.2" fill="#fff" stroke="#333" stroke-width="1.9"/><text x="919.7" y="894.2" font-size="21.2" font-weight="normal" fill="#2c3033" stroke="#fff" stroke-width="4" stroke-linejoin="round" paint-order="stroke" text-anchor="start" stroke-opacity="0.9">Ciudad de</text><text x="919.7" y="915.5" font-size="21.2" font-weight="normal" fill="#2c3033" stroke="#fff" stroke-width="4" stroke-linejoin="round" paint-order="stroke" text-anchor="start" stroke-opacity="0.9">Santa Rosa</text><circle cx="1167.4" cy="765.6" r="3.1" fill="#fff" stroke="#5b6366" stroke-width="1.5"/><text x="1174.0" y="762.9" font-size="21.2" font-weight="normal" fill="#3f4447" stroke="#fff" stroke-width="4" stroke-linejoin="round" paint-order="stroke" text-anchor="start" stroke-opacity="0.9">Trenque</text><text x="1174.0" y="784.2" font-size="21.2" font-weight="normal" fill="#3f4447" stroke="#fff" stroke-width="4" stroke-linejoin="round" paint-order="stroke" text-anchor="start" stroke-opacity="0.9">Lauquen</text><circle cx="1304.7" cy="731.9" r="3.1" fill="#fff" stroke="#5b6366" stroke-width="1.5"/><text x="1311.1" y="740.2" font-size="21.2" font-weight="normal" fill="#3f4447" stroke="#fff" stroke-width="4" stroke-linejoin="round" paint-order="stroke" text-anchor="start" stroke-opacity="0.9">Pehuajó</text><circle cx="1431.3" cy="818.4" r="3.1" fill="#fff" stroke="#5b6366" stroke-width="1.5"/><text x="1437.4" y="816.2" font-size="21.2" font-weight="normal" fill="#3f4447" stroke="#fff" stroke-width="4" stroke-linejoin="round" paint-order="stroke" text-anchor="start" stroke-opacity="0.9">San Carlos</text><text x="1437.4" y="837.5" font-size="21.2" font-weight="normal" fill="#3f4447" stroke="#fff" stroke-width="4" stroke-linejoin="round" paint-order="stroke" text-anchor="start" stroke-opacity="0.9">de Bolivar</text><circle cx="1328.8" cy="892.8" r="3.1" fill="#fff" stroke="#5b6366" stroke-width="1.5"/><text x="1335.4" y="901.7" font-size="21.2" font-weight="normal" fill="#3f4447" stroke="#fff" stroke-width="4" stroke-linejoin="round" paint-order="stroke" text-anchor="start" stroke-opacity="0.9">Daireaux</text><circle cx="1638.6" cy="929.3" r="3.1" fill="#fff" stroke="#5b6366" stroke-width="1.5"/><text x="1645.0" y="937.0" font-size="21.2" font-weight="normal" fill="#3f4447" stroke="#fff" stroke-width="4" stroke-linejoin="round" paint-order="stroke" text-anchor="start" stroke-opacity="0.9">Azul</text><circle cx="1562.1" cy="953.0" r="4.2" fill="#fff" stroke="#333" stroke-width="1.9"/><text x="1570.1" y="961.4" font-size="21.2" font-weight="normal" fill="#2c3033" stroke="#fff" stroke-width="4" stroke-linejoin="round" paint-order="stroke" text-anchor="start" stroke-opacity="0.9">Olavarría</text><circle cx="2160.9" cy="917.1" r="3.1" fill="#fff" stroke="#5b6366" stroke-width="1.5"/><text x="2167.0" y="925.4" font-size="21.2" font-weight="normal" fill="#3f4447" stroke="#fff" stroke-width="4" stroke-linejoin="round" paint-order="stroke" text-anchor="start" stroke-opacity="0.9">Mar de Ajó</text><circle cx="2130.5" cy="998.6" r="3.1" fill="#fff" stroke="#5b6366" stroke-width="1.5"/><text x="2136.6" y="1006.7" font-size="21.2" font-weight="normal" fill="#3f4447" stroke="#fff" stroke-width="4" stroke-linejoin="round" paint-order="stroke" text-anchor="start" stroke-opacity="0.9">Pinamar</text><circle cx="176.1" cy="1254.1" r="3.1" fill="#fff" stroke="#5b6366" stroke-width="1.5"/><text x="182.4" y="1262.5" font-size="21.2" font-weight="normal" fill="#3f4447" stroke="#fff" stroke-width="4" stroke-linejoin="round" paint-order="stroke" text-anchor="start" stroke-opacity="0.9">Añelo</text><circle cx="281.1" cy="1354.2" r="3.1" fill="#fff" stroke="#5b6366" stroke-width="1.5"/><text x="287.5" y="1362.5" font-size="21.2" font-weight="normal" fill="#3f4447" stroke="#fff" stroke-width="4" stroke-linejoin="round" paint-order="stroke" text-anchor="start" stroke-opacity="0.9">Centenario</text><circle cx="294.9" cy="1379.9" r="3.1" fill="#fff" stroke="#5b6366" stroke-width="1.5"/><text x="301.3" y="1388.5" font-size="21.2" font-weight="normal" fill="#3f4447" stroke="#fff" stroke-width="4" stroke-linejoin="round" paint-order="stroke" text-anchor="start" stroke-opacity="0.9">Neuquén</text><circle cx="103.1" cy="1377.7" r="3.1" fill="#fff" stroke="#5b6366" stroke-width="1.5"/><text x="109.7" y="1386.0" font-size="21.2" font-weight="normal" fill="#3f4447" stroke="#fff" stroke-width="4" stroke-linejoin="round" paint-order="stroke" text-anchor="start" stroke-opacity="0.9">Cutral Co</text><text x="345.5" y="1166.3" font-size="21.2" font-weight="normal" fill="#3f4447" stroke="#fff" stroke-width="4" stroke-linejoin="round" paint-order="stroke" text-anchor="start" stroke-opacity="0.9">Cather</text><circle cx="860.3" cy="1052.9" r="3.1" fill="#fff" stroke="#5b6366" stroke-width="1.5"/><text x="866.7" y="1061.3" font-size="21.2" font-weight="normal" fill="#3f4447" stroke="#fff" stroke-width="4" stroke-linejoin="round" paint-order="stroke" text-anchor="start" stroke-opacity="0.9">Gral. Acha</text><circle cx="1162.9" cy="1011.7" r="3.1" fill="#fff" stroke="#5b6366" stroke-width="1.5"/><text x="1169.0" y="1019.8" font-size="21.2" font-weight="normal" fill="#3f4447" stroke="#fff" stroke-width="4" stroke-linejoin="round" paint-order="stroke" text-anchor="start" stroke-opacity="0.9">Carhué</text><circle cx="1299.2" cy="1069.2" r="3.1" fill="#fff" stroke="#5b6366" stroke-width="1.5"/><text x="1305.0" y="1066.2" font-size="21.2" font-weight="normal" fill="#3f4447" stroke="#fff" stroke-width="4" stroke-linejoin="round" paint-order="stroke" text-anchor="start" stroke-opacity="0.9">Coronel</text><text x="1305.0" y="1087.8" font-size="21.2" font-weight="normal" fill="#3f4447" stroke="#fff" stroke-width="4" stroke-linejoin="round" paint-order="stroke" text-anchor="start" stroke-opacity="0.9">Suarez</text><circle cx="1221.3" cy="1098.0" r="3.1" fill="#fff" stroke="#5b6366" stroke-width="1.5"/><text x="1227.6" y="1106.9" font-size="21.2" font-weight="normal" fill="#3f4447" stroke="#fff" stroke-width="4" stroke-linejoin="round" paint-order="stroke" text-anchor="start" stroke-opacity="0.9">Pigüé</text><circle cx="1394.6" cy="1178.1" r="3.1" fill="#fff" stroke="#5b6366" stroke-width="1.5"/><text x="1400.9" y="1175.1" font-size="21.2" font-weight="normal" fill="#3f4447" stroke="#fff" stroke-width="4" stroke-linejoin="round" paint-order="stroke" text-anchor="start" stroke-opacity="0.9">Coronel</text><text x="1400.9" y="1196.1" font-size="21.2" font-weight="normal" fill="#3f4447" stroke="#fff" stroke-width="4" stroke-linejoin="round" paint-order="stroke" text-anchor="start" stroke-opacity="0.9">Pringles</text><circle cx="1321.0" cy="1209.9" r="3.1" fill="#fff" stroke="#5b6366" stroke-width="1.5"/><text x="1315.2" y="1208.3" font-size="21.2" font-weight="normal" fill="#3f4447" stroke="#fff" stroke-width="4" stroke-linejoin="round" paint-order="stroke" text-anchor="end" stroke-opacity="0.9">Sierra de</text><text x="1315.2" y="1229.9" font-size="21.2" font-weight="normal" fill="#3f4447" stroke="#fff" stroke-width="4" stroke-linejoin="round" paint-order="stroke" text-anchor="end" stroke-opacity="0.9">la Ventana</text><circle cx="1756.6" cy="1042.7" r="4.2" fill="#fff" stroke="#333" stroke-width="1.9"/><text x="1764.9" y="1050.7" font-size="21.2" font-weight="normal" fill="#2c3033" stroke="#fff" stroke-width="4" stroke-linejoin="round" paint-order="stroke" text-anchor="start" stroke-opacity="0.9">Tandil</text><circle cx="1901.2" cy="1149.1" r="3.1" fill="#fff" stroke="#5b6366" stroke-width="1.5"/><text x="1894.3" y="1157.2" font-size="21.2" font-weight="normal" fill="#3f4447" stroke="#fff" stroke-width="4" stroke-linejoin="round" paint-order="stroke" text-anchor="end" stroke-opacity="0.9">Balcarce</text><circle cx="1570.1" cy="1259.7" r="3.1" fill="#fff" stroke="#5b6366" stroke-width="1.5"/><text x="1576.4" y="1268.0" font-size="21.2" font-weight="normal" fill="#3f4447" stroke="#fff" stroke-width="4" stroke-linejoin="round" paint-order="stroke" text-anchor="start" stroke-opacity="0.9">Tres Arroyos</text><circle cx="1822.4" cy="1296.4" r="4.2" fill="#fff" stroke="#333" stroke-width="1.9"/><text x="1830.2" y="1305.0" font-size="21.2" font-weight="normal" fill="#2c3033" stroke="#fff" stroke-width="4" stroke-linejoin="round" paint-order="stroke" text-anchor="start" stroke-opacity="0.9">Necochea</text><circle cx="1244.8" cy="1332.1" r="4.2" fill="#fff" stroke="#333" stroke-width="1.9"/><text x="1252.5" y="1339.9" font-size="22" font-weight="bold" fill="#2a2e33" stroke="#fff" stroke-width="4.5" stroke-linejoin="round" paint-order="stroke" text-anchor="start" stroke-opacity="0.9">Bahía Blanca</text><circle cx="1276.5" cy="1366.1" r="3.1" fill="#fff" stroke="#5b6366" stroke-width="1.5"/><text x="1282.9" y="1374.4" font-size="21.2" font-weight="normal" fill="#3f4447" stroke="#fff" stroke-width="4" stroke-linejoin="round" paint-order="stroke" text-anchor="start" stroke-opacity="0.9">Punta Alta</text><circle cx="1404.5" cy="1388.2" r="3.1" fill="#fff" stroke="#5b6366" stroke-width="1.5"/><text x="1410.6" y="1386.0" font-size="21.2" font-weight="normal" fill="#3f4447" stroke="#fff" stroke-width="4" stroke-linejoin="round" paint-order="stroke" text-anchor="start" stroke-opacity="0.9">Monte</text><text x="1410.6" y="1407.3" font-size="21.2" font-weight="normal" fill="#3f4447" stroke="#fff" stroke-width="4" stroke-linejoin="round" paint-order="stroke" text-anchor="start" stroke-opacity="0.9">Hermoso</text><circle cx="1558.5" cy="1368.8" r="3.1" fill="#fff" stroke="#5b6366" stroke-width="1.5"/><text x="1552.9" y="1376.9" font-size="21.2" font-weight="normal" fill="#3f4447" stroke="#fff" stroke-width="4" stroke-linejoin="round" paint-order="stroke" text-anchor="end" stroke-opacity="0.9">Reta</text><circle cx="1603.5" cy="1360.6" r="3.1" fill="#fff" stroke="#5b6366" stroke-width="1.5"/><text x="1609.6" y="1368.9" font-size="21.2" font-weight="normal" fill="#3f4447" stroke="#fff" stroke-width="4" stroke-linejoin="round" paint-order="stroke" text-anchor="start" stroke-opacity="0.9">Claromeco</text><circle cx="2112.5" cy="1028.3" r="3.1" fill="#fff" stroke="#5b6366" stroke-width="1.5"/><text x="2118.6" y="1036.4" font-size="21.2" font-weight="normal" fill="#3f4447" stroke="#fff" stroke-width="4" stroke-linejoin="round" paint-order="stroke" text-anchor="start" stroke-opacity="0.9">Villa Gesell</text><circle cx="2024.9" cy="1147.2" r="3.1" fill="#fff" stroke="#5b6366" stroke-width="1.5"/><text x="2019.1" y="1144.7" font-size="21.2" font-weight="normal" fill="#3f4447" stroke="#fff" stroke-width="4" stroke-linejoin="round" paint-order="stroke" text-anchor="end" stroke-opacity="0.9">Santa Clara</text><text x="2019.1" y="1166.3" font-size="21.2" font-weight="normal" fill="#3f4447" stroke="#fff" stroke-width="4" stroke-linejoin="round" paint-order="stroke" text-anchor="end" stroke-opacity="0.9">del Mar</text><circle cx="2018.5" cy="1181.7" r="4.2" fill="#fff" stroke="#333" stroke-width="1.9"/><text x="2026.5" y="1190.6" font-size="22" font-weight="bold" fill="#2a2e33" stroke="#fff" stroke-width="4.5" stroke-linejoin="round" paint-order="stroke" text-anchor="start" stroke-opacity="0.9">Mar del Plata</text><circle cx="2000.6" cy="1217.1" r="3.1" fill="#fff" stroke="#5b6366" stroke-width="1.5"/><text x="2006.6" y="1225.2" font-size="21.2" font-weight="normal" fill="#3f4447" stroke="#fff" stroke-width="4" stroke-linejoin="round" paint-order="stroke" text-anchor="start" stroke-opacity="0.9">Chapadmalal</text><circle cx="1969.6" cy="1237.0" r="3.1" fill="#fff" stroke="#5b6366" stroke-width="1.5"/><text x="1963.8" y="1245.6" font-size="21.2" font-weight="normal" fill="#3f4447" stroke="#fff" stroke-width="4" stroke-linejoin="round" paint-order="stroke" text-anchor="end" stroke-opacity="0.9">Miramar</text><circle cx="453.8" cy="1411.9" r="3.1" fill="#fff" stroke="#5b6366" stroke-width="1.5"/><text x="460.2" y="1420.2" font-size="21.2" font-weight="normal" fill="#3f4447" stroke="#fff" stroke-width="4" stroke-linejoin="round" paint-order="stroke" text-anchor="start" stroke-opacity="0.9">Villa Regina</text><circle cx="687.5" cy="1451.2" r="3.1" fill="#fff" stroke="#5b6366" stroke-width="1.5"/><text x="693.9" y="1459.5" font-size="21.2" font-weight="normal" fill="#3f4447" stroke="#fff" stroke-width="4" stroke-linejoin="round" paint-order="stroke" text-anchor="start" stroke-opacity="0.9">Choele-choel</text><circle cx="680.6" cy="1480.5" r="3.1" fill="#fff" stroke="#5b6366" stroke-width="1.5"/><text x="687.0" y="1489.1" font-size="21.2" font-weight="normal" fill="#3f4447" stroke="#fff" stroke-width="4" stroke-linejoin="round" paint-order="stroke" text-anchor="start" stroke-opacity="0.9">Lamarque</text><circle cx="944.0" cy="1389.3" r="3.1" fill="#fff" stroke="#5b6366" stroke-width="1.5"/><text x="950.1" y="1397.9" font-size="21.2" font-weight="normal" fill="#3f4447" stroke="#fff" stroke-width="4" stroke-linejoin="round" paint-order="stroke" text-anchor="start" stroke-opacity="0.9">Río Colorado</text><circle cx="1174.6" cy="1497.0" r="3.1" fill="#fff" stroke="#5b6366" stroke-width="1.5"/><text x="1180.9" y="1505.7" font-size="21.2" font-weight="normal" fill="#3f4447" stroke="#fff" stroke-width="4" stroke-linejoin="round" paint-order="stroke" text-anchor="start" stroke-opacity="0.9">Pedro Luro</text><circle cx="1185.6" cy="1584.7" r="3.1" fill="#fff" stroke="#5b6366" stroke-width="1.5"/><text x="1192.5" y="1593.0" font-size="21.2" font-weight="normal" fill="#3f4447" stroke="#fff" stroke-width="4" stroke-linejoin="round" paint-order="stroke" text-anchor="start" stroke-opacity="0.9">Villalonga</text><text x="911.0" y="204.8" font-size="21.2" font-weight="normal" fill="#2c3033" stroke="#fff" stroke-width="4" stroke-linejoin="round" paint-order="stroke" text-anchor="start" stroke-opacity="0.9">Río Cuarto</text><circle cx="228.0" cy="211.9" r="3.1" fill="#fff" stroke="#5b6366" stroke-width="1.5"/><text x="221.7" y="219.9" font-size="21.2" font-weight="normal" fill="#3f4447" stroke="#fff" stroke-width="4" stroke-linejoin="round" paint-order="stroke" text-anchor="end" stroke-opacity="0.9">Rivadavia</text></g><g><use href="#mk" x="1562.6" y="220.7"/><use href="#mk" x="1597.2" y="251.1"/><use href="#mk" x="1653.0" y="288.4"/><use href="#mk" x="1678.7" y="314.2"/><use href="#mk" x="1503.2" y="331.8"/><use href="#mk" x="1417.5" y="332.1"/><use href="#mk" x="1580.6" y="364.5"/><use href="#mk" x="1757.5" y="371.4"/><use href="#mk" x="1768.5" y="384.6"/><use href="#mk" x="1631.2" y="385.2"/><use href="#mk" x="1385.7" y="390.7"/><use href="#mk" x="1476.9" y="391.3"/><use href="#mk" x="1682.9" y="400.4"/><use href="#mk" x="1744.7" y="409.8"/><use href="#mk" x="1555.7" y="410.6"/><use href="#mk" x="1797.3" y="418.5"/><use href="#mk" x="1625.6" y="426.6"/><use href="#mk" x="1831.4" y="430.8"/><use href="#mk" x="1687.0" y="440.5"/><use href="#mk" x="1838.8" y="442.0"/><use href="#mk" x="1775.7" y="444.4"/><use href="#mk" x="1799.2" y="451.9"/><use href="#mk" x="1368.6" y="455.7"/><use href="#mk" x="1847.5" y="456.8"/><use href="#mk" x="1806.6" y="456.8"/><use href="#mk" x="1739.8" y="463.0"/><use href="#mk" x="1817.8" y="464.2"/><use href="#mk" x="1838.8" y="466.7"/><use href="#mk" x="1444.6" y="469.5"/><use href="#mk" x="1768.3" y="470.4"/><use href="#mk" x="1794.2" y="476.6"/><use href="#mk" x="1863.5" y="479.1"/><use href="#mk" x="1519.8" y="479.2"/><use href="#mk" x="1690.3" y="481.9"/><use href="#mk" x="1806.6" y="484.0"/><use href="#mk" x="1832.6" y="485.3"/><use href="#mk" x="1882.1" y="490.2"/><use href="#mk" x="1856.1" y="495.2"/><use href="#mk" x="1287.6" y="504.0"/><use href="#mk" x="1648.3" y="505.4"/><use href="#mk" x="1788.1" y="506.3"/><use href="#mk" x="1895.7" y="507.6"/><use href="#mk" x="1868.5" y="508.8"/><use href="#mk" x="1195.6" y="515.1"/><use href="#mk" x="1942.7" y="519.9"/><use href="#mk" x="1840.0" y="521.2"/><use href="#mk" x="1346.5" y="524.8"/><use href="#mk" x="1593.6" y="530.3"/><use href="#mk" x="1861.1" y="534.8"/><use href="#mk" x="1932.8" y="534.8"/><use href="#mk" x="1769.5" y="536.0"/><use href="#mk" x="1426.6" y="551.0"/><use href="#mk" x="1714.6" y="552.4"/><use href="#mk" x="1551.0" y="556.6"/><use href="#mk" x="1856.1" y="557.1"/><use href="#mk" x="1102.7" y="559.3"/><use href="#mk" x="1801.7" y="559.5"/><use href="#mk" x="2003.9" y="569.0"/><use href="#mk" x="1516.5" y="574.5"/><use href="#mk" x="1888.8" y="587.0"/><use href="#mk" x="1745.0" y="589.7"/><use href="#mk" x="2033.7" y="629.1"/><use href="#mk" x="1200.3" y="629.6"/><use href="#mk" x="1706.3" y="631.9"/><use href="#mk" x="1569.0" y="637.9"/><use href="#mk" x="1793.8" y="639.3"/><use href="#mk" x="1452.6" y="640.1"/><use href="#mk" x="1110.4" y="649.0"/><use href="#mk" x="1856.4" y="651.8"/><use href="#mk" x="1922.5" y="667.0"/><use href="#mk" x="1373.8" y="675.8"/><use href="#mk" x="1632.5" y="679.4"/><use href="#mk" x="1843.7" y="704.8"/><use href="#mk" x="1286.8" y="713.9"/><use href="#mk" x="1941.3" y="726.4"/><use href="#mk" x="1150.0" y="748.5"/><use href="#mk" x="1744.5" y="755.4"/><use href="#mk" x="1900.7" y="755.4"/><use href="#mk" x="1595.0" y="756.8"/><use href="#mk" x="1949.6" y="770.6"/><use href="#mk" x="1326.3" y="798.8"/><use href="#mk" x="1413.4" y="799.6"/><use href="#mk" x="1079.5" y="806.5"/><use href="#mk" x="1977.6" y="816.2"/><use href="#mk" x="1593.0" y="824.5"/><use href="#mk" x="2098.7" y="834.7"/><use href="#mk" x="1127.8" y="845.2"/><use href="#mk" x="2036.5" y="856.8"/><use href="#mk" x="1311.1" y="874.2"/><use href="#mk" x="1959.1" y="885.3"/><use href="#mk" x="2140.7" y="902.7"/><use href="#mk" x="1113.2" y="905.5"/><use href="#mk" x="1621.5" y="910.2"/><use href="#mk" x="1746.4" y="910.2"/><use href="#mk" x="1944.0" y="928.1"/><use href="#mk" x="1546.0" y="935.6"/><use href="#mk" x="2066.9" y="957.2"/><use href="#mk" x="1201.1" y="958.6"/><use href="#mk" x="2111.7" y="979.3"/><use href="#mk" x="1845.9" y="987.6"/><use href="#mk" x="1146.9" y="993.1"/><use href="#mk" x="1391.3" y="1008.1"/><use href="#mk" x="2093.7" y="1010.9"/><use href="#mk" x="1738.1" y="1024.7"/><use href="#mk" x="1280.7" y="1049.6"/><use href="#mk" x="1144.2" y="1068.1"/><use href="#mk" x="1465.9" y="1069.0"/><use href="#mk" x="1629.0" y="1095.2"/><use href="#mk" x="2019.6" y="1109.6"/><use href="#mk" x="1211.9" y="1113.2"/><use href="#mk" x="1883.2" y="1131.1"/><use href="#mk" x="1376.1" y="1159.6"/><use href="#mk" x="2000.3" y="1164.3"/><use href="#mk" x="1580.6" y="1169.8"/><use href="#mk" x="1233.4" y="1183.7"/><use href="#mk" x="1909.4" y="1196.1"/><use href="#mk" x="1797.0" y="1197.5"/><use href="#mk" x="1662.1" y="1234.8"/><use href="#mk" x="1551.6" y="1241.7"/><use href="#mk" x="1804.5" y="1279.0"/><use href="#mk" x="1226.0" y="1313.0"/><use href="#mk" x="1386.3" y="1313.6"/><use href="#mk" x="1295.1" y="1345.3"/><use href="#mk" x="1385.7" y="1370.2"/><use href="#mk" x="1164.9" y="1379.9"/></g></svg></div>
<div style="position:absolute;left:0;top:0;width:2847px;height:204px;background:#fff;box-shadow:0 1px 5px rgba(0,0,0,.13);z-index:5"><div style="position:absolute;left:0;top:0;width:2847px;height:2px;background:#1b1b1b"></div><span style="position:absolute;left:377.6px;top:78.2px;font:normal 26.6px/1 'Liberation Sans',sans-serif;line-height:normal;color:#1d2b4f;white-space:nowrap;transform-origin:0 0;transform:scaleX(1.0235);-webkit-text-stroke:0.5px #1d2b4f;">Provincia de Buenos Aires</span><span style="position:absolute;left:374.0px;top:100.9px;font:normal 71px/1 'Liberation Serif',serif;line-height:normal;color:#16264d;white-space:nowrap;transform-origin:0 0;transform:scaleX(1.0264);-webkit-text-stroke:1.5px #16264d;">Defensoría</span><span style="position:absolute;left:944.6px;top:77.4px;font:normal 32.4px/1 'Liberation Sans',sans-serif;line-height:normal;color:#1c1c1c;white-space:nowrap;transform-origin:0 0;transform:scaleX(0.9101);-webkit-text-stroke:0.45px #1c1c1c;">Institucional</span><span style="position:absolute;left:1161.8px;top:77.4px;font:normal 32.4px/1 'Liberation Sans',sans-serif;line-height:normal;color:#1c1c1c;white-space:nowrap;transform-origin:0 0;transform:scaleX(0.8323);-webkit-text-stroke:0.45px #1c1c1c;">¿Qué reclamar?</span><span style="position:absolute;left:1418.9px;top:77.4px;font:normal 32.4px/1 'Liberation Sans',sans-serif;line-height:normal;color:#14284b;white-space:nowrap;transform-origin:0 0;transform:scaleX(0.8639);-webkit-text-stroke:0.45px #14284b;">Delegaciones</span><span style="position:absolute;left:1649.8px;top:77.4px;font:normal 32.4px/1 'Liberation Sans',sans-serif;line-height:normal;color:#1c1c1c;white-space:nowrap;transform-origin:0 0;transform:scaleX(0.8543);-webkit-text-stroke:0.45px #1c1c1c;">Prensa</span><span style="position:absolute;left:1798.0px;top:77.4px;font:normal 32.4px/1 'Liberation Sans',sans-serif;line-height:normal;color:#1c1c1c;white-space:nowrap;transform-origin:0 0;transform:scaleX(0.8998);-webkit-text-stroke:0.45px #1c1c1c;">Informes</span><svg style="position:absolute;left:714px;top:19px" width="150" height="150" viewBox="0 0 150 150">
<defs><clipPath id="lc"><path d="M2.1,146.6V70.3C2.5,58 5.1,47 17.5,26.4C24,17 35.3,12.6 56,5.1C66,2.6 76,2 84.8,2.3C64,9 48,26 47,50L47,116.4C50,110 56,104.7 69.7,99.9L97.2,99.2C112,97.5 124.7,91 135.7,80C140,74 143,67 143.9,60.7C146.5,66 146.5,72 146,77.2C145,88 144,95 141.2,102C138,110 134,116 128.8,121.2C123,127 117,131.5 110.9,135C104,139 97,142 90.3,143.9C83,146 76,146.6 69.7,146.6Z"/></clipPath></defs>
<g clip-path="url(#lc)">
<rect x="0" y="0" width="150" height="150" fill="#d9348f"/>
<polygon points="0,0 90,0 17.8,55.2 2.1,64.8 0,66" fill="#8e2b8c"/>
<polygon points="0,66 17.8,55.2 17.8,80 0,95" fill="#2f6fae"/>
<polygon points="0,95 17.8,80 17.8,107.5 0,121" fill="#4a97d3"/>
<polygon points="0,121 17.8,107.5 17.8,130.1 0,148.6" fill="#4aae4c"/>
<polygon points="0,148.6 17.8,130.1 42.2,130.1 29.8,146.6 29.8,150 0,150" fill="#f6c63a"/>
<polygon points="29.8,146.6 42.2,130.1 67,130.1 54.6,146.6 54.6,150 29.8,150" fill="#ef8d2d"/>
<polygon points="54.6,146.6 67,130.1 93.1,130.1 83.5,146.6 83.5,150 54.6,150" fill="#e0393a"/>
<path d="M84.8,0L18,0L25.5,21C22,27 20,33 18.9,38.7C18,44 17.8,50 17.8,55.2V130.1H97.2C107,128.5 117,125.5 124.7,121.2C131,116 135.5,111 138.4,104.7C142,96 144.5,86 145.3,77.2C145.8,70 145.5,65 143.9,60.7L150,40V0H84Z" fill="#1a2b52"/>
</g>
<path d="M67.8,79.6V51.5A28.1,28.1 0 1 1 95.9,79.6Z" fill="#57a7df"/>
</svg><svg style="position:absolute;left:2350px;top:82px" width="36" height="36" viewBox="0 0 36 36"><circle cx="14.9" cy="13.7" r="8.9" fill="none" stroke="#14284b" stroke-width="3.8"/><path d="M21.2,20.2L30.6,29.6" stroke="#14284b" stroke-width="5.8" stroke-linecap="butt"/></svg><div style="position:absolute;left:2405px;top:65px;width:1px;height:55px;background:#d9d9d9"></div><svg style="position:absolute;left:2426px;top:86px" width="33" height="27" viewBox="0 0 33 27"><rect x="3.6" y="3.6" width="25.6" height="19.8" rx="3.2" fill="none" stroke="#14284b" stroke-width="3"/><path d="M5.4,5.8L14.5,13.3Q16.4,14.6 18.3,13.3L27.4,5.8" fill="none" stroke="#14284b" stroke-width="3" stroke-linejoin="round"/></svg><svg style="position:absolute;left:1400px;top:132px" width="56" height="50" viewBox="0 0 56 50"><path d="M8,24L28,6L48,24M8,42L28,24L48,42" fill="none" stroke="#f7f7f7" stroke-width="5"/></svg></div>
<div style="position:absolute;left:18px;top:223.5px;width:312px;height:71px;background:#fff;box-shadow:0 2px 8px rgba(0,0,0,.3);border-radius:3px;z-index:3"></div><div style="position:absolute;left:159px;top:223.5px;width:1.5px;height:71px;background:#e6e6e6;z-index:4"></div><div style="position:absolute;left:0;top:0;z-index:4"><span style="position:absolute;left:49.2px;top:241.6px;font:bold 31.4px/1 'Liberation Sans',sans-serif;line-height:normal;color:#000;white-space:nowrap;transform-origin:0 0;transform:scaleX(0.9981);">Mapa</span><span style="position:absolute;left:191.6px;top:240.8px;font:normal 32.3px/1 'Liberation Sans',sans-serif;line-height:normal;color:#565656;white-space:nowrap;transform-origin:0 0;transform:scaleX(1.0006);">Satélite</span></div><div style="position:absolute;left:0;top:295px;width:531px;height:867px;background:#f6f6f6;box-shadow:2px 2px 14px rgba(0,0,0,.35);z-index:4"><svg style="position:absolute;left:414px;top:10px" width="36" height="36" viewBox="0 0 36 36"><circle cx="18" cy="18" r="17.3" fill="#2e6fbe"/><path d="M22.5,8.5L12.5,18L22.5,27.5" fill="none" stroke="#fff" stroke-width="4.6" stroke-linecap="round" stroke-linejoin="round"/></svg><div style="position:absolute;left:9.5px;top:54.0px;width:465px;height:41.6px;background:#f1f1f1;border:1px solid #d6d6d6;box-shadow:0 1px 3px rgba(0,0,0,.12)"><svg style="position:absolute;left:9px;top:7.3px" width="22" height="22" viewBox="0 0 22 22"><rect x="1.2" y="1.2" width="19.6" height="19.6" rx="4" fill="#fff" stroke="#767676" stroke-width="1.7"/></svg><span style="position:absolute;left:38.5px;top:7.4px;font:24.4px 'Liberation Sans',sans-serif;line-height:normal;color:#1f1f1f;white-space:nowrap;transform-origin:0 0;transform:scaleX(0.905);-webkit-text-stroke:0.35px #1f1f1f">Basurales (74)</span></div><div style="position:absolute;left:9.5px;top:114.7px;width:465px;height:40.8px;background:#f1f1f1;border:1px solid #d6d6d6;box-shadow:0 1px 3px rgba(0,0,0,.12)"><svg style="position:absolute;left:9px;top:7.3px" width="22" height="22" viewBox="0 0 22 22"><rect x="1.2" y="1.2" width="19.6" height="19.6" rx="4" fill="#fff" stroke="#767676" stroke-width="1.7"/></svg><span style="position:absolute;left:38.5px;top:7.4px;font:24.4px 'Liberation Sans',sans-serif;line-height:normal;color:#1f1f1f;white-space:nowrap;transform-origin:0 0;transform:scaleX(0.905);-webkit-text-stroke:0.35px #1f1f1f">Centros de mediación (15)</span></div><div style="position:absolute;left:9.5px;top:175.0px;width:465px;height:401.5px;background:#f1f1f1;border:1px solid #d6d6d6;box-shadow:0 1px 3px rgba(0,0,0,.12)"><svg style="position:absolute;left:9px;top:7.3px" width="22" height="22" viewBox="0 0 22 22"><rect x="0.5" y="0.5" width="21" height="21" rx="3.5" fill="#3b78f0"/><path d="M4.5,11.5L9,16L17.5,5.5" fill="none" stroke="#fff" stroke-width="3.2" stroke-linecap="round" stroke-linejoin="round"/></svg><span style="position:absolute;left:38.5px;top:7.4px;font:24.4px 'Liberation Sans',sans-serif;line-height:normal;color:#1f1f1f;white-space:nowrap;transform-origin:0 0;transform:scaleX(0.905);-webkit-text-stroke:0.35px #1f1f1f">Protección Animal (135)</span><span style="position:absolute;left:72px;top:44.9px;font:25px 'Liberation Sans',sans-serif;line-height:normal;color:#3d6fa5;white-space:nowrap;transform-origin:0 0;transform:scaleX(0.875);-webkit-text-stroke:0.35px #3d6fa5">25 de Mayo</span><span style="position:absolute;left:72px;top:80.9px;font:25px 'Liberation Sans',sans-serif;line-height:normal;color:#3d6fa5;white-space:nowrap;transform-origin:0 0;transform:scaleX(0.875);-webkit-text-stroke:0.35px #3d6fa5">9 de Julio</span><span style="position:absolute;left:72px;top:116.9px;font:25px 'Liberation Sans',sans-serif;line-height:normal;color:#3d6fa5;white-space:nowrap;transform-origin:0 0;transform:scaleX(0.875);-webkit-text-stroke:0.35px #3d6fa5">Adolfo Alsina</span><span style="position:absolute;left:72px;top:152.9px;font:25px 'Liberation Sans',sans-serif;line-height:normal;color:#3d6fa5;white-space:nowrap;transform-origin:0 0;transform:scaleX(0.875);-webkit-text-stroke:0.35px #3d6fa5">Adolfo Gonzales Chaves</span><span style="position:absolute;left:72px;top:188.9px;font:25px 'Liberation Sans',sans-serif;line-height:normal;color:#3d6fa5;white-space:nowrap;transform-origin:0 0;transform:scaleX(0.875);-webkit-text-stroke:0.35px #3d6fa5">Alberti</span><span style="position:absolute;left:72px;top:224.9px;font:25px 'Liberation Sans',sans-serif;line-height:normal;color:#3d6fa5;white-space:nowrap;transform-origin:0 0;transform:scaleX(0.875);-webkit-text-stroke:0.35px #3d6fa5">Almirante Brown</span><span style="position:absolute;left:72px;top:260.9px;font:25px 'Liberation Sans',sans-serif;line-height:normal;color:#3d6fa5;white-space:nowrap;transform-origin:0 0;transform:scaleX(0.875);-webkit-text-stroke:0.35px #3d6fa5">Arrecifes</span><span style="position:absolute;left:72px;top:296.9px;font:25px 'Liberation Sans',sans-serif;line-height:normal;color:#3d6fa5;white-space:nowrap;transform-origin:0 0;transform:scaleX(0.875);-webkit-text-stroke:0.35px #3d6fa5">Avellaneda</span><span style="position:absolute;left:72px;top:332.9px;font:25px 'Liberation Sans',sans-serif;line-height:normal;color:#3d6fa5;white-space:nowrap;transform-origin:0 0;transform:scaleX(0.875);-webkit-text-stroke:0.35px #3d6fa5">Ayacucho</span><span style="position:absolute;left:72px;top:368.9px;font:25px 'Liberation Sans',sans-serif;line-height:normal;color:#3d6fa5;white-space:nowrap;transform-origin:0 0;transform:scaleX(0.875);-webkit-text-stroke:0.35px #3d6fa5">Azul</span><div style="position:absolute;left:439.5px;top:41px;width:26px;height:360px;background:#fff"></div><div style="position:absolute;left:438.5px;top:43px;width:28px;height:28px;border-radius:14px;background:#d7d7d7"></div></div><div style="position:absolute;left:9.5px;top:595.8px;width:465px;height:76.7px;background:#f1f1f1;border:1px solid #d6d6d6;box-shadow:0 1px 3px rgba(0,0,0,.12)"><svg style="position:absolute;left:9px;top:7.3px" width="22" height="22" viewBox="0 0 22 22"><rect x="1.2" y="1.2" width="19.6" height="19.6" rx="4" fill="#fff" stroke="#767676" stroke-width="1.7"/></svg><span style="position:absolute;left:38.5px;top:7.4px;font:24.4px 'Liberation Sans',sans-serif;line-height:normal;color:#1f1f1f;white-space:nowrap;transform-origin:0 0;transform:scaleX(0.905);-webkit-text-stroke:0.35px #1f1f1f">Oficinas contra la violencia de género</span><span style="position:absolute;left:9px;top:42.4px;font:24.4px 'Liberation Sans',sans-serif;line-height:normal;color:#1f1f1f;white-space:nowrap;transform-origin:0 0;transform:scaleX(0.905);-webkit-text-stroke:0.35px #1f1f1f">(135)</span></div><div style="position:absolute;left:9.5px;top:692.1px;width:465px;height:41.4px;background:#f1f1f1;border:1px solid #d6d6d6;box-shadow:0 1px 3px rgba(0,0,0,.12)"><svg style="position:absolute;left:9px;top:7.3px" width="22" height="22" viewBox="0 0 22 22"><rect x="1.2" y="1.2" width="19.6" height="19.6" rx="4" fill="#fff" stroke="#767676" stroke-width="1.7"/></svg><span style="position:absolute;left:38.5px;top:7.4px;font:24.4px 'Liberation Sans',sans-serif;line-height:normal;color:#1f1f1f;white-space:nowrap;transform-origin:0 0;transform:scaleX(0.905);-webkit-text-stroke:0.35px #1f1f1f">Oficinas Defensa al Consumidor (135)</span></div><div style="position:absolute;left:9.5px;top:752.9px;width:465px;height:40.9px;background:#f1f1f1;border:1px solid #d6d6d6;box-shadow:0 1px 3px rgba(0,0,0,.12)"><svg style="position:absolute;left:9px;top:7.3px" width="22" height="22" viewBox="0 0 22 22"><rect x="1.2" y="1.2" width="19.6" height="19.6" rx="4" fill="#fff" stroke="#767676" stroke-width="1.7"/></svg><span style="position:absolute;left:38.5px;top:7.4px;font:24.4px 'Liberation Sans',sans-serif;line-height:normal;color:#1f1f1f;white-space:nowrap;transform-origin:0 0;transform:scaleX(0.905);-webkit-text-stroke:0.35px #1f1f1f">Universidades (22)</span></div></div>
<div style="position:absolute;left:2763px;top:223.5px;width:72px;height:71px;background:#fff;border-radius:3px;box-shadow:0 2px 8px rgba(0,0,0,.3)"><svg width="72" height="71" viewBox="0 0 72 71"><path d="M22,31V21H32M40,21H50V31M50,40V50H40M32,50H22V40" fill="none" stroke="#666" stroke-width="5"/></svg></div><div style="position:absolute;left:2763px;top:1400px;width:72px;height:72px;background:#fff;border-radius:36px;box-shadow:0 2px 8px rgba(0,0,0,.3)"><svg width="72" height="72" viewBox="0 0 72 72"><path d="M28.5,24.4L36,16.7L43.5,24.4M47.6,28.5L55.3,36L47.6,43.5M43.5,47.6L36,55.3L28.5,47.6M24.4,43.5L16.7,36L24.4,28.5" fill="none" stroke="#666" stroke-width="3.9"/></svg></div><div style="position:absolute;left:2763px;top:1530px;width:72px;height:72px;background:#fff;border-radius:3px;box-shadow:0 2px 8px rgba(0,0,0,.3)"><svg width="72" height="72" viewBox="0 0 72 72"><circle cx="36" cy="18" r="9" fill="#f5b83d" stroke="#7a6a4a" stroke-width="1"/><path d="M26,30Q36,26 46,30L50,48L46,49L44,40V62H38V46H34V62H28V40L26,49L22,48Z" fill="#f5b83d" stroke="#7a6a4a" stroke-width="1"/><path d="M31,29L36,36L41,29Z" fill="#e0802a"/></svg></div>
</body></html>
